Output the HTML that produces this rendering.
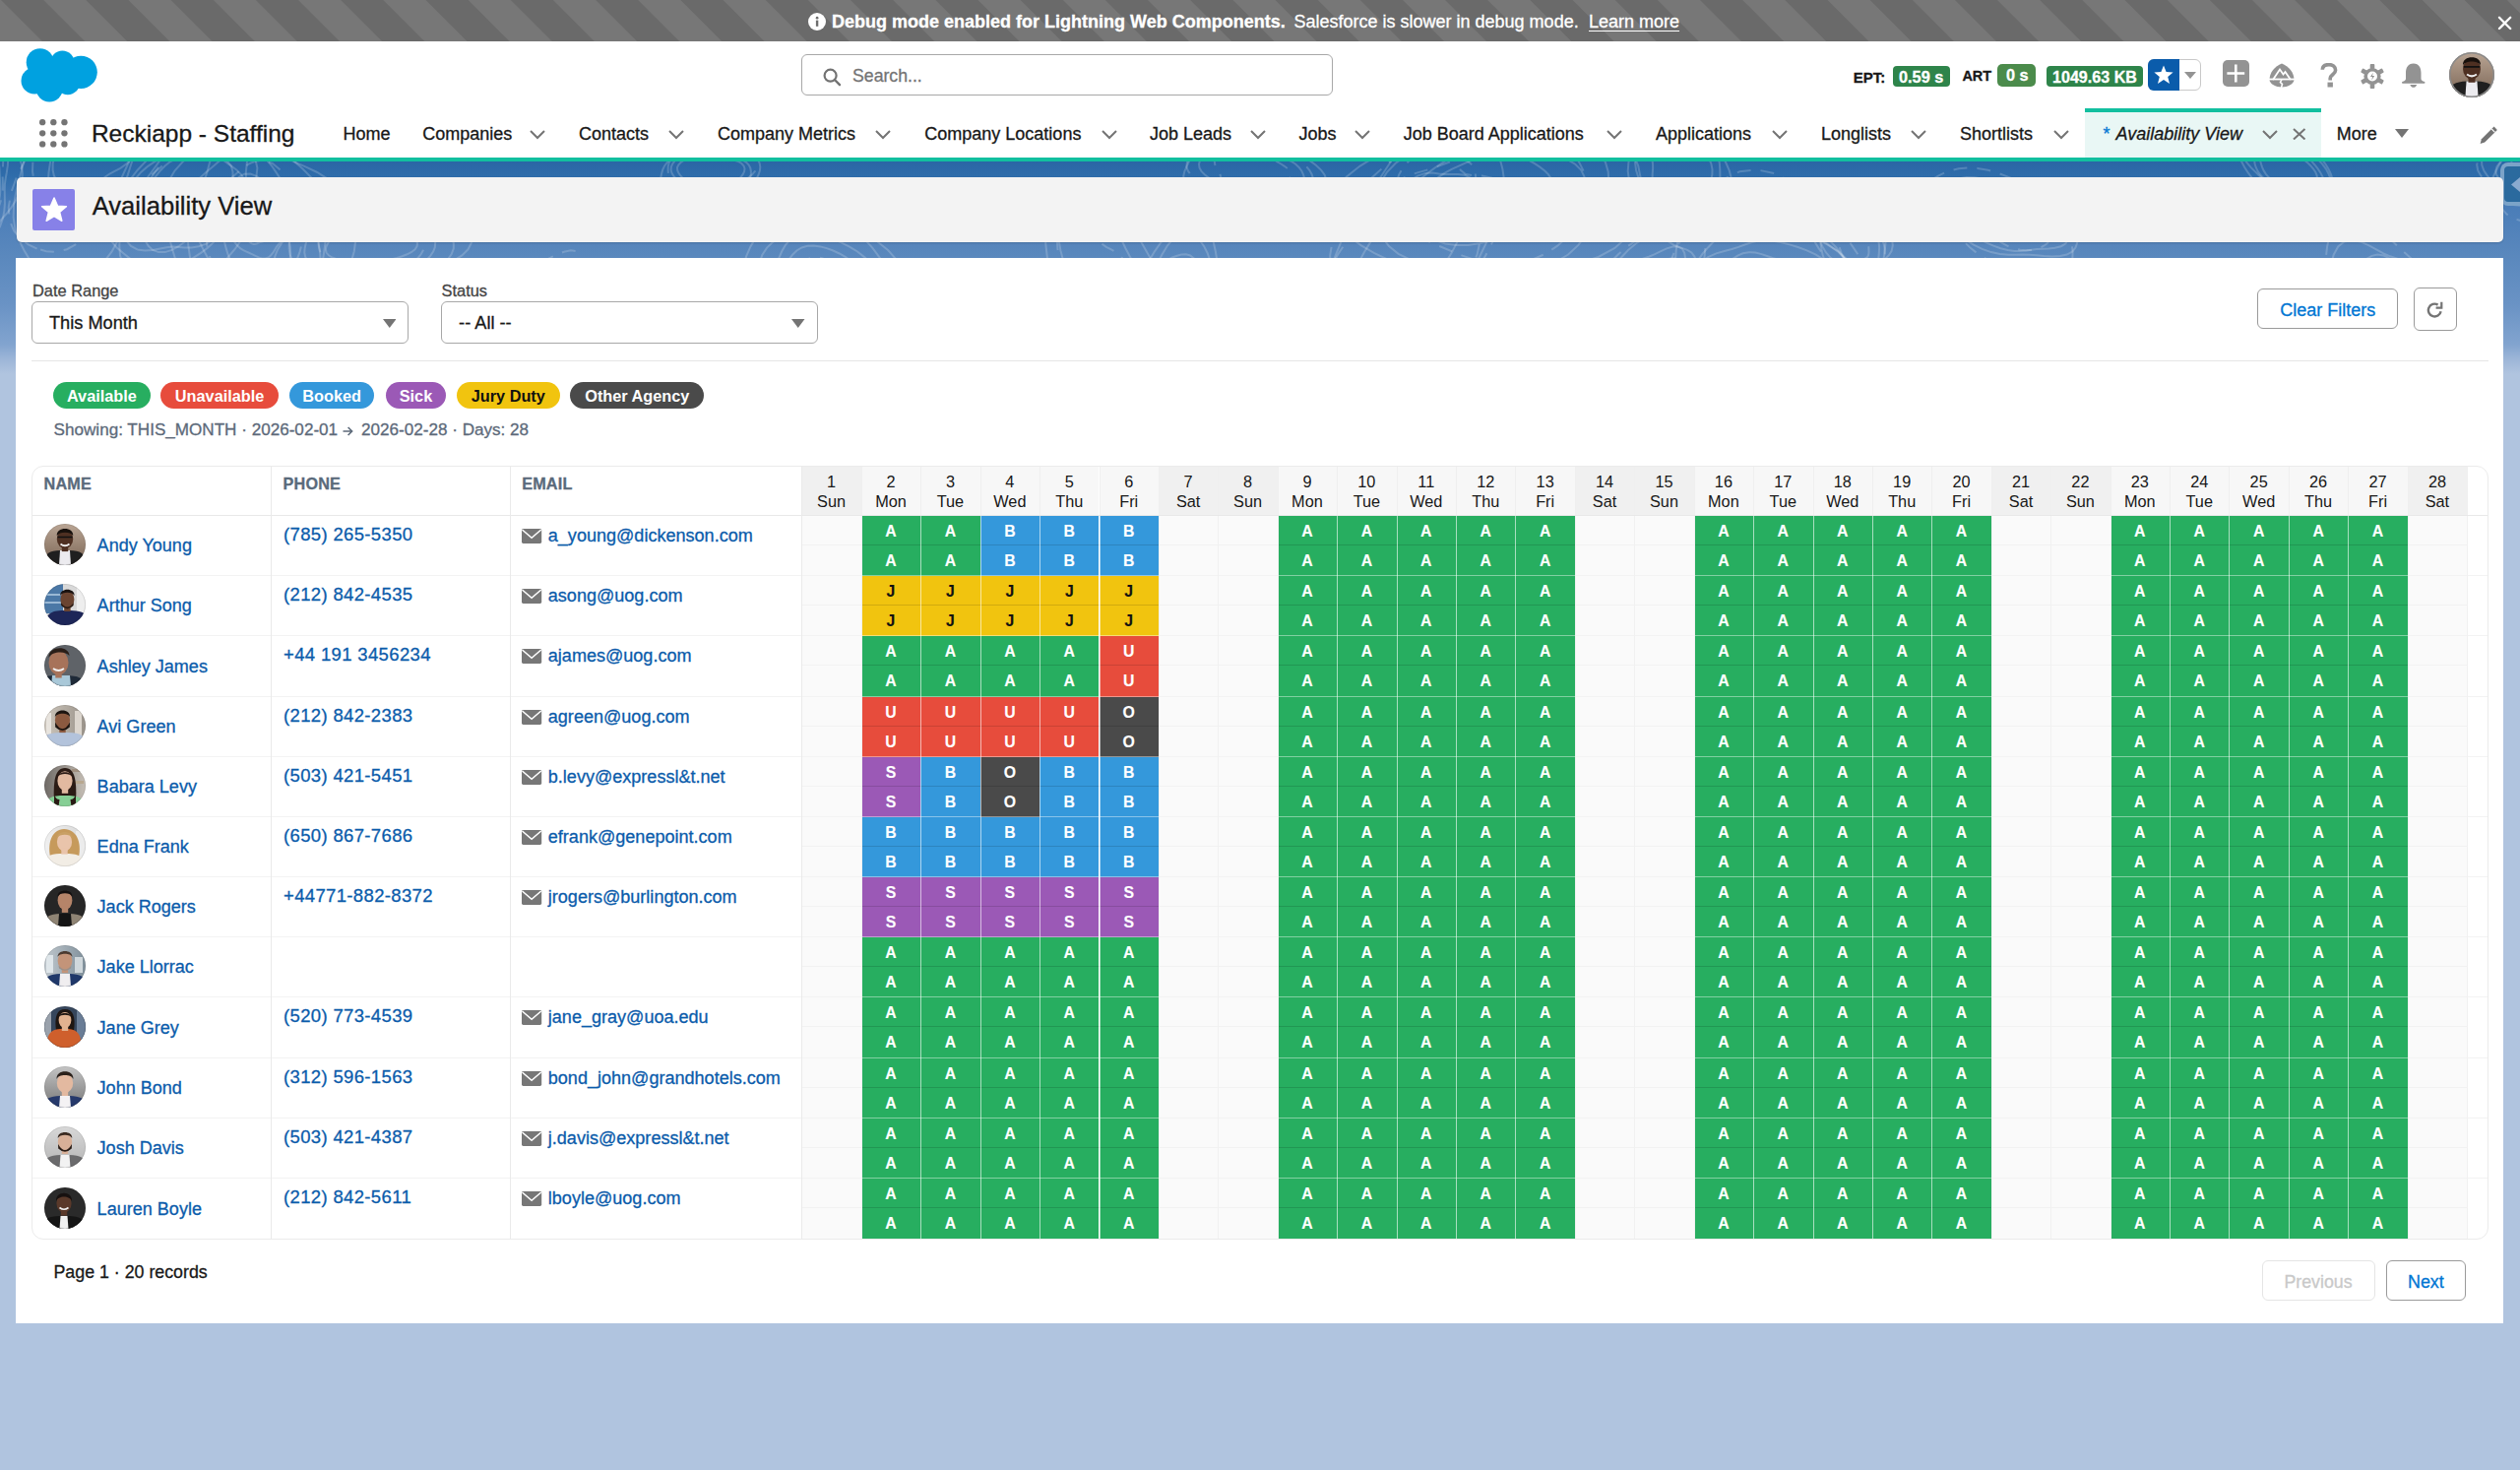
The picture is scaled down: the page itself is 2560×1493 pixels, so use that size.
<!DOCTYPE html>
<html><head><meta charset="utf-8"><title>Availability View</title>
<style>
*{box-sizing:border-box;margin:0;padding:0}
html,body{width:2560px;height:1493px;overflow:hidden;background:#b0c4df;font-family:"Liberation Sans",sans-serif}
.a{position:absolute}
.t{position:absolute;white-space:nowrap;-webkit-text-stroke:0.3px currentColor}

.cell{font-weight:700;font-size:15.8px;text-align:center;-webkit-text-stroke:0.12px currentColor}
.cell .s1{height:30px;line-height:32px;border-bottom:1px solid rgba(0,0,0,.13)}
.cell .s2{height:30px;line-height:32px}
</style></head>
<body>
<div class="a" style="left:0.00px;top:164.00px;width:2560.00px;height:1329.00px;background:linear-gradient(180deg,#2a66a5 0px,#2f6dab 16px,#4a7db8 46px,#5a88bd 96px,#6a93c5 146px,#82a4cf 186px,#9db6d8 201px,#b0c4df 216px,#b0c4df 100%)"></div>
<svg class="a" style="left:0.00px;top:0.00px;" width="2560" height="400" viewBox="0 0 2560 400"><defs><linearGradient id="topofade" x1="0" y1="0" x2="0" y2="1"><stop offset="0.41" stop-color="#fff" stop-opacity="1"/><stop offset="0.75" stop-color="#fff" stop-opacity="0.8"/><stop offset="0.93" stop-color="#fff" stop-opacity="0"/></linearGradient><mask id="topomask"><rect y="164" width="2560" height="236" fill="url(#topofade)"/></mask></defs><g mask="url(#topomask)" fill="none" stroke="rgba(255,255,255,0.19)" stroke-width="2"><path d="M-143.5 230.7 L-147.6 227.7 L-150.7 223.3 L-152.9 218.1 L-154.5 212.3 L-155.4 206.0 L-155.5 199.3 L-154.5 192.3 L-152.5 185.1 L-149.6 178.1 L-146.2 171.7 L-142.7 165.8 L-139.4 160.2 L-136.5 154.6 L-133.8 148.5 L-130.7 141.8 L-126.9 134.9 L-122.4 128.5 L-117.1 123.2 L-111.6 119.6 L-106.0 117.7 L-100.8 117.3 L-96.0 117.7 L-91.3 118.7 L-86.9 120.2 L-82.8 122.3 L-79.2 125.4 L-76.5 129.7 L-74.8 135.2 L-74.2 141.5 L-74.5 148.1 L-75.2 154.8 L-76.3 161.5 L-77.5 168.1 L-79.0 174.9 L-81.2 181.7 L-84.3 188.5 L-88.2 194.7 L-92.8 200.0 L-97.6 204.3 L-102.4 208.0 L-107.0 211.5 L-111.5 215.3 L-116.3 219.6 L-121.5 224.1 L-127.1 228.1 L-133.0 230.9 L-138.6 231.8 L-143.5 230.7"/><path d="M-136.0 216.0 L-138.6 213.2 L-141.0 210.1 L-143.2 206.8 L-145.2 203.2 L-146.6 199.0 L-147.3 194.2 L-147.0 188.7 L-145.9 183.0 L-144.2 177.4 L-142.2 171.8 L-140.4 166.4 L-138.6 160.6 L-136.7 154.4 L-134.2 147.9 L-131.0 141.2 L-126.9 135.2 L-122.0 130.3 L-116.9 127.1 L-111.8 125.4 L-107.1 125.1 L-102.8 125.7 L-99.0 126.9 L-95.5 128.6 L-92.4 130.8 L-89.8 133.7 L-87.9 137.3 L-86.7 141.5 L-85.9 145.9 L-85.3 150.3 L-84.5 154.5 L-83.5 158.8 L-82.4 163.4 L-81.7 168.7 L-81.7 174.7 L-82.9 181.3 L-85.4 187.9 L-89.0 194.0 L-93.3 199.3 L-97.9 203.8 L-102.5 207.6 L-107.1 211.2 L-111.6 214.4 L-116.2 217.3 L-120.8 219.4 L-125.3 220.4 L-129.4 220.0 L-133.0 218.5 L-136.0 216.0"/><path d="M-131.4 207.1 L-133.7 205.1 L-135.5 202.5 L-136.8 199.5 L-137.9 196.2 L-138.8 192.8 L-139.7 189.4 L-140.8 185.8 L-141.8 181.8 L-142.5 177.1 L-142.4 171.8 L-141.2 166.2 L-138.8 160.5 L-135.5 155.4 L-131.7 151.1 L-127.7 147.5 L-123.7 144.6 L-119.9 142.0 L-116.1 139.5 L-112.4 137.4 L-108.7 135.8 L-105.0 135.0 L-101.7 135.3 L-98.8 136.5 L-96.3 138.4 L-94.0 140.5 L-92.0 142.9 L-90.0 145.3 L-88.1 148.1 L-86.7 151.4 L-85.9 155.3 L-85.9 159.8 L-86.6 164.7 L-87.9 169.5 L-89.5 174.4 L-91.1 179.2 L-92.7 184.1 L-94.5 189.4 L-96.8 194.9 L-99.7 200.3 L-103.4 205.1 L-107.5 208.8 L-111.8 211.1 L-115.9 212.0 L-119.7 211.9 L-123.1 211.1 L-126.1 210.0 L-128.9 208.7 L-131.4 207.1"/><path d="M-29.7 247.3 L-33.8 246.2 L-37.8 244.7 L-41.9 242.9 L-46.0 240.3 L-49.7 236.4 L-52.7 230.9 L-54.7 223.9 L-55.5 215.9 L-55.5 207.5 L-55.1 199.1 L-54.5 190.8 L-53.9 182.4 L-53.0 173.7 L-51.5 164.7 L-49.0 155.9 L-45.3 148.3 L-40.6 142.5 L-35.5 139.0 L-30.4 137.4 L-25.6 137.0 L-21.4 136.9 L-17.4 136.4 L-13.5 135.5 L-9.5 134.5 L-5.4 134.1 L-1.3 134.7 L2.6 136.6 L6.3 139.6 L9.7 143.4 L13.2 147.9 L16.5 153.2 L19.6 159.6 L21.9 167.3 L22.9 176.3 L22.2 186.0 L19.7 195.6 L15.8 204.1 L11.2 211.2 L6.6 217.0 L2.3 221.9 L-1.6 226.6 L-5.1 231.6 L-8.7 236.7 L-12.6 241.4 L-16.8 245.0 L-21.2 247.2 L-25.5 247.8 L-29.7 247.3"/><path d="M-29.5 246.1 L-33.1 243.7 L-36.2 239.8 L-38.5 234.7 L-40.1 229.0 L-41.4 223.3 L-42.6 218.1 L-44.0 213.3 L-45.8 208.6 L-47.6 203.4 L-48.9 197.3 L-49.4 190.5 L-48.7 183.3 L-47.0 176.3 L-44.5 169.9 L-41.6 164.0 L-38.7 158.4 L-35.8 152.8 L-32.8 147.0 L-29.5 141.2 L-25.8 136.0 L-21.6 132.1 L-17.2 130.0 L-12.9 129.7 L-8.9 130.9 L-5.1 133.2 L-1.7 136.1 L1.4 139.4 L4.2 143.5 L6.5 148.5 L7.9 154.5 L8.3 161.3 L7.8 168.4 L6.8 175.2 L5.7 181.4 L4.9 187.1 L4.7 192.9 L4.8 199.3 L4.9 206.5 L4.3 214.5 L2.7 222.6 L0.0 230.0 L-3.6 236.2 L-7.8 240.7 L-12.3 243.8 L-16.8 245.8 L-21.2 246.9 L-25.4 247.1 L-29.5 246.1"/><path d="M-27.7 236.3 L-30.7 234.0 L-33.4 231.3 L-35.9 228.6 L-38.5 225.8 L-41.1 222.8 L-43.4 219.1 L-45.1 214.4 L-46.0 208.7 L-45.7 202.4 L-44.5 196.0 L-42.7 190.1 L-40.7 184.8 L-38.9 179.9 L-37.3 175.2 L-35.8 170.3 L-34.3 165.3 L-32.4 160.2 L-30.1 155.5 L-27.3 151.3 L-24.3 147.8 L-21.1 144.7 L-17.6 141.8 L-13.9 139.3 L-10.0 137.6 L-6.1 137.0 L-2.5 138.3 L0.5 141.7 L2.4 147.0 L3.4 153.4 L3.4 160.1 L3.1 166.5 L2.7 172.3 L2.6 177.4 L2.7 182.2 L2.9 187.3 L2.8 192.6 L2.2 198.1 L1.0 203.6 L-0.8 208.8 L-3.0 213.7 L-5.3 218.5 L-7.9 223.1 L-10.7 227.7 L-13.8 231.9 L-17.2 235.2 L-20.8 237.2 L-24.4 237.5 L-27.7 236.3" stroke-dasharray="14 10"/><path d="M-25.7 225.0 L-27.6 222.0 L-29.1 218.5 L-30.3 215.1 L-31.4 212.2 L-32.8 209.9 L-34.5 208.0 L-36.5 205.9 L-38.5 203.1 L-40.1 199.5 L-41.0 195.0 L-41.2 190.0 L-40.6 184.8 L-39.5 179.6 L-38.1 174.6 L-36.4 169.7 L-34.4 165.2 L-32.0 161.1 L-29.3 157.9 L-26.3 155.8 L-23.4 155.0 L-20.6 155.1 L-18.1 155.6 L-15.7 156.2 L-13.4 156.5 L-11.1 156.5 L-8.6 156.6 L-6.1 157.4 L-3.9 159.2 L-2.2 162.1 L-1.1 165.9 L-0.6 170.2 L-0.4 174.5 L-0.2 178.8 L0.0 183.0 L0.3 187.4 L0.4 192.1 L0.1 197.2 L-0.7 202.3 L-2.2 207.3 L-4.3 211.7 L-6.7 215.6 L-9.2 219.0 L-11.9 221.9 L-14.7 224.4 L-17.6 226.3 L-20.5 227.2 L-23.3 226.8 L-25.7 225.0"/><path d="M-23.8 214.6 L-25.4 213.3 L-26.9 211.9 L-28.4 210.7 L-29.9 209.3 L-31.4 207.7 L-32.6 205.5 L-33.5 202.9 L-34.1 199.8 L-34.5 196.6 L-34.7 193.2 L-34.8 189.6 L-34.8 185.8 L-34.7 181.8 L-34.2 177.5 L-33.1 173.4 L-31.4 169.7 L-29.2 167.0 L-26.8 165.4 L-24.4 164.8 L-22.2 164.9 L-20.2 165.2 L-18.4 165.3 L-16.7 165.3 L-15.0 165.1 L-13.2 165.1 L-11.5 165.6 L-9.9 166.6 L-8.5 168.0 L-7.1 169.7 L-5.7 171.6 L-4.3 173.9 L-3.0 176.5 L-2.0 179.7 L-1.4 183.4 L-1.6 187.5 L-2.4 191.6 L-3.8 195.5 L-5.5 198.8 L-7.4 201.6 L-9.1 204.2 L-10.8 206.8 L-12.4 209.3 L-14.1 211.9 L-16.0 214.0 L-18.1 215.4 L-20.1 215.9 L-22.1 215.6 L-23.8 214.6"/><path d="M-22.2 205.6 L-23.4 205.4 L-24.6 204.9 L-25.7 204.3 L-27.0 203.6 L-28.2 202.8 L-29.5 201.7 L-30.7 200.1 L-31.6 197.9 L-32.0 195.3 L-31.8 192.3 L-31.1 189.4 L-30.0 186.7 L-28.8 184.4 L-27.6 182.4 L-26.5 180.6 L-25.5 178.8 L-24.6 177.1 L-23.5 175.4 L-22.4 174.0 L-21.2 172.9 L-19.9 172.1 L-18.6 171.6 L-17.3 171.3 L-16.0 170.9 L-14.6 170.7 L-13.2 170.7 L-11.9 171.1 L-10.7 172.2 L-9.7 173.9 L-9.2 176.0 L-8.8 178.4 L-8.7 180.8 L-8.6 183.1 L-8.4 185.5 L-8.3 188.0 L-8.4 190.6 L-8.7 193.3 L-9.4 195.9 L-10.5 198.2 L-11.8 200.1 L-13.3 201.4 L-14.7 202.3 L-16.1 203.0 L-17.3 203.6 L-18.5 204.3 L-19.7 205.0 L-21.0 205.4 L-22.2 205.6"/><path d="M-21.1 199.2 L-21.8 199.0 L-22.5 198.7 L-23.2 198.2 L-23.8 197.5 L-24.2 196.5 L-24.5 195.3 L-24.6 194.0 L-24.6 192.7 L-24.6 191.4 L-24.6 190.2 L-24.6 189.0 L-24.5 187.7 L-24.3 186.4 L-23.9 185.1 L-23.4 184.0 L-22.8 183.1 L-22.1 182.4 L-21.4 181.9 L-20.8 181.3 L-20.2 180.6 L-19.6 179.8 L-18.9 179.0 L-18.1 178.3 L-17.3 177.9 L-16.4 177.8 L-15.7 178.1 L-15.0 178.7 L-14.5 179.5 L-14.0 180.5 L-13.6 181.6 L-13.3 182.8 L-13.2 184.1 L-13.3 185.6 L-13.5 187.0 L-14.0 188.3 L-14.5 189.5 L-15.0 190.5 L-15.4 191.4 L-15.7 192.4 L-16.0 193.6 L-16.3 194.8 L-16.7 196.1 L-17.3 197.3 L-18.0 198.3 L-18.8 198.9 L-19.5 199.2 L-20.3 199.3 L-21.1 199.2"/><path d="M30.6 264.5 L24.6 254.5 L19.4 244.2 L15.5 233.1 L13.6 220.7 L14.1 207.0 L16.7 192.8 L20.3 179.1 L23.7 166.2 L26.2 153.7 L27.7 140.7 L29.3 126.3 L32.6 110.4 L38.6 94.2 L47.6 79.1 L59.1 66.8 L71.7 57.9 L84.2 51.7 L96.2 46.6 L107.9 40.9 L120.1 34.0 L133.3 26.7 L147.1 20.8 L160.5 18.6 L172.1 21.6 L180.6 30.0 L185.5 42.5 L187.6 57.1 L187.7 72.2 L187.0 86.9 L185.7 101.1 L183.6 115.1 L180.0 129.3 L174.3 143.2 L166.9 156.4 L158.6 168.3 L150.6 179.2 L143.7 190.3 L137.7 203.1 L131.5 218.6 L123.8 236.8 L113.5 255.7 L100.5 272.7 L85.7 285.0 L70.8 290.6 L57.5 289.7 L46.4 283.5 L37.7 274.5 L30.6 264.5"/><path d="M37.6 252.6 L28.8 248.4 L20.8 242.5 L14.1 234.6 L9.8 223.9 L8.7 210.7 L11.2 195.8 L16.7 180.5 L23.7 166.2 L30.7 153.4 L36.7 141.7 L41.5 130.2 L45.8 118.2 L50.9 105.4 L57.6 92.9 L66.3 81.9 L76.3 73.9 L86.7 69.0 L96.6 66.5 L105.7 65.0 L114.6 62.9 L123.8 59.5 L133.9 55.2 L144.7 51.6 L155.4 50.3 L165.0 52.4 L172.8 58.0 L178.5 66.4 L182.6 76.7 L185.5 88.0 L187.5 100.1 L188.2 113.3 L186.7 127.7 L182.1 142.7 L174.2 157.2 L163.4 169.8 L151.3 179.6 L139.6 186.6 L129.5 191.9 L121.4 197.4 L114.5 204.7 L107.6 214.4 L99.6 225.9 L90.0 237.4 L79.2 247.0 L68.0 253.2 L57.1 255.8 L46.9 255.2 L37.6 252.6" stroke-dasharray="14 10"/><path d="M56.2 220.6 L53.0 213.6 L49.8 207.3 L46.1 201.9 L41.8 196.6 L37.7 190.6 L34.5 183.1 L33.0 174.1 L33.4 163.9 L35.2 153.1 L37.8 141.8 L40.9 130.0 L44.6 117.5 L49.6 104.3 L56.4 91.2 L65.3 79.8 L75.6 71.6 L86.5 67.7 L96.6 68.3 L105.1 72.2 L111.8 77.3 L117.4 81.7 L122.8 84.2 L128.7 84.9 L135.3 84.7 L142.3 85.1 L148.8 87.1 L154.2 91.2 L158.5 97.2 L161.9 104.3 L164.8 112.5 L167.3 121.5 L169.0 131.9 L169.1 143.6 L166.7 156.3 L161.3 169.2 L153.4 180.8 L143.8 190.4 L133.8 197.7 L124.3 203.5 L115.7 209.0 L107.6 214.9 L99.5 221.5 L90.9 227.9 L82.0 232.6 L73.4 234.2 L66.0 232.3 L60.3 227.3 L56.2 220.6" stroke-dasharray="14 10"/><path d="M63.8 207.5 L59.5 204.1 L55.4 200.5 L51.9 195.9 L49.7 189.9 L49.0 182.8 L49.5 175.0 L50.7 167.2 L51.9 159.6 L53.0 151.8 L54.1 143.7 L56.0 134.9 L59.1 125.9 L63.8 117.2 L69.8 109.6 L76.5 103.3 L83.4 98.0 L90.1 93.0 L97.0 87.6 L104.2 81.5 L112.2 75.4 L120.7 70.5 L128.9 68.3 L136.0 69.7 L141.0 74.9 L143.7 83.0 L144.4 92.5 L143.8 101.9 L143.0 110.4 L142.5 117.8 L142.4 124.6 L142.2 131.3 L141.5 138.4 L140.1 145.7 L137.9 153.1 L135.3 160.7 L132.6 168.7 L129.8 177.6 L126.4 187.6 L121.9 198.5 L115.8 209.3 L108.2 218.6 L99.5 224.7 L91.0 227.0 L83.3 225.5 L77.1 221.5 L72.2 216.4 L67.9 211.5 L63.8 207.5"/><path d="M70.7 195.7 L67.4 192.8 L64.2 189.8 L60.8 186.8 L57.5 183.2 L54.9 178.6 L53.6 172.8 L53.7 166.0 L55.3 158.8 L57.8 151.5 L60.8 144.4 L63.9 137.5 L67.2 130.6 L70.9 123.7 L75.4 117.3 L80.6 112.0 L86.4 108.5 L92.2 107.2 L97.4 107.8 L101.7 109.2 L105.5 110.4 L109.1 110.4 L113.3 109.0 L118.3 106.7 L123.9 104.4 L129.6 103.3 L134.8 104.1 L139.0 106.8 L141.9 111.3 L143.8 116.9 L144.9 123.3 L145.2 130.2 L144.6 137.6 L142.8 145.5 L139.4 153.3 L134.5 160.4 L128.6 166.4 L122.3 170.8 L116.5 173.9 L111.4 176.5 L107.1 179.5 L103.1 183.3 L98.9 188.1 L94.1 193.0 L88.8 197.1 L83.5 199.5 L78.5 199.8 L74.3 198.3 L70.7 195.7"/><path d="M131.4 262.1 L125.1 257.0 L118.6 251.5 L112.9 244.8 L109.0 236.5 L107.7 226.9 L109.0 216.6 L112.2 206.3 L116.4 196.3 L120.8 186.6 L125.2 176.8 L129.9 166.8 L135.6 156.6 L142.8 146.7 L151.5 137.9 L161.5 130.8 L172.2 125.5 L183.1 121.7 L194.1 119.0 L205.1 116.9 L216.2 115.8 L227.0 116.4 L236.8 119.5 L244.7 125.6 L249.8 134.4 L252.0 144.9 L251.9 156.0 L250.7 166.4 L249.8 175.6 L250.0 183.9 L251.4 191.9 L253.2 200.5 L254.4 210.1 L253.9 220.6 L251.0 231.5 L246.0 242.3 L239.1 252.5 L230.9 262.1 L221.7 271.1 L211.6 279.3 L200.6 286.3 L189.0 291.1 L177.3 293.0 L166.4 291.6 L156.9 287.2 L149.2 280.9 L142.9 274.0 L137.2 267.6 L131.4 262.1"/><path d="M125.1 268.9 L122.0 259.6 L121.3 249.6 L121.8 239.7 L122.7 230.6 L123.3 222.2 L123.7 214.0 L124.3 205.8 L126.0 197.2 L129.1 188.7 L133.7 180.5 L139.5 173.0 L145.9 166.1 L152.5 159.4 L159.4 152.8 L166.7 146.2 L174.8 140.1 L183.6 135.1 L192.8 132.0 L201.9 131.1 L210.5 132.3 L218.3 134.8 L225.6 137.9 L232.9 141.2 L240.4 144.5 L247.8 148.6 L254.5 154.1 L259.3 161.5 L261.4 170.6 L260.3 180.7 L256.6 191.0 L251.1 200.6 L245.1 209.1 L239.2 216.8 L234.0 224.1 L229.0 231.2 L223.8 238.3 L217.9 245.1 L211.3 251.4 L204.1 256.9 L196.3 261.8 L188.1 266.4 L179.4 271.1 L169.9 275.6 L159.6 279.3 L149.1 281.2 L139.1 280.3 L130.9 276.1 L125.1 268.9"/><path d="M139.5 253.4 L133.0 250.0 L128.4 244.5 L125.9 237.4 L125.2 229.5 L125.6 221.5 L126.6 213.5 L128.0 205.6 L130.0 197.6 L133.0 189.7 L137.3 182.1 L142.9 175.2 L149.5 169.4 L156.5 164.6 L163.5 160.6 L170.3 156.9 L177.1 153.4 L184.1 150.0 L191.3 147.4 L198.6 146.1 L205.5 146.7 L211.6 149.0 L216.7 152.7 L221.0 157.0 L225.0 161.1 L229.5 164.8 L234.6 168.4 L240.2 172.4 L245.3 177.6 L249.1 184.1 L250.7 192.0 L249.9 200.6 L246.8 209.3 L242.1 217.6 L236.5 225.2 L230.3 232.0 L223.7 238.2 L216.7 243.5 L209.4 247.7 L201.9 250.3 L194.5 251.5 L187.6 251.4 L181.4 250.9 L175.4 250.6 L169.4 251.2 L162.7 252.5 L155.1 253.9 L147.2 254.5 L139.5 253.4"/><path d="M147.6 244.6 L145.3 239.1 L143.6 233.6 L142.0 228.2 L140.7 222.8 L140.0 217.1 L140.2 211.2 L141.6 205.0 L144.2 199.1 L147.6 193.4 L151.3 188.2 L155.1 183.2 L159.0 178.2 L163.0 173.2 L167.6 168.5 L172.8 164.3 L178.5 161.3 L184.4 159.6 L190.2 159.0 L195.8 159.0 L201.2 159.2 L206.8 159.2 L212.8 159.0 L219.2 159.3 L225.4 160.7 L230.8 163.6 L234.7 168.3 L236.5 174.5 L236.5 181.4 L234.9 188.4 L232.4 195.2 L229.6 201.5 L226.6 207.3 L223.4 212.8 L219.9 218.0 L215.9 222.7 L211.4 226.9 L206.8 230.5 L202.1 233.8 L197.5 237.3 L192.7 241.3 L187.4 245.7 L181.4 250.2 L174.7 253.9 L167.7 256.1 L161.0 256.1 L155.2 253.9 L150.7 249.8 L147.6 244.6"/><path d="M295.8 314.6 L285.8 313.4 L276.7 313.2 L268.1 315.0 L258.9 318.6 L248.3 322.7 L236.1 325.1 L223.0 323.9 L210.4 318.2 L199.4 308.4 L190.7 295.6 L184.3 281.5 L179.4 267.3 L175.1 253.2 L171.3 239.3 L168.1 225.1 L166.6 210.7 L167.5 196.7 L171.3 184.0 L177.6 173.3 L185.4 164.6 L193.8 157.4 L202.1 150.8 L210.3 144.4 L218.9 138.3 L228.4 133.7 L238.9 131.6 L250.0 133.1 L260.9 137.9 L271.0 144.8 L280.3 152.3 L289.2 159.0 L298.8 164.4 L309.8 169.2 L322.2 175.0 L335.0 183.1 L346.6 194.3 L355.4 208.4 L360.5 224.1 L361.7 240.1 L359.8 255.2 L355.8 269.0 L350.5 281.4 L344.2 292.5 L336.7 301.9 L327.9 309.2 L317.6 313.6 L306.7 315.2 L295.8 314.6"/><path d="M292.2 306.3 L284.4 309.0 L276.7 312.9 L268.4 317.9 L258.8 323.0 L247.8 326.3 L235.8 326.2 L223.9 321.7 L213.4 313.0 L205.1 301.1 L199.3 287.8 L195.5 274.2 L193.0 261.3 L191.3 249.2 L190.4 237.7 L190.6 226.8 L192.2 216.6 L195.2 207.4 L199.3 199.3 L203.5 191.9 L207.2 184.4 L210.1 175.9 L212.8 165.9 L216.3 154.9 L221.5 144.2 L229.1 135.8 L238.8 131.2 L249.8 131.0 L260.9 134.8 L271.5 141.3 L281.1 148.9 L290.2 156.5 L299.0 164.0 L307.8 171.7 L316.2 180.4 L323.4 190.6 L328.6 202.2 L331.4 214.4 L332.1 226.4 L331.4 237.7 L330.2 248.4 L328.8 258.7 L327.3 268.8 L325.0 278.8 L321.2 287.8 L315.6 295.2 L308.4 300.5 L300.3 303.9 L292.2 306.3"/><path d="M293.9 310.3 L283.7 307.0 L274.4 302.1 L266.3 297.2 L259.2 293.5 L252.3 291.1 L245.2 289.4 L237.8 287.2 L230.3 283.7 L223.2 278.3 L217.1 271.4 L211.9 263.5 L207.3 255.1 L203.0 246.3 L198.8 237.1 L195.1 227.1 L192.5 216.6 L191.8 206.1 L193.6 196.1 L197.5 187.6 L203.1 180.6 L209.3 174.9 L215.6 169.8 L221.7 164.5 L228.0 159.2 L235.0 154.3 L243.0 151.2 L251.8 151.0 L260.7 154.2 L269.0 160.4 L276.1 168.5 L281.9 177.1 L286.9 185.0 L291.8 191.9 L297.1 198.0 L302.9 204.0 L308.8 210.8 L314.2 218.6 L318.5 227.5 L321.6 237.0 L323.7 246.9 L325.1 257.2 L325.8 268.0 L325.6 279.2 L323.8 290.2 L319.6 299.9 L312.9 307.0 L304.0 310.5 L293.9 310.3"/><path d="M285.7 291.4 L279.8 294.7 L273.1 295.7 L266.1 294.7 L259.2 292.2 L252.5 289.2 L246.0 286.2 L239.3 283.3 L232.3 280.2 L225.2 275.9 L218.6 270.0 L213.6 262.4 L210.6 253.6 L209.9 244.6 L211.0 236.1 L213.0 228.5 L215.2 221.9 L217.0 215.7 L218.5 209.7 L220.0 203.7 L222.0 197.8 L224.8 192.5 L228.3 187.7 L232.4 183.5 L236.8 179.3 L241.6 175.0 L247.0 170.4 L253.3 166.2 L260.6 163.4 L268.7 163.1 L276.8 166.0 L284.0 172.0 L289.6 180.3 L293.6 189.6 L296.2 198.8 L298.1 207.2 L300.0 214.7 L302.1 221.7 L304.3 228.6 L305.9 235.7 L306.6 242.9 L306.0 249.9 L304.4 256.4 L302.1 262.4 L299.6 268.2 L297.0 274.2 L294.0 280.4 L290.4 286.4 L285.7 291.4" stroke-dasharray="14 10"/><path d="M279.2 276.5 L274.1 276.9 L269.3 277.3 L264.4 277.8 L259.3 278.5 L253.9 278.5 L248.3 277.4 L242.8 274.6 L238.0 270.1 L234.3 264.4 L231.5 258.2 L229.6 251.9 L228.1 246.0 L226.8 240.4 L225.8 234.9 L225.2 229.5 L225.4 224.2 L226.3 219.3 L227.9 214.8 L229.8 210.7 L231.6 206.6 L233.1 201.9 L234.5 196.4 L236.3 190.4 L239.0 184.4 L243.0 179.5 L248.3 176.7 L254.3 176.5 L260.4 178.8 L266.1 183.0 L271.1 188.1 L275.4 193.5 L279.1 198.6 L282.6 203.5 L285.7 208.4 L288.4 213.5 L290.3 218.9 L291.5 224.3 L292.1 229.6 L292.5 234.7 L293.1 239.8 L293.9 245.2 L294.8 251.2 L295.2 257.5 L294.5 263.6 L292.4 269.0 L288.8 273.0 L284.2 275.4 L279.2 276.5"/><path d="M272.6 261.5 L269.5 262.5 L266.2 262.4 L262.8 261.4 L259.5 259.9 L256.5 258.4 L253.5 257.0 L250.4 255.6 L247.2 254.1 L244.0 252.1 L241.0 249.4 L238.5 246.1 L236.4 242.4 L234.7 238.4 L233.3 234.3 L231.9 230.0 L230.7 225.4 L230.0 220.7 L230.1 216.0 L231.4 211.8 L234.0 208.7 L237.5 206.9 L241.5 206.4 L245.5 206.7 L249.0 207.4 L252.0 207.7 L254.7 207.6 L257.3 207.0 L260.1 206.3 L263.2 206.0 L266.4 206.4 L269.7 207.6 L273.0 209.4 L276.2 211.6 L279.4 214.2 L282.6 217.3 L285.7 220.9 L288.2 225.1 L289.7 229.8 L290.1 234.5 L289.2 238.9 L287.3 242.7 L285.0 245.8 L282.7 248.5 L280.7 251.1 L279.0 253.9 L277.3 256.7 L275.2 259.4 L272.6 261.5"/><path d="M265.7 245.7 L264.3 246.0 L262.8 246.6 L261.3 247.2 L259.7 247.7 L257.8 247.9 L255.9 247.4 L254.2 246.4 L252.6 244.8 L251.3 242.9 L250.2 241.0 L249.1 239.2 L247.9 237.4 L246.6 235.5 L245.3 233.3 L244.4 231.0 L243.9 228.5 L244.1 226.1 L244.8 224.0 L245.9 222.2 L247.3 220.7 L248.7 219.5 L250.1 218.5 L251.7 217.7 L253.3 217.2 L255.0 217.1 L256.8 217.4 L258.5 218.2 L260.0 219.0 L261.4 219.7 L262.9 220.2 L264.6 220.4 L266.5 220.5 L268.7 221.0 L270.9 222.0 L272.9 223.6 L274.4 225.8 L275.3 228.3 L275.6 230.9 L275.4 233.4 L275.0 235.7 L274.5 237.8 L273.8 239.7 L272.9 241.5 L271.8 243.0 L270.5 244.2 L268.9 244.9 L267.3 245.4 L265.7 245.7"/><path d="M281.8 254.1 L285.5 248.0 L289.4 242.2 L293.1 236.5 L296.8 230.8 L301.2 225.0 L307.1 219.2 L315.1 213.9 L325.0 209.4 L336.3 206.0 L348.4 203.5 L360.8 201.7 L373.3 200.4 L385.9 199.5 L398.8 199.0 L411.7 199.3 L424.4 200.6 L436.1 203.1 L446.4 206.8 L455.1 211.3 L462.2 216.4 L468.2 221.9 L473.2 227.6 L477.0 233.7 L479.1 240.1 L478.8 246.7 L475.5 253.3 L469.3 259.4 L460.8 264.8 L451.1 269.5 L441.1 273.5 L431.6 277.2 L422.5 281.0 L413.3 285.0 L403.4 289.0 L392.4 292.6 L380.1 295.5 L367.0 297.2 L353.7 297.6 L340.5 296.9 L327.8 295.2 L315.7 292.7 L304.4 289.4 L294.4 285.2 L286.4 280.1 L281.0 274.0 L278.6 267.4 L279.2 260.7 L281.8 254.1"/><path d="M293.7 253.3 L293.7 247.9 L294.5 242.5 L296.4 236.9 L299.8 231.4 L305.1 226.1 L312.3 221.3 L321.0 217.1 L330.8 213.7 L341.0 210.8 L351.6 208.4 L362.4 206.3 L373.6 204.7 L385.1 203.9 L396.5 204.1 L407.1 205.7 L416.4 208.4 L424.1 212.1 L430.1 216.3 L435.2 220.5 L440.0 224.5 L444.9 228.4 L450.0 232.4 L454.8 236.7 L458.7 241.5 L460.8 246.8 L460.8 252.4 L458.7 258.0 L454.9 263.6 L449.6 269.0 L442.9 274.2 L435.0 279.0 L425.6 283.2 L414.8 286.5 L403.2 288.6 L391.2 289.3 L379.6 288.8 L368.9 287.4 L359.1 285.7 L349.9 284.0 L340.9 282.5 L331.6 280.9 L322.4 279.0 L313.7 276.3 L306.2 272.9 L300.5 268.6 L296.7 263.7 L294.6 258.6 L293.7 253.3"/><path d="M309.6 252.2 L310.6 247.8 L311.9 243.5 L313.8 239.2 L316.4 234.9 L320.3 230.6 L325.4 226.6 L331.9 223.0 L339.3 219.9 L347.3 217.2 L355.8 214.8 L364.6 212.6 L374.1 210.8 L384.0 209.5 L394.2 209.1 L404.0 210.0 L412.7 212.0 L419.9 215.2 L425.3 219.1 L429.2 223.2 L432.1 227.3 L434.7 231.2 L437.2 235.0 L439.5 238.8 L441.4 242.8 L442.2 246.9 L441.8 251.2 L440.1 255.6 L437.2 259.9 L433.4 264.2 L428.8 268.5 L423.3 272.7 L416.6 276.6 L408.5 280.0 L399.3 282.6 L389.4 284.0 L379.3 284.3 L369.7 283.6 L360.8 282.2 L352.5 280.5 L344.6 278.8 L337.0 276.9 L329.5 274.8 L322.6 272.2 L316.8 269.0 L312.6 265.2 L310.2 261.0 L309.3 256.6 L309.6 252.2"/><path d="M324.0 251.1 L323.5 247.7 L323.7 244.2 L324.8 240.6 L327.1 237.1 L330.5 233.7 L334.9 230.5 L339.9 227.4 L345.5 224.5 L351.7 221.8 L358.6 219.3 L366.3 217.4 L374.5 216.4 L382.7 216.4 L390.4 217.5 L397.1 219.4 L402.8 221.8 L407.6 224.4 L411.8 226.9 L416.0 229.3 L420.1 231.7 L424.1 234.2 L427.5 237.0 L430.0 240.1 L431.4 243.5 L431.7 247.0 L431.2 250.6 L429.8 254.3 L427.8 258.0 L424.9 261.7 L420.9 265.3 L415.6 268.5 L409.1 271.2 L401.8 273.1 L394.0 274.3 L386.2 274.8 L378.6 275.0 L371.3 275.0 L364.1 274.9 L356.9 274.5 L349.7 273.8 L343.0 272.4 L337.2 270.3 L332.7 267.6 L329.4 264.5 L327.3 261.1 L325.9 257.8 L324.9 254.4 L324.0 251.1" stroke-dasharray="14 10"/><path d="M331.4 250.6 L332.8 247.7 L334.6 244.9 L336.7 242.2 L339.0 239.6 L341.6 237.0 L344.9 234.5 L348.9 232.3 L353.6 230.5 L358.9 229.1 L364.4 228.2 L369.9 227.7 L375.3 227.4 L380.6 227.2 L385.9 227.2 L391.2 227.5 L396.3 228.1 L401.1 229.2 L405.3 230.7 L408.9 232.5 L412.2 234.5 L415.2 236.7 L418.1 238.9 L420.8 241.4 L422.9 244.1 L424.0 247.1 L423.6 250.2 L421.6 253.2 L418.2 256.0 L413.6 258.3 L408.5 260.3 L403.3 261.9 L398.3 263.2 L393.3 264.4 L388.3 265.5 L383.2 266.3 L378.1 266.9 L372.9 267.1 L367.7 267.0 L362.6 266.6 L357.6 266.1 L352.4 265.4 L347.2 264.5 L342.1 263.3 L337.5 261.5 L333.9 259.3 L331.6 256.6 L330.9 253.6 L331.4 250.6"/><path d="M489.7 358.9 L487.3 355.7 L485.8 351.8 L485.4 347.0 L486.2 341.5 L488.0 335.7 L490.4 329.6 L493.0 323.5 L495.8 317.2 L499.1 310.6 L503.2 303.6 L508.4 296.4 L514.7 289.5 L521.7 283.3 L529.1 278.1 L536.4 273.7 L543.6 269.9 L550.7 266.1 L557.9 262.3 L565.5 258.6 L573.0 255.7 L579.9 254.3 L585.4 255.1 L589.1 258.0 L590.8 262.6 L590.9 268.4 L590.0 274.5 L588.6 280.4 L587.1 286.2 L585.5 291.8 L583.5 297.6 L580.7 303.7 L577.1 309.9 L572.9 316.1 L568.3 322.3 L563.4 328.7 L558.3 335.4 L552.6 342.7 L546.1 350.3 L538.5 357.8 L530.2 364.4 L521.9 369.2 L514.1 371.6 L507.6 371.8 L502.5 370.2 L498.5 367.6 L495.3 364.6 L492.4 361.8 L489.7 358.9" stroke-dasharray="14 10"/><path d="M492.2 356.5 L491.5 352.2 L491.4 347.6 L491.7 342.9 L492.6 338.1 L494.2 332.9 L496.8 327.4 L500.2 321.9 L504.1 316.5 L508.1 311.2 L512.0 306.1 L515.8 300.8 L519.8 294.9 L524.4 288.4 L529.9 281.6 L536.5 275.2 L543.6 269.8 L550.7 266.1 L557.2 264.1 L562.8 263.8 L567.5 264.7 L571.4 266.1 L574.9 267.9 L577.9 270.1 L580.2 272.8 L581.6 276.2 L582.0 280.4 L581.3 285.1 L580.0 290.1 L578.4 295.0 L576.9 299.9 L575.4 304.9 L573.6 310.2 L571.1 316.0 L567.4 322.1 L562.6 328.2 L556.9 333.9 L550.7 338.9 L544.4 343.1 L538.3 346.9 L532.2 350.6 L526.0 354.4 L519.5 358.1 L512.9 361.4 L506.6 363.6 L501.0 364.2 L496.7 363.0 L493.8 360.3 L492.2 356.5"/><path d="M505.1 344.2 L503.8 341.8 L502.8 339.2 L501.7 336.5 L500.5 333.7 L499.2 330.6 L498.5 326.8 L498.8 322.2 L500.7 316.8 L504.1 311.0 L508.9 305.2 L514.6 300.1 L520.5 295.7 L526.2 291.9 L531.6 288.7 L536.7 285.7 L541.7 282.9 L546.6 280.6 L551.3 278.8 L555.6 277.8 L559.4 277.7 L562.7 278.2 L565.7 279.1 L568.6 280.0 L571.5 281.0 L574.3 282.4 L576.5 284.4 L577.9 287.3 L577.9 291.2 L576.7 295.8 L574.5 300.7 L571.7 305.7 L568.7 310.6 L565.7 315.6 L562.6 320.7 L559.0 326.1 L554.7 331.6 L549.6 336.9 L544.0 341.4 L538.2 344.9 L532.7 347.1 L527.7 348.3 L523.3 348.7 L519.3 348.8 L515.7 348.7 L512.3 348.4 L509.3 347.6 L506.9 346.2 L505.1 344.2"/><path d="M505.8 343.5 L504.0 341.7 L502.8 339.1 L502.3 336.1 L502.3 332.7 L503.0 328.9 L504.6 324.7 L507.2 320.3 L510.6 315.9 L514.5 311.7 L518.7 308.0 L522.6 304.8 L526.3 301.7 L529.7 298.6 L533.2 295.4 L536.9 292.0 L540.9 288.7 L545.1 286.1 L549.1 284.2 L552.8 283.3 L556.1 283.2 L558.9 283.5 L561.6 284.0 L564.2 284.7 L566.8 285.5 L569.0 286.8 L570.7 288.8 L571.5 291.5 L571.3 294.8 L570.3 298.7 L568.6 302.7 L566.5 306.9 L564.2 311.0 L561.5 315.3 L558.4 319.5 L554.7 323.6 L550.6 327.3 L546.2 330.3 L541.9 332.5 L537.9 334.0 L534.4 335.1 L531.0 336.3 L527.7 337.8 L524.0 339.8 L520.0 341.8 L515.8 343.5 L511.8 344.6 L508.4 344.6 L505.8 343.5"/><path d="M606.0 406.7 L601.3 404.4 L596.8 401.6 L592.6 398.0 L589.1 393.5 L586.6 388.1 L585.1 382.0 L584.7 375.5 L585.1 369.0 L585.9 362.7 L586.9 356.5 L587.9 350.4 L589.1 344.2 L591.0 338.0 L593.8 332.1 L597.5 326.9 L602.0 322.9 L606.9 319.9 L611.8 317.8 L616.5 315.9 L621.1 313.9 L625.8 311.6 L630.9 309.3 L636.4 307.5 L642.0 306.8 L647.4 307.7 L652.3 310.2 L656.4 314.1 L659.8 319.0 L662.5 324.5 L664.5 330.5 L665.8 336.8 L666.2 343.5 L665.4 350.3 L663.4 357.0 L660.4 363.1 L656.7 368.5 L652.9 373.2 L649.4 377.5 L646.3 381.9 L643.4 386.7 L640.4 392.1 L636.8 397.6 L632.4 402.5 L627.4 406.3 L621.9 408.5 L616.4 409.1 L611.1 408.4 L606.0 406.7"/><path d="M610.2 395.0 L606.7 392.9 L603.2 390.9 L599.7 388.7 L596.1 386.2 L592.9 382.9 L590.2 378.7 L588.5 373.7 L587.6 368.2 L587.6 362.4 L588.2 356.5 L589.2 350.7 L590.7 344.8 L592.9 339.1 L595.9 333.8 L599.7 329.4 L604.1 326.1 L608.9 324.2 L613.5 323.3 L617.8 323.0 L621.7 322.7 L625.4 321.9 L629.3 320.6 L633.4 319.2 L637.9 318.1 L642.4 318.1 L646.8 319.3 L650.6 321.7 L653.9 325.2 L656.5 329.5 L658.6 334.3 L660.3 339.4 L661.3 345.0 L661.5 350.9 L660.6 357.0 L658.7 362.8 L655.8 368.2 L652.3 372.9 L648.7 376.9 L645.2 380.6 L641.8 384.2 L638.5 388.0 L635.0 391.7 L631.0 395.0 L626.7 397.3 L622.3 398.4 L618.0 398.1 L613.9 396.8 L610.2 395.0" stroke-dasharray="14 10"/><path d="M612.6 388.4 L609.6 387.0 L606.5 385.5 L603.3 383.9 L600.0 382.1 L596.6 379.7 L593.7 376.4 L591.6 372.2 L590.8 367.2 L591.3 361.8 L592.9 356.6 L595.3 351.7 L598.1 347.4 L600.8 343.6 L603.5 340.1 L606.2 336.7 L609.1 333.7 L612.1 331.1 L615.3 329.0 L618.6 327.4 L621.9 326.1 L625.3 325.0 L628.8 323.9 L632.5 322.9 L636.4 322.3 L640.4 322.4 L644.1 323.7 L647.2 326.2 L649.5 329.8 L651.0 334.1 L651.8 338.7 L652.2 343.3 L652.5 347.8 L652.7 352.3 L652.8 356.9 L652.3 361.7 L651.2 366.5 L649.1 371.1 L646.4 375.1 L643.2 378.4 L639.8 381.1 L636.3 383.3 L633.0 385.3 L629.6 387.1 L626.2 388.7 L622.7 389.6 L619.2 389.9 L615.8 389.4 L612.6 388.4" stroke-dasharray="14 10"/><path d="M672.1 176.1 L673.3 172.2 L675.1 168.4 L677.8 164.8 L681.2 161.6 L685.2 158.7 L689.2 156.0 L693.1 153.1 L697.0 149.9 L701.4 146.4 L706.7 142.8 L713.2 139.7 L720.8 137.7 L728.8 137.2 L736.6 138.3 L743.6 140.6 L749.5 143.8 L754.4 147.4 L758.8 150.9 L762.8 154.3 L766.5 157.8 L769.5 161.5 L771.6 165.5 L772.3 169.7 L771.8 173.8 L770.4 177.8 L768.5 181.6 L766.5 185.3 L764.5 189.1 L762.1 192.9 L758.8 196.7 L754.4 200.0 L748.8 202.6 L742.5 204.4 L735.7 205.3 L729.0 205.8 L722.4 206.2 L715.6 206.7 L708.5 207.2 L700.9 207.4 L693.1 206.9 L685.7 205.2 L679.4 202.3 L674.8 198.4 L672.1 193.9 L670.9 189.1 L670.8 184.6 L671.3 180.2 L672.1 176.1"/><path d="M678.9 175.9 L678.6 172.5 L678.7 168.9 L679.7 165.3 L682.0 161.9 L685.7 159.0 L690.4 156.7 L695.6 155.0 L700.8 153.7 L705.7 152.4 L710.5 150.9 L715.5 149.2 L721.0 147.5 L727.1 146.2 L733.6 145.7 L740.1 146.1 L746.2 147.5 L751.7 149.7 L756.5 152.3 L760.8 155.3 L764.4 158.6 L767.1 162.2 L768.7 166.1 L768.7 170.0 L767.0 173.9 L764.1 177.4 L760.4 180.4 L756.8 183.0 L753.8 185.5 L751.4 188.2 L749.5 191.2 L747.3 194.5 L744.2 197.9 L740.0 200.9 L734.7 203.2 L728.7 204.5 L722.3 205.0 L716.0 204.7 L709.8 204.0 L703.7 203.0 L697.8 201.6 L692.3 199.7 L687.5 197.1 L683.8 193.9 L681.4 190.3 L680.1 186.6 L679.5 182.9 L679.2 179.4 L678.9 175.9" stroke-dasharray="14 10"/><path d="M682.5 175.9 L681.6 172.6 L681.9 169.3 L683.4 166.1 L685.8 163.1 L688.8 160.3 L692.2 157.8 L696.1 155.4 L700.5 153.4 L705.3 151.9 L710.6 151.1 L716.0 151.3 L721.1 152.3 L725.6 153.9 L729.5 155.6 L733.1 157.1 L736.6 158.2 L740.6 159.0 L745.1 159.8 L749.8 160.8 L754.3 162.5 L758.0 164.8 L760.7 167.6 L762.3 170.7 L762.9 174.0 L762.8 177.3 L762.1 180.7 L760.7 183.9 L758.4 187.1 L755.2 189.8 L750.9 192.1 L746.0 193.6 L740.8 194.5 L735.8 195.0 L731.1 195.3 L726.6 195.8 L722.1 196.4 L717.5 196.9 L712.6 197.2 L707.7 196.8 L703.2 195.6 L699.3 193.7 L696.2 191.4 L693.7 188.9 L691.5 186.5 L689.2 184.0 L686.8 181.5 L684.4 178.8 L682.5 175.9"/><path d="M689.3 175.7 L688.2 173.0 L688.0 170.2 L689.2 167.5 L691.5 165.0 L694.7 163.0 L698.4 161.4 L702.2 160.1 L706.1 159.1 L709.9 158.3 L713.7 157.8 L717.5 157.6 L721.2 157.9 L724.8 158.5 L728.0 159.3 L731.1 160.1 L734.3 160.8 L737.8 161.3 L741.8 161.9 L746.0 162.7 L750.1 164.1 L753.4 166.0 L755.6 168.5 L756.5 171.3 L756.1 174.1 L754.8 176.9 L753.0 179.4 L751.0 181.7 L748.9 183.9 L746.5 186.0 L743.7 187.9 L740.5 189.4 L736.9 190.4 L733.1 191.1 L729.3 191.5 L725.7 191.8 L722.0 192.1 L718.3 192.4 L714.5 192.6 L710.5 192.4 L706.7 191.7 L703.3 190.4 L700.5 188.6 L698.4 186.6 L696.6 184.5 L695.0 182.4 L693.1 180.3 L691.1 178.1 L689.3 175.7"/><path d="M891.9 390.0 L883.2 392.9 L874.5 395.6 L865.5 398.3 L856.0 400.6 L845.6 401.7 L834.5 400.7 L823.0 397.0 L811.7 390.5 L801.3 381.6 L792.0 371.1 L783.8 359.7 L776.5 347.9 L769.8 335.8 L763.8 323.3 L758.9 310.4 L755.5 297.1 L754.3 284.1 L755.2 271.7 L758.1 260.4 L762.4 250.4 L767.8 241.4 L773.9 233.3 L780.7 226.1 L788.4 220.1 L797.2 215.8 L807.0 213.7 L817.4 214.0 L828.0 216.3 L838.5 219.9 L848.7 224.2 L858.9 228.6 L869.4 233.3 L880.3 238.7 L891.5 245.5 L902.3 254.3 L912.1 265.3 L919.9 278.0 L925.5 291.7 L928.8 305.5 L930.1 319.1 L930.0 332.0 L928.5 344.2 L925.7 355.5 L921.5 365.6 L915.8 374.3 L908.6 381.1 L900.5 386.3 L891.9 390.0"/><path d="M888.9 385.0 L882.1 390.6 L873.9 394.0 L864.6 394.9 L855.0 393.8 L845.2 391.2 L835.6 387.5 L826.0 383.1 L816.5 377.6 L807.2 370.9 L798.6 362.8 L791.0 353.3 L784.7 342.9 L779.8 331.9 L776.1 320.9 L773.3 310.0 L771.2 299.1 L769.9 288.4 L769.8 277.8 L771.2 267.9 L774.3 259.0 L779.1 251.6 L785.2 245.8 L792.1 241.3 L799.1 237.6 L806.1 234.1 L813.2 230.5 L820.8 227.1 L829.3 224.5 L838.6 223.5 L848.7 224.8 L858.9 228.7 L868.8 234.8 L878.0 242.7 L886.4 251.9 L893.8 261.9 L900.3 272.5 L905.7 283.5 L909.6 294.8 L911.7 306.0 L912.1 316.8 L910.9 326.8 L908.7 335.9 L906.1 344.4 L903.4 352.6 L900.8 360.9 L897.9 369.4 L894.1 377.7 L888.9 385.0"/><path d="M877.7 366.6 L872.1 370.0 L866.3 373.5 L859.9 376.8 L852.8 379.4 L844.8 380.4 L836.2 379.3 L827.5 375.8 L819.2 370.1 L811.7 362.8 L805.2 354.5 L799.5 345.8 L794.6 336.9 L790.4 327.9 L787.0 318.8 L784.7 309.6 L783.5 300.7 L783.6 292.1 L784.8 284.1 L786.6 276.6 L788.8 269.5 L791.2 262.4 L794.1 255.5 L797.8 249.0 L802.6 243.3 L808.6 239.2 L815.6 236.9 L823.3 236.6 L831.3 237.9 L839.3 240.3 L847.2 243.2 L855.1 246.6 L863.0 250.6 L871.0 255.5 L878.7 261.6 L885.7 269.2 L891.5 277.8 L895.9 287.2 L898.9 296.9 L900.8 306.3 L901.7 315.5 L901.9 324.4 L901.2 332.8 L899.7 340.7 L896.9 347.8 L893.1 353.9 L888.4 358.9 L883.1 363.0 L877.7 366.6"/><path d="M875.3 362.6 L870.0 365.7 L864.1 367.8 L857.8 368.8 L851.2 368.6 L844.3 366.8 L837.5 363.5 L831.1 358.8 L825.5 353.1 L820.5 346.9 L816.0 340.8 L811.8 334.9 L807.6 329.0 L803.4 322.9 L799.4 316.3 L796.1 309.3 L793.9 302.0 L792.9 294.6 L793.1 287.6 L794.3 281.0 L796.2 274.8 L798.6 269.1 L801.5 263.6 L805.1 258.7 L809.4 254.5 L814.5 251.5 L820.4 249.8 L826.7 249.5 L833.2 250.4 L839.8 252.1 L846.3 254.5 L852.7 257.5 L859.1 261.2 L865.3 265.8 L870.9 271.5 L875.6 278.1 L879.2 285.3 L881.7 292.7 L883.3 299.9 L884.4 306.8 L885.4 313.5 L886.5 320.2 L887.5 327.0 L888.1 334.1 L887.8 341.2 L886.3 347.8 L883.7 353.7 L879.9 358.7 L875.3 362.6"/><path d="M865.5 346.7 L861.6 348.5 L857.5 350.0 L853.3 351.3 L848.7 352.1 L843.7 352.3 L838.5 351.3 L833.2 349.0 L828.2 345.5 L823.8 340.9 L820.0 335.7 L816.9 330.3 L814.3 324.8 L812.1 319.5 L810.2 314.2 L808.7 309.0 L807.7 303.7 L807.4 298.6 L807.6 293.6 L808.2 288.9 L809.2 284.3 L810.5 279.7 L812.0 275.1 L814.0 270.6 L816.7 266.6 L820.3 263.4 L824.7 261.5 L829.7 261.0 L835.0 262.1 L840.2 264.2 L845.3 267.1 L850.0 270.4 L854.5 273.8 L858.8 277.5 L863.0 281.5 L866.8 286.0 L870.1 290.9 L872.7 296.2 L874.6 301.6 L876.0 307.0 L876.9 312.4 L877.5 317.7 L877.8 323.0 L877.6 328.2 L876.7 333.2 L875.0 337.7 L872.5 341.5 L869.2 344.4 L865.5 346.7" stroke-dasharray="14 10"/><path d="M1035.9 345.7 L1034.8 348.7 L1033.2 351.5 L1031.1 354.4 L1028.4 357.1 L1024.7 359.8 L1019.7 362.0 L1013.0 363.6 L1005.0 364.3 L995.9 364.1 L986.5 363.0 L977.1 361.5 L968.0 359.6 L959.2 357.6 L950.6 355.4 L942.0 353.0 L933.8 350.3 L926.3 347.1 L919.9 343.6 L915.1 339.9 L911.8 336.2 L909.7 332.6 L908.5 329.2 L907.9 325.9 L907.9 322.6 L908.7 319.5 L910.5 316.7 L913.7 314.1 L918.1 312.0 L923.5 310.3 L929.5 309.0 L936.0 307.8 L942.8 306.7 L950.2 305.8 L958.6 305.3 L967.8 305.4 L977.6 306.4 L987.5 308.3 L996.7 311.2 L1004.9 314.6 L1011.7 318.2 L1017.3 321.9 L1022.2 325.5 L1026.4 329.0 L1030.1 332.5 L1033.1 335.9 L1035.2 339.3 L1036.1 342.6 L1035.9 345.7"/><path d="M1029.5 344.6 L1026.8 346.8 L1024.1 348.9 L1021.1 350.9 L1017.7 352.8 L1013.7 354.4 L1008.8 355.6 L1003.3 356.5 L997.1 357.0 L990.6 357.3 L983.7 357.3 L976.4 357.1 L968.6 356.5 L960.4 355.5 L952.3 353.8 L944.6 351.5 L937.7 348.7 L932.0 345.5 L927.5 342.3 L923.7 339.1 L920.4 336.0 L917.5 332.8 L914.9 329.7 L913.2 326.6 L912.7 323.5 L913.8 320.7 L916.6 318.4 L920.6 316.5 L925.4 315.0 L930.7 313.9 L936.2 312.9 L941.9 312.1 L948.0 311.5 L954.5 311.3 L961.6 311.5 L968.9 312.1 L976.4 313.3 L983.8 314.7 L991.3 316.4 L998.8 318.3 L1006.4 320.4 L1014.0 322.9 L1021.0 325.8 L1026.9 329.0 L1031.0 332.5 L1033.1 335.9 L1033.2 339.2 L1031.8 342.0 L1029.5 344.6"/><path d="M1020.8 343.0 L1019.3 345.1 L1017.1 347.0 L1014.1 348.5 L1010.4 349.8 L1006.2 350.7 L1001.8 351.5 L997.3 352.2 L992.7 352.9 L987.7 353.6 L982.1 354.1 L975.9 354.1 L969.1 353.7 L962.2 352.5 L955.5 350.7 L949.4 348.5 L944.0 346.1 L939.3 343.5 L935.1 340.9 L931.3 338.3 L928.0 335.7 L925.4 333.0 L923.8 330.4 L923.3 327.9 L924.0 325.6 L925.6 323.5 L927.9 321.6 L930.5 319.9 L933.4 318.3 L936.8 316.9 L940.9 315.7 L945.7 314.9 L951.3 314.6 L957.3 314.7 L963.4 315.3 L969.6 316.1 L975.7 317.1 L981.9 318.1 L988.4 319.2 L995.1 320.6 L1001.7 322.3 L1008.0 324.5 L1013.3 327.1 L1017.3 329.9 L1020.0 332.8 L1021.4 335.6 L1021.9 338.3 L1021.6 340.7 L1020.8 343.0"/><path d="M1010.8 341.2 L1011.0 343.2 L1010.2 345.0 L1008.6 346.7 L1006.4 348.1 L1003.6 349.4 L1000.2 350.5 L996.2 351.4 L991.5 351.8 L986.3 351.8 L980.8 351.3 L975.2 350.3 L969.9 349.0 L965.0 347.5 L960.4 346.0 L955.9 344.5 L951.5 343.0 L947.1 341.4 L943.1 339.5 L939.8 337.5 L937.3 335.4 L935.7 333.3 L935.1 331.3 L935.0 329.4 L935.2 327.6 L935.7 325.8 L936.4 324.0 L937.7 322.3 L939.6 320.8 L942.4 319.5 L945.9 318.6 L950.0 318.0 L954.6 317.6 L959.4 317.5 L964.5 317.6 L969.9 318.0 L975.4 318.6 L981.0 319.7 L986.3 321.2 L990.9 323.1 L994.8 325.2 L997.8 327.3 L1000.1 329.4 L1002.1 331.4 L1004.1 333.3 L1006.2 335.2 L1008.2 337.2 L1009.8 339.2 L1010.8 341.2"/><path d="M1001.5 339.5 L1001.9 341.1 L1001.6 342.6 L1000.5 343.9 L998.7 345.0 L996.4 346.0 L993.7 346.7 L990.5 347.3 L987.0 347.6 L983.0 347.6 L978.9 347.3 L974.6 346.6 L970.6 345.5 L966.8 344.3 L963.5 343.0 L960.4 341.8 L957.4 340.6 L954.4 339.3 L951.4 338.1 L948.6 336.7 L946.1 335.1 L944.3 333.6 L943.2 332.0 L942.8 330.4 L942.9 329.0 L943.4 327.6 L944.3 326.3 L945.4 325.0 L947.0 323.8 L949.2 322.9 L951.9 322.2 L955.3 321.8 L958.9 321.6 L962.8 321.8 L966.7 322.0 L970.6 322.5 L974.6 323.0 L978.7 323.7 L982.6 324.7 L986.3 325.9 L989.5 327.3 L992.1 328.9 L994.0 330.5 L995.5 332.1 L996.8 333.5 L998.0 335.0 L999.3 336.5 L1000.6 338.0 L1001.5 339.5"/><path d="M994.2 338.2 L993.7 339.2 L992.6 340.0 L991.0 340.6 L989.2 341.1 L987.2 341.5 L985.2 341.7 L983.2 342.0 L981.0 342.1 L978.8 342.2 L976.3 342.1 L973.8 341.8 L971.3 341.4 L968.8 341.0 L966.2 340.5 L963.5 339.9 L960.8 339.2 L958.1 338.3 L955.6 337.3 L953.6 336.2 L952.2 335.0 L951.5 333.7 L951.5 332.6 L951.9 331.6 L952.6 330.7 L953.3 329.9 L954.2 329.1 L955.2 328.4 L956.4 327.7 L958.0 327.2 L959.8 326.8 L961.8 326.5 L964.1 326.4 L966.4 326.4 L968.8 326.4 L971.3 326.5 L974.0 326.7 L976.7 327.1 L979.5 327.7 L982.1 328.5 L984.4 329.5 L986.4 330.5 L988.1 331.6 L989.6 332.6 L991.0 333.7 L992.4 334.8 L993.5 336.0 L994.1 337.1 L994.2 338.2" stroke-dasharray="14 10"/><path d="M974.4 334.5 L973.1 328.6 L972.4 322.4 L972.5 316.1 L974.2 309.5 L977.9 303.0 L983.4 297.0 L990.1 291.7 L997.4 287.2 L1004.6 283.1 L1011.6 279.2 L1018.7 275.3 L1026.1 271.6 L1034.1 268.8 L1042.3 267.3 L1050.3 267.5 L1057.4 269.2 L1063.5 271.9 L1068.9 274.7 L1074.3 277.0 L1080.5 278.6 L1087.7 280.0 L1095.7 281.8 L1103.3 284.7 L1109.4 289.1 L1113.0 294.8 L1113.9 301.5 L1112.4 308.6 L1109.0 315.6 L1104.4 322.3 L1099.1 328.6 L1092.8 334.5 L1085.5 339.6 L1077.3 343.6 L1068.6 346.2 L1059.8 347.4 L1051.7 347.7 L1044.5 347.7 L1037.9 348.2 L1031.3 349.8 L1023.8 352.1 L1015.3 354.7 L1006.1 356.5 L997.1 356.7 L989.1 354.8 L983.0 351.1 L978.8 346.1 L976.1 340.4 L974.4 334.5"/><path d="M989.6 329.4 L987.0 325.2 L984.6 320.6 L982.9 315.5 L982.6 309.9 L984.4 304.0 L988.3 298.4 L994.0 293.4 L1000.7 289.2 L1007.7 285.7 L1014.5 282.6 L1021.0 279.3 L1027.6 276.0 L1034.6 272.8 L1042.2 270.3 L1049.9 269.3 L1057.1 269.9 L1063.3 272.2 L1068.1 275.6 L1071.9 279.4 L1075.1 283.1 L1078.2 286.4 L1081.6 289.5 L1085.0 292.7 L1088.1 296.2 L1090.3 300.3 L1091.3 304.9 L1091.4 309.7 L1090.9 314.8 L1090.1 320.1 L1088.8 325.9 L1086.8 332.0 L1083.4 338.4 L1078.2 344.3 L1071.0 349.1 L1062.5 352.2 L1053.6 353.2 L1045.2 352.5 L1037.8 350.7 L1031.5 348.7 L1025.9 347.1 L1020.4 345.9 L1014.9 345.1 L1009.2 344.1 L1003.9 342.5 L999.2 340.1 L995.5 336.9 L992.4 333.3 L989.6 329.4" stroke-dasharray="14 10"/><path d="M999.2 326.2 L998.6 322.4 L998.5 318.6 L998.5 314.7 L998.6 310.6 L998.9 306.2 L1000.1 301.6 L1002.5 296.9 L1006.4 292.6 L1011.6 288.9 L1017.5 286.1 L1023.7 284.0 L1029.7 282.3 L1035.7 280.6 L1041.7 278.7 L1048.1 276.9 L1054.8 275.6 L1061.4 275.4 L1067.3 276.6 L1072.0 279.4 L1075.0 283.2 L1076.7 287.5 L1077.4 291.8 L1077.9 295.8 L1078.5 299.5 L1079.2 303.0 L1079.7 306.6 L1079.6 310.3 L1078.8 314.2 L1077.2 318.1 L1075.1 322.1 L1072.8 326.2 L1070.3 330.6 L1067.4 335.4 L1063.6 340.4 L1058.5 345.2 L1052.2 349.1 L1045.0 351.4 L1037.7 351.9 L1031.0 350.7 L1025.4 348.2 L1020.8 345.2 L1016.9 342.4 L1013.3 339.9 L1009.7 337.7 L1006.1 335.4 L1002.9 332.8 L1000.6 329.7 L999.2 326.2"/><path d="M998.0 326.6 L998.2 322.5 L999.7 318.4 L1002.1 314.5 L1004.8 310.9 L1007.6 307.5 L1010.6 304.5 L1013.8 301.6 L1017.4 299.1 L1021.3 297.0 L1025.4 295.4 L1029.4 294.1 L1033.2 292.6 L1037.0 290.8 L1041.2 288.6 L1046.0 286.0 L1051.5 283.7 L1057.5 282.2 L1063.2 282.0 L1068.2 283.3 L1071.9 285.8 L1074.2 289.2 L1075.5 292.9 L1076.1 296.6 L1076.5 300.1 L1076.7 303.6 L1076.6 307.0 L1075.8 310.6 L1074.1 314.0 L1071.5 317.3 L1068.5 320.3 L1065.2 323.0 L1062.1 325.7 L1059.0 328.4 L1055.8 331.2 L1052.2 334.1 L1048.0 336.6 L1043.3 338.4 L1038.4 339.3 L1033.7 339.3 L1029.3 338.6 L1025.2 337.8 L1021.0 337.0 L1016.6 336.5 L1011.9 335.8 L1007.0 334.8 L1002.7 332.9 L999.5 330.2 L998.0 326.6"/><path d="M1151.9 378.2 L1148.4 386.1 L1143.1 390.9 L1136.4 391.8 L1128.8 389.2 L1120.9 384.3 L1112.9 378.2 L1104.7 371.3 L1096.4 363.3 L1088.0 353.6 L1080.3 341.9 L1073.9 328.3 L1069.5 314.0 L1066.9 299.9 L1065.7 286.9 L1065.0 274.9 L1064.1 263.4 L1062.7 251.5 L1061.5 239.4 L1061.5 227.8 L1063.6 218.2 L1068.1 212.1 L1074.7 210.2 L1082.3 211.8 L1089.7 215.0 L1096.2 217.8 L1101.8 218.5 L1107.0 217.0 L1112.7 214.5 L1119.3 212.7 L1127.1 213.5 L1135.5 217.7 L1144.0 225.3 L1152.3 235.4 L1160.1 247.2 L1167.4 260.1 L1174.3 274.0 L1180.3 288.8 L1184.5 304.0 L1186.1 318.4 L1184.6 330.8 L1180.1 339.8 L1173.7 345.3 L1166.9 348.3 L1161.3 350.5 L1157.5 354.2 L1155.3 360.4 L1153.9 368.9 L1151.9 378.2"/><path d="M1151.4 377.1 L1146.8 381.0 L1141.1 382.5 L1134.8 382.3 L1128.0 381.0 L1120.8 378.9 L1113.1 375.3 L1105.1 369.5 L1097.2 360.8 L1090.5 349.1 L1085.7 335.5 L1083.2 321.6 L1082.9 308.8 L1083.8 298.3 L1084.6 289.6 L1084.3 281.9 L1082.7 273.8 L1080.1 264.6 L1077.4 254.4 L1075.6 243.9 L1075.3 234.1 L1076.7 225.7 L1079.3 218.8 L1082.8 213.0 L1086.9 207.7 L1091.7 203.1 L1097.3 199.9 L1104.0 199.3 L1111.5 202.4 L1119.3 209.2 L1126.6 219.0 L1132.9 230.4 L1138.4 241.7 L1143.3 252.0 L1148.2 261.3 L1153.5 270.3 L1159.0 279.8 L1164.0 290.4 L1167.6 301.5 L1169.0 312.3 L1168.2 321.7 L1166.0 329.2 L1163.1 335.4 L1160.6 341.1 L1159.0 347.4 L1157.9 354.9 L1156.8 363.1 L1154.8 370.9 L1151.4 377.1"/><path d="M1145.3 361.0 L1141.4 363.6 L1137.1 365.8 L1132.1 366.2 L1126.4 363.9 L1120.6 358.5 L1115.2 350.7 L1110.6 341.8 L1106.8 333.2 L1103.3 325.6 L1099.6 318.9 L1095.5 312.6 L1090.9 305.8 L1086.3 298.0 L1082.3 289.3 L1079.1 280.0 L1076.9 270.5 L1075.4 261.1 L1074.3 251.5 L1073.6 241.6 L1073.6 231.8 L1074.9 222.9 L1078.0 216.3 L1083.0 213.4 L1089.6 214.7 L1096.9 220.0 L1104.0 227.7 L1110.2 235.9 L1115.3 242.9 L1119.6 247.8 L1123.8 250.8 L1128.4 253.2 L1133.4 256.1 L1138.6 260.5 L1143.7 266.6 L1148.4 274.0 L1152.5 282.3 L1156.3 291.1 L1160.0 300.4 L1163.6 310.3 L1166.7 320.8 L1168.6 331.2 L1168.7 340.7 L1166.9 348.2 L1163.3 353.3 L1158.7 356.1 L1153.8 357.6 L1149.4 359.0 L1145.3 361.0" stroke-dasharray="14 10"/><path d="M1159.8 458.8 L1153.5 458.7 L1147.3 457.2 L1141.3 453.7 L1136.1 447.5 L1132.1 438.1 L1129.8 425.6 L1129.4 410.6 L1130.7 394.3 L1133.3 377.9 L1136.5 362.0 L1140.0 347.0 L1143.5 332.7 L1147.1 318.6 L1151.1 304.6 L1155.6 290.9 L1160.8 277.9 L1166.6 266.1 L1172.8 255.6 L1179.3 246.3 L1185.9 238.0 L1192.8 230.6 L1199.8 224.5 L1206.9 220.2 L1213.7 218.8 L1219.9 220.7 L1225.2 226.0 L1229.3 234.1 L1232.4 244.2 L1234.8 255.3 L1236.8 266.9 L1238.4 279.0 L1239.5 291.9 L1239.8 305.9 L1238.8 321.1 L1236.5 336.9 L1232.7 352.7 L1227.8 367.6 L1222.3 381.3 L1216.6 393.8 L1210.7 405.3 L1204.9 416.3 L1198.9 426.7 L1192.6 436.3 L1186.1 444.5 L1179.4 450.8 L1172.8 455.2 L1166.2 457.7 L1159.8 458.8"/><path d="M1163.1 444.0 L1157.3 445.1 L1151.9 443.5 L1147.2 438.9 L1143.7 431.6 L1141.1 422.1 L1139.6 411.1 L1138.8 399.3 L1138.8 386.7 L1139.6 373.6 L1141.4 360.1 L1144.2 346.6 L1147.8 333.6 L1152.1 321.6 L1156.6 310.6 L1161.2 300.3 L1165.6 290.3 L1170.1 280.0 L1174.9 269.4 L1180.2 259.0 L1185.9 249.6 L1192.1 242.2 L1198.3 237.6 L1204.2 235.9 L1209.6 236.9 L1214.6 239.9 L1219.0 244.3 L1223.0 249.9 L1226.5 256.7 L1229.4 265.0 L1231.4 274.9 L1232.2 286.4 L1232.0 298.9 L1230.9 311.9 L1229.0 325.0 L1226.8 337.9 L1224.2 350.8 L1221.3 363.7 L1217.7 376.4 L1213.5 388.7 L1208.6 399.8 L1203.1 409.3 L1197.4 416.9 L1191.7 422.8 L1186.1 427.8 L1180.5 432.3 L1174.9 436.8 L1169.1 440.9 L1163.1 444.0"/><path d="M1166.4 429.7 L1162.9 425.1 L1159.9 419.6 L1157.4 413.6 L1155.1 407.4 L1153.2 400.6 L1151.8 393.0 L1150.9 384.7 L1150.6 375.6 L1150.9 366.0 L1151.5 356.0 L1152.5 345.7 L1153.7 335.0 L1155.4 323.6 L1157.8 311.9 L1161.1 300.2 L1165.3 289.4 L1170.2 280.1 L1175.4 272.8 L1180.8 267.5 L1185.9 264.0 L1190.9 261.5 L1195.7 259.7 L1200.3 258.6 L1204.8 258.3 L1209.1 259.5 L1212.9 262.5 L1216.0 267.4 L1218.3 274.0 L1220.0 281.7 L1221.2 290.0 L1222.0 298.8 L1222.4 307.9 L1222.5 317.6 L1221.9 327.8 L1220.6 338.6 L1218.5 349.5 L1215.7 360.2 L1212.3 370.6 L1208.7 380.5 L1204.8 390.2 L1200.7 399.9 L1196.2 409.4 L1191.3 418.3 L1186.1 425.8 L1180.6 430.9 L1175.3 433.2 L1170.5 432.7 L1166.4 429.7"/><path d="M1169.6 415.3 L1166.2 413.2 L1163.2 409.9 L1160.6 405.5 L1158.5 400.2 L1157.0 393.8 L1156.1 386.5 L1156.0 378.4 L1156.6 369.9 L1157.8 361.3 L1159.2 352.9 L1160.7 344.9 L1162.2 336.9 L1163.6 328.6 L1165.3 320.0 L1167.5 311.0 L1170.3 302.2 L1173.7 294.1 L1177.6 287.2 L1181.8 281.8 L1186.0 277.8 L1190.1 275.0 L1194.1 273.0 L1198.0 272.0 L1201.8 271.9 L1205.3 273.2 L1208.3 276.0 L1210.8 280.3 L1212.7 286.0 L1214.0 292.5 L1214.8 299.4 L1215.4 306.6 L1215.8 314.2 L1215.8 322.1 L1215.3 330.5 L1214.1 339.3 L1212.2 348.1 L1209.7 356.6 L1206.7 364.5 L1203.5 371.8 L1200.3 378.7 L1197.0 385.5 L1193.6 392.4 L1190.0 399.2 L1186.0 405.5 L1181.8 410.7 L1177.6 414.2 L1173.4 415.7 L1169.6 415.3"/><path d="M1346.0 187.3 L1342.4 191.5 L1337.1 194.9 L1330.9 197.6 L1324.6 199.9 L1318.5 202.1 L1312.4 204.1 L1306.2 206.0 L1299.3 207.5 L1291.8 208.5 L1283.8 208.9 L1275.3 208.7 L1266.7 208.2 L1257.6 207.4 L1248.1 206.3 L1238.1 204.6 L1228.0 202.2 L1218.5 198.7 L1210.7 194.3 L1205.3 189.1 L1202.6 183.7 L1202.3 178.5 L1203.5 173.6 L1205.5 169.3 L1207.4 165.2 L1209.2 161.3 L1211.3 157.5 L1214.0 153.8 L1217.9 150.5 L1223.1 147.7 L1229.4 145.6 L1236.3 143.9 L1243.6 142.5 L1251.2 141.3 L1259.4 140.4 L1268.2 139.9 L1277.5 140.2 L1287.1 141.5 L1296.3 143.9 L1304.7 147.2 L1312.2 151.1 L1318.7 155.1 L1324.9 159.3 L1330.9 163.4 L1336.8 167.8 L1342.0 172.6 L1345.7 177.6 L1347.2 182.6 L1346.0 187.3"/><path d="M1334.6 185.5 L1334.6 189.7 L1333.6 193.9 L1331.1 197.7 L1326.8 201.0 L1320.6 203.3 L1312.9 204.4 L1304.5 204.5 L1296.1 203.8 L1288.4 202.9 L1281.3 201.9 L1274.6 201.3 L1267.8 200.9 L1260.8 200.4 L1253.4 199.5 L1245.9 197.9 L1238.6 195.7 L1231.8 192.9 L1225.7 189.7 L1220.0 186.1 L1214.8 182.3 L1210.2 178.1 L1206.9 173.7 L1205.3 169.3 L1205.9 165.0 L1208.6 161.2 L1213.0 158.0 L1218.5 155.5 L1224.3 153.4 L1229.8 151.6 L1235.2 149.7 L1240.7 147.8 L1246.7 146.1 L1253.5 145.1 L1261.0 144.8 L1268.8 145.6 L1276.4 147.1 L1283.6 149.2 L1290.4 151.5 L1297.0 153.9 L1303.6 156.3 L1310.2 158.9 L1316.6 161.8 L1322.3 165.2 L1327.0 169.0 L1330.4 173.0 L1332.7 177.2 L1334.0 181.4 L1334.6 185.5" stroke-dasharray="14 10"/><path d="M1325.2 184.0 L1324.6 187.5 L1322.7 190.6 L1319.4 193.3 L1314.9 195.4 L1309.5 196.9 L1303.7 198.0 L1298.0 198.7 L1292.3 199.4 L1286.7 200.0 L1280.8 200.5 L1274.5 200.6 L1268.0 200.0 L1261.5 198.7 L1255.5 196.7 L1250.3 194.1 L1245.7 191.4 L1241.4 188.8 L1237.2 186.2 L1232.7 183.5 L1228.2 180.7 L1224.0 177.5 L1220.6 174.1 L1218.5 170.5 L1218.0 166.9 L1218.8 163.5 L1220.8 160.3 L1223.6 157.4 L1227.1 154.8 L1231.5 152.5 L1236.7 150.7 L1242.9 149.7 L1249.7 149.6 L1256.7 150.4 L1263.4 151.7 L1269.6 153.3 L1275.2 154.8 L1280.6 156.0 L1286.2 156.9 L1292.3 157.9 L1298.7 159.2 L1305.1 161.0 L1311.0 163.5 L1315.9 166.5 L1319.6 169.9 L1322.2 173.4 L1323.9 177.0 L1324.9 180.5 L1325.2 184.0"/><path d="M1310.0 181.6 L1308.2 183.7 L1306.3 185.7 L1304.5 187.8 L1302.8 189.9 L1300.9 192.1 L1298.4 194.2 L1294.9 196.0 L1290.5 197.3 L1285.4 198.0 L1279.9 198.1 L1274.2 197.7 L1268.5 196.9 L1262.8 195.8 L1257.3 194.3 L1252.2 192.5 L1247.8 190.1 L1244.4 187.5 L1242.1 184.7 L1240.8 181.9 L1240.0 179.3 L1239.4 176.9 L1238.5 174.6 L1237.1 172.2 L1235.5 169.7 L1234.2 167.0 L1233.8 164.2 L1234.7 161.6 L1236.9 159.3 L1240.1 157.4 L1244.2 156.0 L1248.7 154.9 L1253.5 154.1 L1258.6 153.5 L1264.0 153.4 L1269.6 153.7 L1275.2 154.6 L1280.6 156.1 L1285.5 158.0 L1289.8 160.1 L1293.8 162.2 L1297.6 164.3 L1301.3 166.5 L1304.9 168.8 L1308.0 171.2 L1310.3 173.9 L1311.4 176.6 L1311.2 179.2 L1310.0 181.6" stroke-dasharray="14 10"/><path d="M1334.6 396.3 L1324.4 390.7 L1319.1 378.6 L1319.3 361.4 L1324.0 341.6 L1331.2 321.9 L1338.9 303.8 L1345.8 287.7 L1351.5 273.1 L1356.9 258.9 L1362.8 244.6 L1370.0 230.2 L1378.4 216.1 L1387.6 202.2 L1397.2 188.0 L1407.4 172.5 L1418.8 155.1 L1432.2 136.1 L1447.7 117.4 L1464.7 101.8 L1481.5 92.3 L1496.1 90.6 L1507.0 96.7 L1513.7 108.4 L1517.2 122.8 L1519.2 137.1 L1521.1 149.8 L1523.6 160.9 L1526.4 171.6 L1528.1 183.4 L1527.6 197.0 L1524.3 212.1 L1518.6 227.9 L1511.4 243.5 L1504.0 258.8 L1496.6 274.1 L1489.1 290.1 L1480.6 306.9 L1470.3 323.9 L1458.1 339.6 L1444.5 352.6 L1430.5 362.0 L1417.1 368.3 L1404.2 373.1 L1391.4 378.2 L1377.9 384.3 L1363.3 390.8 L1348.3 395.7 L1334.6 396.3"/><path d="M1361.1 356.7 L1354.5 351.5 L1351.3 342.2 L1350.9 330.4 L1352.3 317.9 L1353.6 306.1 L1353.9 295.3 L1352.8 284.7 L1351.4 273.1 L1351.2 259.4 L1353.8 243.7 L1359.9 226.7 L1369.1 209.9 L1380.7 194.5 L1393.3 180.8 L1406.3 169.0 L1419.3 158.6 L1432.1 149.9 L1444.5 143.7 L1456.0 141.1 L1465.6 142.8 L1472.8 148.6 L1477.4 157.1 L1480.6 165.9 L1483.8 172.8 L1488.7 176.8 L1496.1 178.1 L1505.5 178.6 L1515.4 180.8 L1523.6 186.6 L1528.2 196.7 L1528.4 210.4 L1524.5 226.3 L1517.7 242.9 L1509.3 259.3 L1500.1 275.3 L1490.3 290.8 L1479.6 305.8 L1467.9 319.4 L1455.4 330.7 L1442.7 338.8 L1430.7 343.5 L1419.8 345.7 L1410.0 347.1 L1400.6 349.1 L1390.8 352.1 L1380.5 355.6 L1370.2 357.7 L1361.1 356.7" stroke-dasharray="14 10"/><path d="M1384.9 321.0 L1378.1 320.8 L1369.4 321.6 L1359.9 321.6 L1351.1 318.9 L1345.0 312.2 L1342.8 301.6 L1345.1 288.0 L1350.9 273.2 L1359.0 258.7 L1367.9 245.1 L1376.6 232.5 L1385.2 220.6 L1393.8 209.2 L1402.9 198.6 L1412.5 189.5 L1422.4 182.5 L1431.9 177.9 L1440.7 175.1 L1448.9 172.9 L1456.9 170.4 L1465.3 167.3 L1474.0 164.1 L1482.6 162.4 L1490.2 163.3 L1495.7 167.7 L1498.7 175.2 L1499.6 184.5 L1499.4 194.3 L1499.5 203.5 L1500.6 212.3 L1502.4 221.4 L1503.9 231.8 L1503.7 244.3 L1500.6 258.4 L1494.1 273.2 L1484.7 287.1 L1473.6 299.1 L1462.1 308.6 L1450.9 316.1 L1440.5 322.2 L1430.8 327.1 L1421.6 330.8 L1413.2 332.7 L1405.9 332.3 L1399.8 329.8 L1394.8 326.2 L1390.2 322.9 L1384.9 321.0" stroke-dasharray="14 10"/><path d="M1372.9 339.0 L1370.3 330.9 L1369.7 321.3 L1370.2 311.5 L1371.2 302.0 L1372.4 292.9 L1374.2 283.8 L1377.0 274.5 L1381.0 265.1 L1386.0 256.0 L1391.3 247.4 L1396.5 239.4 L1401.2 231.3 L1405.7 222.6 L1410.6 212.9 L1416.5 202.5 L1423.7 192.5 L1431.8 184.1 L1440.3 178.6 L1448.2 175.9 L1455.3 175.6 L1461.6 176.4 L1467.7 177.0 L1474.2 177.0 L1481.1 176.9 L1488.0 177.8 L1493.7 180.7 L1497.5 186.6 L1498.5 195.0 L1497.0 205.3 L1493.5 216.3 L1489.1 227.0 L1484.5 237.1 L1479.9 246.6 L1475.1 255.9 L1469.8 264.8 L1463.7 273.1 L1457.0 280.3 L1450.2 286.5 L1443.6 291.9 L1437.3 297.5 L1431.0 304.3 L1423.8 312.8 L1415.4 322.7 L1405.8 332.5 L1395.5 340.4 L1385.9 344.4 L1378.1 343.9 L1372.9 339.0"/><path d="M1354.3 217.9 L1353.1 205.1 L1357.8 192.0 L1367.7 179.7 L1381.3 168.8 L1396.6 159.3 L1411.9 151.0 L1426.6 143.1 L1440.9 135.4 L1455.6 127.9 L1471.7 121.0 L1489.2 115.7 L1507.7 112.5 L1526.5 111.5 L1544.6 112.5 L1562.0 114.8 L1578.7 117.9 L1595.2 121.4 L1611.4 125.7 L1626.9 131.1 L1640.7 138.2 L1651.8 147.1 L1659.5 157.3 L1664.2 168.3 L1666.5 179.8 L1667.3 191.5 L1667.0 203.4 L1665.3 215.7 L1661.1 228.4 L1653.0 240.7 L1640.4 251.9 L1623.7 261.0 L1604.2 267.5 L1583.7 271.3 L1563.7 273.2 L1545.0 274.1 L1527.6 274.9 L1510.7 275.9 L1493.6 277.0 L1476.2 277.4 L1458.7 276.5 L1441.7 273.9 L1425.6 269.6 L1410.5 264.0 L1396.3 257.2 L1382.9 249.4 L1370.6 240.3 L1360.5 229.9 L1354.3 217.9"/><path d="M1398.3 212.6 L1398.5 203.1 L1400.0 193.6 L1403.3 184.0 L1409.1 174.7 L1417.5 166.0 L1428.1 158.1 L1439.9 151.1 L1452.2 144.6 L1464.8 138.1 L1477.9 131.3 L1492.2 124.4 L1508.4 118.0 L1526.3 113.3 L1545.1 111.2 L1563.3 112.3 L1579.8 116.5 L1593.6 123.0 L1604.6 130.9 L1613.5 139.4 L1620.6 148.0 L1626.6 156.7 L1631.1 165.4 L1633.7 174.5 L1634.2 183.7 L1632.5 193.0 L1629.2 202.0 L1625.1 210.9 L1620.8 219.8 L1616.3 229.1 L1610.9 238.9 L1603.4 248.9 L1593.1 258.5 L1579.5 266.6 L1563.3 272.6 L1545.7 276.0 L1527.8 277.2 L1510.6 276.7 L1494.2 275.3 L1478.2 273.5 L1462.6 271.3 L1447.3 268.3 L1433.0 263.9 L1420.6 257.8 L1411.0 250.1 L1404.5 241.2 L1400.7 231.7 L1398.9 222.1 L1398.3 212.6"/><path d="M1418.0 210.2 L1417.3 202.3 L1417.4 194.2 L1418.5 185.8 L1421.2 177.3 L1426.3 168.7 L1434.0 160.7 L1444.3 153.8 L1456.6 148.1 L1469.8 143.7 L1483.2 140.2 L1496.7 137.1 L1510.4 134.2 L1524.5 131.8 L1539.1 130.3 L1553.8 130.5 L1567.5 132.7 L1579.3 137.2 L1588.6 143.3 L1595.4 150.5 L1600.4 157.9 L1604.3 165.1 L1607.9 172.1 L1611.3 179.0 L1614.2 186.2 L1615.8 193.7 L1615.6 201.5 L1613.5 209.5 L1609.7 217.4 L1604.6 225.4 L1598.5 233.4 L1591.2 241.6 L1582.2 249.7 L1571.1 257.2 L1557.7 263.2 L1542.5 267.0 L1526.8 268.3 L1511.5 267.0 L1497.7 263.8 L1485.6 259.6 L1474.8 255.2 L1464.7 251.0 L1454.8 247.0 L1445.2 242.7 L1436.2 237.8 L1428.8 231.9 L1423.3 225.2 L1419.8 217.8 L1418.0 210.2" stroke-dasharray="14 10"/><path d="M1428.8 208.8 L1429.2 201.8 L1431.8 194.7 L1436.6 188.0 L1442.8 181.9 L1449.8 176.2 L1457.1 170.9 L1464.5 165.8 L1472.2 160.8 L1480.8 156.1 L1490.4 152.1 L1501.0 149.3 L1512.1 148.1 L1522.9 148.3 L1533.2 149.5 L1542.9 151.1 L1552.3 152.8 L1562.0 154.4 L1572.1 156.1 L1582.4 158.5 L1592.0 161.9 L1600.2 166.7 L1606.1 172.6 L1609.4 179.4 L1610.4 186.6 L1609.5 194.0 L1607.2 201.2 L1603.4 208.2 L1598.2 215.0 L1591.4 221.2 L1582.8 226.5 L1572.9 230.7 L1562.4 233.7 L1552.0 235.9 L1542.2 237.7 L1532.9 239.6 L1523.6 242.0 L1513.7 244.8 L1502.8 247.3 L1491.2 249.0 L1479.4 249.1 L1468.2 247.5 L1458.4 244.2 L1450.2 239.6 L1443.6 234.2 L1438.2 228.4 L1433.8 222.2 L1430.5 215.7 L1428.8 208.8"/><path d="M1456.5 205.4 L1454.0 200.7 L1452.8 195.5 L1453.5 190.1 L1456.5 184.8 L1461.5 179.9 L1467.8 175.6 L1474.7 171.9 L1481.9 168.6 L1489.1 165.4 L1496.6 162.3 L1504.6 159.5 L1513.2 157.4 L1522.2 156.3 L1531.0 156.4 L1539.3 157.8 L1546.7 160.1 L1553.3 163.0 L1559.0 166.2 L1564.3 169.6 L1569.0 173.2 L1572.9 177.1 L1575.7 181.4 L1577.2 185.9 L1577.5 190.7 L1576.8 195.4 L1575.8 200.0 L1574.7 204.8 L1573.7 209.7 L1572.2 215.1 L1569.7 220.7 L1565.5 226.2 L1559.3 231.1 L1551.3 235.0 L1542.1 237.5 L1532.5 238.6 L1523.1 238.6 L1514.3 237.9 L1506.1 236.9 L1498.3 235.5 L1491.1 233.7 L1484.4 231.5 L1478.5 228.7 L1473.6 225.3 L1469.6 221.6 L1466.1 217.7 L1462.9 213.8 L1459.6 209.8 L1456.5 205.4"/><path d="M1610.3 371.6 L1604.9 369.9 L1598.3 368.5 L1591.2 366.5 L1584.9 362.6 L1580.9 355.9 L1580.3 346.3 L1583.5 334.6 L1590.0 322.0 L1598.5 309.6 L1607.8 298.0 L1617.0 287.4 L1625.9 277.4 L1634.7 267.7 L1643.8 258.5 L1653.3 250.2 L1663.0 243.6 L1672.3 239.1 L1681.0 236.4 L1688.9 235.0 L1696.4 233.9 L1703.8 232.8 L1711.3 231.8 L1718.6 231.7 L1725.0 233.3 L1729.6 237.3 L1732.0 243.6 L1732.4 251.6 L1731.6 260.3 L1730.5 268.8 L1729.8 277.3 L1729.6 285.9 L1729.1 295.6 L1727.2 306.7 L1722.9 319.1 L1715.7 331.9 L1706.1 343.9 L1695.1 354.1 L1683.7 362.1 L1672.9 368.1 L1662.9 372.6 L1653.7 376.1 L1645.1 378.9 L1637.2 380.7 L1630.2 380.9 L1624.2 379.6 L1619.2 377.1 L1614.9 374.2 L1610.3 371.6" stroke-dasharray="14 10"/><path d="M1611.6 370.1 L1608.1 366.5 L1604.9 362.4 L1601.9 357.9 L1599.2 352.6 L1597.6 346.2 L1597.7 338.3 L1600.0 329.1 L1604.5 319.2 L1610.5 309.3 L1617.3 299.8 L1624.2 290.7 L1631.0 281.6 L1638.0 272.4 L1645.6 263.0 L1654.0 254.1 L1663.0 246.6 L1672.0 241.7 L1680.1 239.8 L1686.9 240.7 L1692.2 243.2 L1696.5 246.3 L1700.5 248.9 L1704.7 250.7 L1709.4 252.1 L1714.1 253.8 L1718.3 256.5 L1721.4 260.6 L1723.3 266.0 L1724.2 272.5 L1724.5 279.7 L1724.3 287.7 L1723.2 296.7 L1720.7 306.9 L1716.2 317.9 L1709.3 329.0 L1700.4 339.2 L1690.4 347.4 L1680.3 353.2 L1671.0 356.9 L1662.9 359.3 L1655.7 361.5 L1648.8 364.3 L1641.9 367.6 L1634.7 370.9 L1627.6 373.3 L1621.2 374.0 L1615.9 372.8 L1611.6 370.1"/><path d="M1626.4 352.3 L1621.4 352.3 L1615.8 352.2 L1610.5 350.8 L1606.6 347.5 L1604.8 342.0 L1605.4 334.8 L1607.8 326.5 L1611.7 317.9 L1616.4 309.2 L1621.7 300.6 L1627.6 292.2 L1634.1 284.3 L1641.3 277.2 L1648.8 271.4 L1656.2 267.3 L1663.0 264.6 L1669.1 262.6 L1674.9 260.7 L1680.6 258.3 L1686.7 255.3 L1693.2 252.4 L1699.5 250.5 L1704.9 250.5 L1708.9 252.7 L1711.2 256.9 L1712.1 262.3 L1712.1 268.1 L1712.2 273.8 L1712.5 279.3 L1713.0 285.0 L1713.0 291.5 L1711.9 298.9 L1709.1 307.1 L1704.5 315.8 L1698.6 324.2 L1691.9 332.1 L1684.8 339.4 L1677.5 346.0 L1670.2 352.1 L1662.9 357.4 L1655.7 361.3 L1649.1 363.4 L1643.4 363.2 L1639.1 361.2 L1635.9 358.1 L1633.2 355.1 L1630.3 353.1 L1626.4 352.3"/><path d="M1632.5 344.9 L1629.8 343.4 L1626.2 342.4 L1622.3 341.2 L1618.7 339.0 L1616.3 335.3 L1615.7 330.0 L1617.1 323.4 L1620.1 316.3 L1624.4 309.0 L1629.3 302.0 L1634.5 295.3 L1640.0 289.1 L1645.7 283.5 L1651.7 278.8 L1657.5 275.4 L1663.0 273.2 L1667.8 272.2 L1672.1 271.7 L1676.1 271.0 L1680.3 269.5 L1685.1 267.3 L1690.4 264.7 L1696.0 262.8 L1701.0 262.3 L1704.7 263.7 L1706.9 267.1 L1707.6 271.8 L1707.1 277.3 L1706.1 283.0 L1704.9 288.8 L1703.6 294.6 L1701.8 300.8 L1699.2 307.3 L1695.5 314.1 L1690.8 320.7 L1685.4 326.8 L1679.7 332.1 L1674.0 336.7 L1668.4 341.0 L1662.9 345.1 L1657.4 348.8 L1652.0 351.7 L1646.9 353.4 L1642.5 353.6 L1639.1 352.1 L1636.6 349.7 L1634.6 347.1 L1632.5 344.9"/><path d="M1729.4 219.1 L1724.4 220.5 L1719.1 220.9 L1713.6 220.2 L1708.1 218.7 L1702.8 216.7 L1697.4 214.8 L1691.6 213.1 L1685.2 211.4 L1678.1 209.0 L1670.7 205.1 L1663.8 199.3 L1658.3 191.7 L1654.9 182.8 L1653.7 173.7 L1654.4 165.1 L1656.3 157.4 L1658.6 150.6 L1661.0 144.4 L1663.4 138.5 L1666.1 133.1 L1669.4 128.3 L1673.4 124.5 L1678.0 121.8 L1683.0 120.0 L1688.1 118.8 L1693.1 117.6 L1698.3 116.2 L1703.9 115.0 L1710.0 114.6 L1716.4 115.6 L1722.9 118.7 L1728.8 123.6 L1733.9 129.9 L1738.1 136.9 L1741.8 143.9 L1745.5 150.8 L1749.4 157.8 L1753.3 165.3 L1756.8 173.4 L1759.0 181.9 L1759.4 190.3 L1757.7 197.8 L1754.3 204.0 L1749.6 208.6 L1744.4 212.1 L1739.3 214.8 L1734.4 217.1 L1729.4 219.1"/><path d="M1725.6 210.9 L1720.7 210.3 L1716.3 210.0 L1712.2 210.5 L1707.9 211.7 L1703.0 213.0 L1697.6 213.5 L1691.8 212.5 L1686.0 209.9 L1680.5 205.6 L1675.6 200.2 L1671.3 194.0 L1667.5 187.4 L1664.4 180.3 L1662.1 173.0 L1661.1 165.7 L1661.6 158.7 L1663.8 152.6 L1667.2 147.8 L1671.2 144.1 L1675.1 141.2 L1678.4 138.4 L1681.1 135.1 L1683.5 131.0 L1686.1 126.7 L1689.5 122.7 L1693.7 119.8 L1698.7 118.7 L1704.1 119.4 L1709.5 121.4 L1714.7 124.3 L1719.9 127.6 L1725.1 131.1 L1730.2 135.1 L1735.2 139.8 L1739.7 145.5 L1743.2 151.9 L1745.5 158.8 L1746.8 165.8 L1747.3 172.6 L1747.4 179.1 L1747.3 185.5 L1746.9 191.8 L1745.9 197.9 L1743.8 203.4 L1740.5 207.6 L1736.0 210.3 L1730.9 211.2 L1725.6 210.9"/><path d="M1725.0 209.6 L1721.3 211.7 L1717.0 212.8 L1712.5 213.0 L1707.9 212.7 L1703.1 212.0 L1698.1 210.7 L1693.1 208.6 L1688.3 205.2 L1684.0 200.6 L1680.9 194.8 L1679.1 188.4 L1678.6 182.2 L1678.7 176.5 L1679.1 171.6 L1679.1 167.1 L1678.5 162.7 L1677.5 158.0 L1676.6 153.0 L1676.3 147.8 L1676.7 142.7 L1678.2 138.1 L1680.4 134.0 L1683.2 130.5 L1686.5 127.3 L1690.2 124.6 L1694.4 122.6 L1699.1 121.7 L1704.2 122.4 L1709.2 124.8 L1713.9 128.7 L1717.9 133.5 L1721.3 138.6 L1724.3 143.5 L1727.2 147.9 L1730.3 152.1 L1733.4 156.5 L1736.3 161.3 L1738.4 166.5 L1739.5 172.0 L1739.4 177.2 L1738.4 182.0 L1736.8 186.2 L1735.1 190.2 L1733.6 194.2 L1732.1 198.3 L1730.3 202.5 L1728.0 206.4 L1725.0 209.6"/><path d="M1901.5 376.1 L1896.0 388.8 L1886.7 398.8 L1874.2 405.3 L1859.6 408.3 L1844.4 408.9 L1829.3 408.2 L1814.5 407.5 L1799.5 406.9 L1783.7 405.7 L1767.3 402.7 L1750.9 396.5 L1735.9 386.9 L1723.4 374.2 L1714.0 359.7 L1707.5 344.7 L1703.0 330.1 L1699.8 316.2 L1697.1 302.9 L1695.4 289.9 L1695.3 277.2 L1697.3 265.2 L1701.5 254.2 L1707.4 244.3 L1713.9 235.1 L1720.2 225.7 L1726.3 215.2 L1733.0 203.5 L1741.5 191.6 L1752.9 181.1 L1767.4 174.2 L1784.5 172.3 L1802.4 176.1 L1819.6 184.7 L1835.0 196.3 L1848.2 209.2 L1859.7 222.1 L1870.0 234.6 L1879.5 246.7 L1887.9 259.1 L1894.7 272.0 L1899.3 285.1 L1901.7 298.1 L1902.6 310.7 L1902.8 322.9 L1903.3 335.4 L1903.9 348.5 L1903.8 362.3 L1901.5 376.1" stroke-dasharray="14 10"/><path d="M1894.1 370.5 L1883.7 377.4 L1872.1 382.0 L1860.2 385.3 L1848.7 388.4 L1837.4 391.5 L1825.6 394.4 L1813.0 396.0 L1799.6 395.2 L1786.1 391.1 L1773.5 383.8 L1762.6 374.1 L1753.6 363.3 L1746.0 352.7 L1738.9 342.7 L1731.6 333.3 L1723.9 323.8 L1716.4 313.6 L1709.8 302.6 L1705.1 290.9 L1702.6 278.8 L1701.9 266.8 L1702.7 254.7 L1704.5 242.6 L1707.5 230.4 L1712.4 218.5 L1720.0 208.0 L1730.8 200.4 L1744.4 196.9 L1759.6 197.8 L1775.0 202.8 L1789.3 210.1 L1801.9 218.2 L1813.0 225.4 L1823.5 231.4 L1834.1 236.4 L1845.1 241.5 L1856.3 247.6 L1866.8 255.4 L1876.1 264.7 L1883.8 275.3 L1890.2 286.5 L1895.8 298.2 L1900.7 310.5 L1904.6 323.3 L1906.8 336.6 L1906.1 349.5 L1901.8 361.1 L1894.1 370.5"/><path d="M1864.7 348.5 L1858.6 354.1 L1851.6 358.6 L1843.9 362.1 L1836.1 365.2 L1828.1 368.4 L1819.8 372.3 L1810.5 376.3 L1799.8 379.7 L1787.7 381.2 L1774.9 379.5 L1762.5 374.3 L1751.6 365.9 L1743.1 355.5 L1736.8 344.1 L1732.3 333.0 L1728.6 322.4 L1725.3 312.3 L1722.2 302.3 L1720.1 292.4 L1719.6 282.5 L1721.1 273.3 L1724.6 265.0 L1729.6 257.7 L1735.3 251.2 L1741.1 245.0 L1747.0 238.8 L1753.5 232.8 L1761.0 227.4 L1770.0 223.7 L1780.1 222.2 L1790.9 223.2 L1801.8 226.1 L1812.2 230.1 L1822.5 234.4 L1833.0 238.5 L1844.1 242.8 L1855.8 248.1 L1867.2 255.1 L1877.1 264.2 L1884.4 275.1 L1888.2 286.8 L1888.6 298.4 L1886.5 309.0 L1882.8 318.5 L1878.6 327.0 L1874.4 334.7 L1869.9 341.9 L1864.7 348.5"/><path d="M1859.6 344.6 L1855.2 350.9 L1848.9 355.5 L1841.2 358.2 L1832.7 359.0 L1824.1 358.5 L1815.9 357.5 L1808.0 356.5 L1800.1 355.5 L1792.1 354.2 L1783.9 352.1 L1775.7 348.8 L1767.9 344.2 L1760.8 338.6 L1754.0 332.4 L1747.4 325.8 L1740.7 318.7 L1734.0 310.9 L1727.9 302.2 L1723.4 292.7 L1721.6 283.0 L1723.2 274.0 L1728.0 266.5 L1735.2 261.1 L1743.5 257.4 L1751.8 255.0 L1759.4 253.0 L1766.1 250.9 L1772.5 248.5 L1779.0 246.3 L1786.1 244.6 L1793.6 244.1 L1801.5 244.7 L1809.6 246.3 L1817.9 248.4 L1826.5 251.0 L1835.5 254.3 L1844.7 258.6 L1853.6 264.4 L1861.2 271.8 L1866.7 280.4 L1869.6 289.7 L1870.2 298.8 L1869.1 307.3 L1867.3 315.1 L1865.6 322.5 L1864.1 329.9 L1862.3 337.4 L1859.6 344.6"/><path d="M1843.9 332.8 L1838.6 335.5 L1832.9 337.2 L1827.4 338.5 L1822.3 339.8 L1817.3 341.6 L1812.2 343.7 L1806.6 345.5 L1800.2 346.4 L1793.4 345.8 L1786.7 343.5 L1780.5 339.7 L1775.0 334.9 L1770.1 329.7 L1765.5 324.6 L1760.8 319.4 L1756.0 314.0 L1751.5 308.2 L1747.7 301.7 L1745.4 294.9 L1744.9 288.1 L1746.1 281.8 L1748.7 276.2 L1752.2 271.2 L1756.1 266.8 L1760.4 262.9 L1765.2 259.6 L1770.6 257.3 L1776.7 256.2 L1783.2 256.5 L1789.6 258.1 L1795.7 260.2 L1801.3 262.3 L1806.8 263.8 L1812.6 264.7 L1819.1 265.3 L1826.3 266.5 L1834.0 268.9 L1841.2 272.9 L1847.3 278.4 L1851.7 285.0 L1854.4 292.1 L1855.7 299.2 L1855.9 306.0 L1855.3 312.5 L1854.0 318.6 L1851.8 324.2 L1848.4 329.0 L1843.9 332.8"/><path d="M1827.2 320.3 L1825.1 323.0 L1823.0 325.9 L1820.7 328.9 L1817.9 331.9 L1814.4 334.3 L1810.1 335.8 L1805.3 335.9 L1800.4 334.7 L1795.6 332.5 L1791.2 329.7 L1787.1 326.8 L1783.2 323.9 L1779.2 321.1 L1775.1 318.0 L1771.4 314.4 L1768.4 310.3 L1766.4 305.8 L1765.7 301.3 L1766.1 297.0 L1767.2 293.1 L1768.7 289.5 L1770.2 286.2 L1771.8 283.0 L1773.6 280.0 L1775.8 277.3 L1778.6 275.0 L1781.9 273.4 L1785.4 272.2 L1789.1 271.3 L1792.8 270.3 L1796.8 269.2 L1801.2 268.0 L1806.2 267.4 L1811.6 267.7 L1817.0 269.3 L1821.9 272.4 L1825.8 276.6 L1828.6 281.5 L1830.2 286.5 L1831.1 291.3 L1831.6 295.6 L1832.0 299.7 L1832.3 303.6 L1832.3 307.4 L1831.8 311.0 L1830.7 314.4 L1829.1 317.4 L1827.2 320.3"/><path d="M1913.7 285.6 L1913.4 292.3 L1911.2 297.6 L1907.1 300.8 L1901.7 301.6 L1895.4 300.4 L1888.8 298.0 L1882.2 294.7 L1875.5 290.8 L1869.0 285.9 L1862.9 280.0 L1857.7 273.0 L1853.8 265.5 L1851.4 258.1 L1850.1 251.3 L1849.2 245.3 L1847.9 239.9 L1845.7 234.4 L1842.9 228.4 L1840.1 221.9 L1838.4 215.4 L1838.4 209.7 L1840.4 205.4 L1843.9 202.8 L1848.2 201.5 L1852.5 200.5 L1856.4 199.2 L1860.1 197.2 L1864.0 194.9 L1868.7 193.1 L1874.3 192.7 L1880.6 194.2 L1887.2 197.8 L1893.6 202.8 L1899.6 208.7 L1905.1 215.0 L1910.4 221.5 L1915.2 228.2 L1919.3 235.3 L1922.0 242.4 L1922.8 249.2 L1921.6 254.9 L1918.9 259.2 L1915.6 262.4 L1912.9 265.0 L1911.6 268.2 L1911.8 272.7 L1912.8 278.7 L1913.7 285.6"/><path d="M1911.4 282.6 L1907.2 283.0 L1902.7 282.3 L1898.3 281.3 L1894.3 280.6 L1890.5 280.7 L1886.5 281.1 L1882.0 281.2 L1876.9 280.2 L1871.4 277.8 L1866.0 274.0 L1860.8 269.2 L1856.1 263.7 L1851.6 258.0 L1847.4 251.9 L1843.5 245.6 L1840.4 239.0 L1838.9 232.6 L1839.3 227.0 L1841.8 222.9 L1845.9 220.4 L1850.5 219.4 L1854.7 218.9 L1857.8 218.1 L1859.6 216.1 L1860.6 212.8 L1861.7 208.7 L1863.5 204.7 L1866.5 201.9 L1870.6 200.6 L1875.4 201.1 L1880.7 202.9 L1886.2 205.6 L1891.8 208.9 L1897.5 212.8 L1903.0 217.6 L1908.1 223.3 L1912.1 229.7 L1914.6 236.4 L1915.6 242.7 L1915.4 248.3 L1914.8 253.1 L1914.6 257.5 L1914.9 262.0 L1915.8 266.9 L1916.5 272.1 L1916.2 276.9 L1914.6 280.6 L1911.4 282.6" stroke-dasharray="14 10"/><path d="M1907.3 277.4 L1904.2 278.5 L1900.3 278.0 L1896.0 276.2 L1891.8 273.7 L1888.2 271.3 L1884.9 269.7 L1881.8 269.1 L1878.2 269.1 L1874.0 268.9 L1869.2 267.7 L1864.1 265.2 L1859.2 261.3 L1855.0 256.4 L1851.7 250.9 L1849.1 245.3 L1847.2 239.8 L1845.9 234.5 L1845.3 229.4 L1845.8 225.0 L1847.5 221.5 L1850.5 219.4 L1854.3 218.6 L1858.4 218.7 L1861.9 219.1 L1864.6 218.8 L1866.6 217.5 L1868.2 215.1 L1870.2 212.4 L1873.0 210.2 L1876.6 209.4 L1880.8 210.3 L1885.3 212.7 L1889.6 216.3 L1893.6 220.3 L1897.4 224.4 L1901.2 228.6 L1905.0 233.0 L1908.7 237.7 L1911.7 242.8 L1913.8 248.1 L1914.7 253.0 L1914.5 257.5 L1913.7 261.4 L1912.7 264.9 L1911.7 268.3 L1910.8 271.8 L1909.4 274.9 L1907.3 277.4"/><path d="M1901.4 269.8 L1898.5 269.8 L1895.5 269.5 L1892.8 269.3 L1890.3 269.4 L1887.7 269.6 L1884.9 269.7 L1881.8 269.0 L1878.5 267.3 L1875.3 264.7 L1872.5 261.4 L1870.1 257.9 L1867.8 254.6 L1865.5 251.5 L1862.6 248.4 L1859.3 244.9 L1855.8 240.9 L1852.8 236.3 L1850.8 231.6 L1850.1 227.3 L1850.8 223.7 L1852.6 221.0 L1854.9 219.1 L1857.6 217.8 L1860.3 216.9 L1863.1 216.4 L1866.1 216.6 L1869.3 217.5 L1872.6 219.2 L1875.7 221.4 L1878.6 223.7 L1881.1 225.4 L1883.6 226.5 L1886.4 227.1 L1889.8 227.6 L1893.9 228.7 L1898.3 230.9 L1902.4 234.2 L1905.6 238.4 L1907.8 243.0 L1908.8 247.5 L1909.1 251.5 L1908.9 255.2 L1908.7 258.7 L1908.3 261.9 L1907.5 264.9 L1906.2 267.4 L1904.1 269.1 L1901.4 269.8"/><path d="M1895.5 262.2 L1893.9 262.9 L1892.3 263.7 L1890.8 264.7 L1889.1 266.1 L1887.2 267.4 L1884.7 268.4 L1881.8 268.3 L1878.5 267.0 L1875.4 264.4 L1872.7 260.9 L1870.7 257.1 L1869.4 253.4 L1868.5 250.1 L1867.8 247.2 L1867.1 244.6 L1866.3 242.2 L1865.7 239.8 L1865.4 237.6 L1865.4 235.5 L1865.6 233.5 L1865.7 231.6 L1865.8 229.4 L1865.7 226.8 L1865.8 224.0 L1866.3 221.2 L1867.5 219.1 L1869.5 217.9 L1872.2 218.0 L1875.2 219.4 L1878.3 221.5 L1881.1 223.9 L1883.6 226.1 L1886.1 228.2 L1888.6 230.1 L1891.1 232.1 L1893.6 234.5 L1895.7 237.3 L1897.3 240.4 L1898.1 243.4 L1898.4 246.2 L1898.4 248.6 L1898.3 250.9 L1898.4 253.2 L1898.5 255.4 L1898.4 257.6 L1897.9 259.6 L1896.9 261.1 L1895.5 262.2" stroke-dasharray="14 10"/><path d="M2105.0 250.3 L2105.6 256.0 L2105.4 261.8 L2103.4 267.1 L2099.0 271.6 L2092.4 274.6 L2084.0 276.3 L2074.3 276.7 L2063.9 276.1 L2053.0 274.7 L2041.7 272.3 L2030.4 268.7 L2019.5 264.0 L2009.7 258.1 L2001.4 251.6 L1994.9 244.9 L1989.8 238.6 L1985.2 232.7 L1980.4 227.2 L1974.9 221.8 L1968.8 216.0 L1963.0 209.7 L1958.4 203.1 L1956.1 196.8 L1956.4 191.0 L1959.1 186.1 L1963.5 182.0 L1969.0 178.6 L1975.1 175.7 L1982.0 173.1 L1989.8 171.2 L1998.8 170.4 L2008.9 170.9 L2019.6 172.8 L2030.5 176.0 L2041.1 180.1 L2051.2 184.5 L2061.0 189.1 L2070.6 193.9 L2079.9 199.0 L2088.7 204.7 L2096.1 210.9 L2101.4 217.4 L2104.4 223.8 L2105.4 229.8 L2105.0 235.1 L2104.5 240.1 L2104.4 245.0 L2105.0 250.3" stroke-dasharray="14 10"/><path d="M2108.4 251.7 L2105.1 255.7 L2099.7 258.6 L2092.8 260.1 L2084.7 260.5 L2076.5 260.0 L2068.7 259.2 L2061.5 258.7 L2054.7 258.6 L2047.8 258.8 L2040.2 258.8 L2031.7 258.0 L2022.7 256.1 L2013.6 252.9 L2005.0 248.6 L1997.3 243.6 L1990.4 238.4 L1984.0 233.0 L1978.1 227.4 L1972.7 221.7 L1968.2 215.9 L1965.2 210.1 L1964.1 204.6 L1965.0 199.7 L1967.6 195.5 L1971.3 191.9 L1975.4 188.7 L1980.0 185.9 L1984.9 183.2 L1990.8 181.2 L1997.7 180.1 L2005.8 180.3 L2014.6 181.8 L2023.5 184.5 L2031.9 187.8 L2039.8 191.1 L2047.4 194.2 L2055.1 197.0 L2063.4 199.8 L2072.3 203.1 L2081.3 207.2 L2089.9 212.1 L2097.2 217.8 L2102.8 223.8 L2106.7 229.9 L2109.1 235.8 L2110.2 241.5 L2110.1 246.8 L2108.4 251.7"/><path d="M2098.2 247.6 L2093.7 250.2 L2087.6 251.8 L2081.1 252.4 L2074.7 252.7 L2069.0 253.1 L2063.7 253.7 L2058.4 254.4 L2052.8 254.9 L2046.5 254.9 L2039.6 254.0 L2032.4 252.2 L2025.2 249.6 L2018.2 246.6 L2011.3 243.3 L2004.5 239.8 L1997.7 235.8 L1991.4 231.5 L1985.9 226.8 L1981.7 221.9 L1979.1 217.0 L1978.1 212.4 L1978.2 208.1 L1978.9 204.2 L1979.9 200.4 L1981.1 196.6 L1983.0 193.0 L1986.1 189.9 L1990.7 187.7 L1996.8 186.7 L2004.0 187.1 L2011.7 188.5 L2019.1 190.5 L2026.1 192.6 L2032.7 194.6 L2039.2 196.3 L2045.8 198.0 L2052.8 200.1 L2059.9 202.7 L2066.9 206.0 L2073.5 209.9 L2079.5 214.2 L2085.1 218.8 L2090.2 223.6 L2094.9 228.7 L2098.5 233.9 L2100.7 239.1 L2100.6 243.8 L2098.2 247.6"/><path d="M2082.5 241.3 L2081.7 244.5 L2079.6 247.3 L2076.6 249.5 L2073.0 251.4 L2068.7 252.8 L2063.9 253.9 L2058.3 254.2 L2052.2 253.7 L2045.6 252.2 L2039.1 249.7 L2033.1 246.5 L2027.8 243.1 L2023.3 239.8 L2019.0 236.9 L2014.7 234.2 L2010.0 231.6 L2005.0 228.8 L2000.0 225.7 L1995.5 222.1 L1992.0 218.3 L1989.7 214.5 L1988.5 210.7 L1988.1 207.2 L1988.5 203.8 L1989.5 200.6 L1991.4 197.7 L1994.4 195.3 L1998.5 193.8 L2003.8 193.1 L2009.6 193.4 L2015.8 194.3 L2021.7 195.5 L2027.5 196.8 L2033.1 198.0 L2038.8 199.3 L2044.7 200.9 L2050.6 203.0 L2056.2 205.8 L2061.2 209.1 L2065.1 212.7 L2068.2 216.4 L2070.8 219.9 L2073.1 223.3 L2075.6 226.7 L2078.1 230.3 L2080.5 234.0 L2082.1 237.7 L2082.5 241.3" stroke-dasharray="14 10"/><path d="M2074.4 238.1 L2072.2 240.0 L2069.3 241.5 L2066.1 242.6 L2062.6 243.4 L2058.9 243.9 L2055.0 244.0 L2050.8 243.6 L2046.4 242.8 L2042.1 241.6 L2038.0 240.3 L2034.0 238.9 L2030.0 237.7 L2025.8 236.4 L2021.3 235.0 L2016.7 233.2 L2012.3 230.9 L2008.5 228.1 L2005.7 225.2 L2003.7 222.2 L2002.6 219.4 L2001.9 216.6 L2001.4 214.0 L2000.9 211.3 L2000.8 208.7 L2001.2 206.2 L2002.6 204.0 L2005.0 202.3 L2008.3 201.3 L2012.2 200.9 L2016.4 200.9 L2020.7 201.3 L2025.0 201.8 L2029.4 202.5 L2033.7 203.5 L2038.1 205.0 L2042.3 206.8 L2046.2 209.0 L2049.7 211.3 L2052.8 213.6 L2056.0 215.9 L2059.4 218.1 L2063.2 220.5 L2067.2 223.2 L2070.9 226.3 L2073.8 229.5 L2075.5 232.7 L2075.6 235.6 L2074.4 238.1"/><path d="M2059.7 232.2 L2059.4 233.9 L2058.5 235.4 L2057.0 236.6 L2054.8 237.3 L2052.0 237.5 L2048.9 237.2 L2045.8 236.6 L2042.8 235.9 L2040.0 235.2 L2037.4 234.6 L2034.6 234.0 L2031.8 233.3 L2028.9 232.3 L2026.0 231.1 L2023.2 229.7 L2020.5 228.1 L2017.9 226.3 L2015.4 224.4 L2013.0 222.4 L2010.9 220.2 L2009.4 218.0 L2008.8 215.9 L2009.2 214.0 L2010.6 212.6 L2012.7 211.7 L2015.2 211.1 L2017.7 210.7 L2020.0 210.4 L2022.1 210.0 L2024.2 209.6 L2026.4 209.2 L2028.8 209.1 L2031.6 209.3 L2034.5 209.8 L2037.4 210.6 L2040.4 211.7 L2043.3 212.8 L2046.3 214.1 L2049.3 215.5 L2052.2 217.2 L2054.8 219.0 L2056.9 221.0 L2058.4 223.1 L2059.2 225.1 L2059.6 227.0 L2059.7 228.7 L2059.7 230.5 L2059.7 232.2" stroke-dasharray="14 10"/><path d="M2091.2 359.4 L2091.5 350.6 L2093.3 341.8 L2095.8 333.1 L2098.8 324.4 L2102.2 315.4 L2106.5 305.9 L2112.5 296.3 L2120.8 287.1 L2131.7 279.0 L2144.7 272.7 L2159.1 268.6 L2174.0 266.6 L2188.5 266.3 L2202.3 267.3 L2215.5 269.0 L2228.0 271.4 L2239.8 274.6 L2250.7 278.9 L2260.2 284.4 L2268.1 290.9 L2274.3 298.3 L2279.0 306.1 L2282.8 314.1 L2286.0 322.4 L2288.4 331.0 L2289.5 340.0 L2288.7 349.5 L2285.4 359.0 L2279.4 368.1 L2271.0 376.5 L2261.1 384.0 L2250.3 390.7 L2239.0 396.8 L2227.4 402.7 L2215.1 408.3 L2201.8 413.2 L2187.7 416.7 L2173.2 418.4 L2158.9 417.8 L2145.6 415.0 L2133.9 410.5 L2123.7 404.8 L2115.0 398.3 L2107.4 391.4 L2101.0 384.1 L2096.0 376.3 L2092.6 368.0 L2091.2 359.4"/><path d="M2099.2 357.8 L2097.9 349.9 L2098.1 341.8 L2099.6 333.5 L2102.4 325.1 L2106.8 316.8 L2113.1 308.8 L2121.3 301.5 L2131.1 295.4 L2142.2 290.6 L2153.8 287.0 L2165.5 284.4 L2177.0 282.4 L2188.4 280.8 L2199.9 279.7 L2211.6 279.3 L2223.0 280.2 L2233.6 282.6 L2242.9 286.7 L2250.5 292.1 L2256.4 298.2 L2261.1 304.8 L2265.2 311.4 L2268.8 318.1 L2272.1 325.0 L2274.7 332.3 L2275.8 340.1 L2275.1 348.3 L2272.3 356.6 L2267.7 364.6 L2261.4 372.4 L2254.0 379.8 L2245.4 386.8 L2235.7 393.1 L2224.8 398.6 L2212.8 402.6 L2200.2 404.8 L2187.8 405.0 L2176.1 403.4 L2165.5 400.4 L2156.1 396.8 L2147.4 393.2 L2138.9 389.7 L2130.4 386.2 L2122.0 382.3 L2114.1 377.6 L2107.4 371.9 L2102.3 365.3 L2099.2 357.8" stroke-dasharray="14 10"/><path d="M2112.7 355.3 L2111.4 348.6 L2111.5 341.7 L2113.6 334.6 L2117.5 327.9 L2122.9 321.5 L2129.4 315.8 L2136.5 310.5 L2144.0 305.7 L2152.0 301.3 L2160.5 297.5 L2169.5 294.4 L2178.9 292.4 L2188.4 291.5 L2197.6 291.6 L2206.5 292.5 L2215.2 293.7 L2223.8 295.2 L2232.7 296.8 L2241.6 299.0 L2250.4 302.0 L2258.1 306.3 L2264.1 311.8 L2267.7 318.4 L2268.9 325.6 L2268.0 333.0 L2265.4 340.2 L2261.7 347.2 L2257.2 353.8 L2251.9 360.0 L2245.8 365.7 L2238.8 370.9 L2231.1 375.3 L2222.7 379.0 L2214.2 382.0 L2205.6 384.6 L2196.9 387.1 L2187.9 389.5 L2178.3 391.6 L2168.3 393.0 L2158.1 393.2 L2148.4 391.9 L2139.7 389.0 L2132.4 384.7 L2126.5 379.5 L2121.9 373.7 L2118.2 367.8 L2115.1 361.7 L2112.7 355.3"/><path d="M2129.6 352.1 L2130.6 346.7 L2132.1 341.5 L2133.9 336.4 L2136.0 331.3 L2138.8 326.3 L2142.3 321.3 L2146.9 316.6 L2152.4 312.4 L2158.6 308.5 L2165.3 305.1 L2172.5 302.0 L2180.2 299.2 L2188.3 297.0 L2196.9 295.5 L2205.5 295.2 L2213.8 296.2 L2221.0 298.7 L2227.0 302.4 L2231.5 306.9 L2234.9 311.7 L2237.6 316.4 L2239.9 321.1 L2242.0 325.7 L2243.8 330.4 L2244.9 335.3 L2245.0 340.4 L2243.9 345.7 L2241.7 350.9 L2238.6 356.0 L2234.8 361.0 L2230.3 365.8 L2225.1 370.6 L2219.1 375.0 L2212.2 378.8 L2204.4 381.7 L2196.2 383.5 L2187.9 384.1 L2179.8 383.8 L2172.2 382.8 L2164.9 381.4 L2157.9 379.7 L2151.0 377.7 L2144.5 375.2 L2138.7 371.9 L2134.1 367.7 L2131.0 362.9 L2129.6 357.5 L2129.6 352.1"/><path d="M2138.4 350.4 L2137.5 346.0 L2138.4 341.4 L2140.6 336.9 L2143.8 332.8 L2147.7 328.9 L2151.9 325.4 L2156.3 322.2 L2161.0 319.3 L2166.1 316.8 L2171.4 314.7 L2177.0 313.2 L2182.6 312.2 L2188.3 311.6 L2193.8 311.3 L2199.4 311.2 L2205.1 311.3 L2210.9 311.7 L2216.5 312.8 L2221.6 314.7 L2225.9 317.3 L2229.1 320.6 L2231.3 324.4 L2232.6 328.3 L2233.4 332.3 L2233.8 336.4 L2234.0 340.5 L2233.5 344.8 L2232.2 349.1 L2229.8 353.4 L2226.2 357.3 L2221.7 360.7 L2216.4 363.6 L2210.8 365.9 L2205.2 367.8 L2199.4 369.3 L2193.7 370.4 L2188.0 371.1 L2182.2 371.3 L2176.7 370.9 L2171.5 369.9 L2166.7 368.4 L2162.1 366.7 L2157.6 364.8 L2153.1 362.8 L2148.6 360.5 L2144.3 357.8 L2140.7 354.4 L2138.4 350.4"/><path d="M2156.5 347.0 L2156.3 344.1 L2156.7 341.2 L2158.0 338.4 L2160.0 335.7 L2162.5 333.3 L2165.4 331.2 L2168.3 329.3 L2171.2 327.4 L2174.0 325.5 L2177.0 323.5 L2180.4 321.6 L2184.1 319.9 L2188.2 318.6 L2192.5 318.0 L2196.9 317.9 L2201.0 318.5 L2204.8 319.5 L2208.3 320.9 L2211.5 322.6 L2214.2 324.6 L2216.4 326.9 L2217.8 329.5 L2218.5 332.3 L2218.4 335.2 L2217.8 338.0 L2216.9 340.7 L2215.9 343.3 L2214.8 345.9 L2213.5 348.5 L2212.0 351.2 L2209.9 353.8 L2207.1 356.2 L2203.8 358.1 L2200.0 359.7 L2196.0 360.8 L2192.0 361.5 L2188.0 362.0 L2184.0 362.4 L2179.9 362.6 L2175.8 362.4 L2171.8 361.9 L2168.1 360.8 L2164.9 359.2 L2162.2 357.1 L2160.1 354.8 L2158.5 352.3 L2157.3 349.7 L2156.5 347.0"/><path d="M2371.1 203.7 L2369.5 207.3 L2366.7 210.2 L2362.5 211.9 L2357.4 212.5 L2351.5 212.1 L2345.5 211.2 L2339.3 209.9 L2333.0 208.5 L2326.4 206.6 L2319.5 204.2 L2312.3 201.0 L2305.3 196.9 L2298.7 192.0 L2292.8 186.5 L2287.8 180.9 L2283.6 175.2 L2280.1 169.7 L2277.2 164.3 L2275.1 159.1 L2273.9 154.3 L2273.7 149.8 L2274.7 146.0 L2276.7 142.9 L2279.2 140.2 L2281.9 137.9 L2284.7 135.5 L2287.5 133.0 L2290.7 130.6 L2294.6 128.5 L2299.7 127.3 L2305.8 127.4 L2312.7 129.0 L2320.1 131.8 L2327.4 135.7 L2334.4 140.3 L2341.0 145.2 L2347.1 150.3 L2352.8 155.5 L2357.9 160.8 L2362.2 166.3 L2365.5 171.7 L2367.9 176.9 L2369.4 181.7 L2370.3 186.3 L2371.0 190.7 L2371.4 195.1 L2371.6 199.5 L2371.1 203.7"/><path d="M2366.3 200.4 L2363.5 202.6 L2359.9 204.0 L2355.7 204.7 L2351.2 205.0 L2346.6 204.9 L2341.9 204.6 L2336.9 204.0 L2331.5 202.9 L2325.9 201.0 L2320.1 198.3 L2314.5 195.0 L2309.3 191.1 L2304.5 187.0 L2299.9 182.9 L2295.5 178.7 L2291.0 174.4 L2286.5 169.9 L2282.3 165.0 L2278.8 160.0 L2276.4 155.1 L2275.4 150.5 L2275.7 146.5 L2277.1 143.1 L2279.4 140.3 L2282.3 138.1 L2285.8 136.5 L2289.8 135.5 L2294.4 135.2 L2299.5 135.7 L2305.0 137.1 L2310.5 139.0 L2315.9 141.3 L2321.1 143.6 L2326.2 145.8 L2331.6 148.1 L2337.2 150.6 L2343.1 153.7 L2349.0 157.4 L2354.5 161.8 L2359.2 166.6 L2362.9 171.6 L2365.5 176.5 L2367.3 181.2 L2368.4 185.7 L2369.0 189.9 L2368.9 193.9 L2368.1 197.4 L2366.3 200.4"/><path d="M2355.9 193.2 L2353.4 194.6 L2351.0 195.9 L2348.6 197.2 L2346.0 198.5 L2343.0 199.6 L2339.5 200.2 L2335.3 200.1 L2330.6 199.2 L2325.6 197.6 L2320.5 195.4 L2315.4 192.7 L2310.3 189.6 L2305.4 186.2 L2300.8 182.4 L2296.9 178.3 L2293.8 174.1 L2291.7 170.0 L2290.6 166.2 L2290.2 162.8 L2290.1 159.6 L2290.0 156.7 L2289.9 153.7 L2289.8 150.7 L2290.1 147.7 L2291.0 145.0 L2292.8 142.9 L2295.5 141.4 L2298.9 140.7 L2302.9 140.7 L2307.2 141.0 L2311.6 141.8 L2316.3 142.9 L2321.1 144.4 L2326.2 146.4 L2331.2 149.1 L2336.1 152.3 L2340.6 155.9 L2344.6 159.7 L2348.2 163.6 L2351.5 167.5 L2354.6 171.4 L2357.3 175.4 L2359.4 179.3 L2360.7 183.1 L2360.9 186.5 L2360.0 189.3 L2358.2 191.5 L2355.9 193.2"/><path d="M2349.2 188.5 L2347.6 189.9 L2345.9 191.2 L2344.0 192.4 L2341.7 193.3 L2339.0 193.7 L2336.0 193.8 L2332.6 193.4 L2328.9 192.7 L2325.1 191.7 L2321.1 190.3 L2316.9 188.5 L2312.6 186.3 L2308.5 183.5 L2304.9 180.3 L2301.9 176.8 L2299.7 173.4 L2298.2 170.1 L2297.2 167.1 L2296.4 164.3 L2295.8 161.5 L2295.2 158.9 L2294.9 156.3 L2295.1 153.8 L2295.9 151.7 L2297.3 150.1 L2299.4 148.9 L2301.8 148.1 L2304.5 147.6 L2307.4 147.3 L2310.5 147.3 L2313.9 147.5 L2317.6 148.3 L2321.6 149.6 L2325.6 151.4 L2329.5 153.7 L2333.3 156.3 L2336.9 159.0 L2340.4 161.9 L2343.8 164.9 L2347.0 168.0 L2349.9 171.3 L2352.2 174.7 L2353.6 178.0 L2354.0 180.9 L2353.5 183.4 L2352.3 185.4 L2350.8 187.1 L2349.2 188.5"/><path d="M2471.6 439.9 L2464.0 441.6 L2456.1 442.9 L2447.7 442.8 L2438.7 440.3 L2429.5 434.9 L2420.5 426.8 L2412.0 416.8 L2404.2 405.9 L2396.9 394.7 L2389.8 383.3 L2382.8 371.5 L2376.1 358.8 L2370.3 345.2 L2365.8 331.0 L2363.0 316.7 L2361.7 302.9 L2361.4 289.6 L2361.8 276.5 L2362.6 263.5 L2364.1 250.4 L2366.9 238.0 L2371.5 227.5 L2378.4 220.4 L2387.2 217.8 L2397.3 219.7 L2407.8 225.4 L2417.8 233.3 L2427.0 241.8 L2435.5 249.8 L2443.6 257.2 L2451.6 264.4 L2459.6 272.2 L2467.6 281.2 L2475.1 291.7 L2482.0 303.5 L2488.4 316.1 L2494.4 329.5 L2500.1 343.7 L2505.4 358.8 L2509.6 374.6 L2512.1 390.5 L2512.0 405.3 L2509.0 417.8 L2503.4 427.0 L2496.0 432.9 L2487.8 436.2 L2479.5 438.2 L2471.6 439.9" stroke-dasharray="14 10"/><path d="M2468.1 430.6 L2461.6 433.7 L2454.2 434.5 L2446.2 432.2 L2437.9 426.8 L2430.0 419.0 L2422.8 409.9 L2416.2 400.6 L2410.0 391.9 L2403.7 383.7 L2397.1 375.4 L2390.2 366.4 L2383.5 356.0 L2377.5 344.3 L2372.8 331.6 L2369.4 318.6 L2367.4 305.7 L2366.5 293.0 L2366.6 280.7 L2367.9 269.0 L2370.7 258.7 L2375.2 250.5 L2381.5 245.5 L2389.3 243.9 L2397.7 245.4 L2406.2 249.1 L2414.0 253.4 L2421.3 257.3 L2428.1 260.3 L2435.1 262.7 L2442.4 265.4 L2450.2 269.6 L2458.1 275.9 L2465.6 284.5 L2472.3 294.8 L2478.1 306.1 L2483.2 318.1 L2487.8 330.3 L2491.9 342.9 L2495.3 355.8 L2497.5 368.7 L2498.1 381.2 L2496.8 392.3 L2493.8 401.8 L2489.5 409.4 L2484.6 415.7 L2479.3 421.1 L2473.9 426.2 L2468.1 430.6"/><path d="M2462.1 414.9 L2455.0 411.6 L2448.3 407.6 L2442.1 403.9 L2436.4 401.0 L2430.7 398.6 L2424.7 396.1 L2418.3 392.6 L2411.8 387.6 L2405.5 380.8 L2399.7 372.7 L2394.3 363.6 L2389.4 353.7 L2384.9 343.3 L2380.9 332.4 L2377.9 321.1 L2376.2 309.9 L2376.2 299.5 L2378.1 290.5 L2381.5 283.4 L2385.9 278.0 L2390.6 273.8 L2395.2 270.1 L2399.7 266.4 L2404.3 262.8 L2409.4 259.9 L2415.2 258.5 L2421.6 259.5 L2428.3 262.8 L2434.9 268.3 L2441.1 275.0 L2446.9 282.2 L2452.5 289.3 L2458.1 296.5 L2463.7 303.9 L2469.3 312.2 L2474.5 321.4 L2478.9 331.4 L2482.2 342.0 L2484.5 352.6 L2486.0 363.1 L2486.8 373.6 L2487.0 383.9 L2486.3 393.9 L2484.4 402.9 L2480.9 410.2 L2475.8 414.8 L2469.3 416.2 L2462.1 414.9"/><path d="M2520.2 178.5 L2517.2 173.2 L2516.2 167.4 L2517.4 161.6 L2520.4 156.0 L2524.4 150.8 L2529.1 145.8 L2534.2 140.9 L2539.9 136.1 L2546.6 131.7 L2554.3 128.4 L2562.8 126.5 L2571.5 126.2 L2580.0 127.2 L2587.9 129.0 L2595.3 131.0 L2602.6 133.0 L2609.9 135.0 L2617.2 137.6 L2623.6 141.1 L2628.5 145.7 L2631.0 151.4 L2631.2 157.5 L2629.5 163.4 L2627.2 168.8 L2625.2 173.7 L2624.3 178.4 L2624.4 183.3 L2624.8 188.9 L2624.3 194.9 L2622.3 201.0 L2618.3 206.7 L2612.5 211.8 L2605.5 215.9 L2597.7 219.3 L2589.3 222.0 L2580.4 224.1 L2571.1 225.0 L2561.9 224.4 L2553.5 222.0 L2546.5 217.6 L2541.6 212.0 L2538.6 205.8 L2536.8 199.9 L2535.1 194.9 L2532.6 190.7 L2529.0 187.0 L2524.5 183.0 L2520.2 178.5" stroke-dasharray="14 10"/><path d="M2526.4 177.9 L2523.3 173.2 L2521.3 167.9 L2521.0 162.3 L2522.7 156.8 L2526.4 151.6 L2531.4 147.1 L2537.2 143.2 L2543.6 139.9 L2550.3 137.0 L2557.4 135.0 L2564.9 134.0 L2572.3 134.5 L2579.2 136.5 L2585.0 139.6 L2589.8 143.1 L2593.8 146.2 L2597.9 148.6 L2602.7 150.1 L2608.6 151.2 L2615.4 152.6 L2622.1 154.9 L2627.9 158.4 L2631.8 163.0 L2633.7 168.2 L2633.6 173.7 L2632.3 179.2 L2630.1 184.5 L2627.2 189.6 L2623.7 194.6 L2619.1 199.1 L2613.4 202.9 L2606.6 205.6 L2599.4 207.1 L2592.1 207.6 L2585.3 207.6 L2578.9 207.7 L2572.7 208.0 L2566.3 208.5 L2559.6 208.7 L2552.9 208.0 L2546.8 206.1 L2541.8 202.9 L2538.3 198.8 L2536.0 194.4 L2534.2 190.1 L2532.3 186.0 L2529.6 182.1 L2526.4 177.9"/><path d="M2533.9 177.2 L2535.9 173.3 L2537.7 169.6 L2539.6 166.1 L2541.9 162.8 L2544.7 159.7 L2548.0 157.0 L2551.5 154.4 L2555.1 151.9 L2558.7 149.0 L2562.6 145.8 L2567.2 142.3 L2572.7 139.1 L2579.1 136.8 L2586.0 136.0 L2592.6 137.0 L2598.3 139.5 L2602.8 143.1 L2606.2 147.0 L2609.0 150.9 L2611.7 154.6 L2614.3 158.0 L2616.8 161.6 L2618.7 165.4 L2619.4 169.5 L2618.8 173.7 L2616.9 177.6 L2614.3 181.3 L2611.5 184.7 L2608.7 188.0 L2606.0 191.3 L2602.9 194.7 L2599.2 197.8 L2594.7 200.4 L2589.5 202.2 L2584.0 203.1 L2578.5 203.4 L2573.1 203.5 L2567.6 203.7 L2561.6 204.2 L2555.2 204.6 L2548.3 204.4 L2541.7 203.1 L2536.1 200.4 L2532.2 196.4 L2530.4 191.6 L2530.6 186.5 L2532.0 181.6 L2533.9 177.2"/><path d="M2535.9 177.0 L2535.4 173.3 L2536.4 169.5 L2538.9 166.0 L2542.2 162.9 L2545.9 160.3 L2549.7 158.0 L2553.5 156.0 L2557.3 154.2 L2561.4 152.9 L2565.6 152.1 L2569.8 152.0 L2573.9 152.3 L2577.7 152.6 L2581.4 152.8 L2585.4 152.5 L2590.0 152.0 L2595.4 151.4 L2601.1 151.5 L2606.6 152.6 L2611.1 154.9 L2614.1 158.1 L2615.5 162.0 L2615.3 166.1 L2614.3 170.0 L2612.8 173.6 L2611.1 177.0 L2609.3 180.3 L2607.0 183.3 L2604.2 186.0 L2600.7 188.2 L2596.9 190.0 L2593.0 191.4 L2589.2 192.6 L2585.6 193.9 L2581.9 195.5 L2577.9 197.2 L2573.5 198.6 L2568.7 199.4 L2564.0 199.2 L2559.6 197.9 L2555.9 195.8 L2552.8 193.4 L2550.1 190.9 L2547.2 188.5 L2544.1 186.1 L2540.8 183.5 L2537.9 180.5 L2535.9 177.0" stroke-dasharray="14 10"/><path d="M2552.5 175.6 L2552.2 173.3 L2551.7 171.0 L2551.3 168.5 L2551.2 165.7 L2551.7 162.8 L2553.3 160.1 L2555.8 157.8 L2559.2 156.2 L2563.0 155.2 L2566.9 154.7 L2570.5 154.5 L2574.1 154.3 L2577.6 153.9 L2581.2 153.6 L2584.9 153.6 L2588.6 154.2 L2591.8 155.5 L2594.3 157.4 L2596.0 159.8 L2597.0 162.3 L2597.8 164.7 L2598.4 166.9 L2599.1 169.1 L2599.7 171.3 L2599.9 173.6 L2599.7 175.9 L2598.9 178.1 L2597.6 180.3 L2596.1 182.4 L2594.7 184.6 L2593.1 187.0 L2591.4 189.7 L2589.1 192.4 L2586.0 194.8 L2582.2 196.6 L2577.9 197.2 L2573.7 196.8 L2569.8 195.3 L2566.7 193.3 L2564.1 191.1 L2562.0 189.0 L2560.0 187.1 L2558.1 185.4 L2556.3 183.7 L2554.7 181.9 L2553.6 179.9 L2552.9 177.7 L2552.5 175.6"/><path d="M2555.0 175.3 L2555.0 173.4 L2555.6 171.4 L2556.7 169.6 L2558.5 168.0 L2560.7 166.8 L2563.2 166.0 L2565.5 165.4 L2567.6 164.9 L2569.3 164.2 L2571.0 163.3 L2572.7 162.2 L2574.7 161.2 L2577.0 160.4 L2579.4 160.1 L2581.9 160.3 L2584.1 161.0 L2586.0 161.9 L2587.8 163.0 L2589.6 164.1 L2591.4 165.3 L2593.0 166.6 L2594.5 168.1 L2595.4 169.8 L2595.7 171.7 L2595.4 173.5 L2594.6 175.4 L2593.6 177.1 L2592.5 178.7 L2591.3 180.3 L2590.0 181.9 L2588.3 183.3 L2586.2 184.3 L2583.8 184.9 L2581.3 185.0 L2578.9 184.8 L2576.8 184.3 L2574.8 184.0 L2573.0 183.9 L2570.9 184.1 L2568.6 184.4 L2566.0 184.5 L2563.3 184.3 L2560.8 183.6 L2558.7 182.5 L2557.1 180.9 L2556.0 179.2 L2555.3 177.3 L2555.0 175.3"/><path d="M2779.2 268.6 L2775.7 275.7 L2770.5 282.1 L2764.4 287.9 L2758.1 293.3 L2751.8 298.6 L2745.4 304.1 L2738.4 309.7 L2730.1 315.0 L2720.2 319.4 L2708.8 322.4 L2696.4 323.7 L2683.6 323.2 L2670.9 321.2 L2658.8 318.1 L2647.3 314.0 L2636.7 309.1 L2627.2 303.4 L2619.2 296.8 L2613.1 289.6 L2609.1 282.0 L2607.1 274.3 L2606.4 266.9 L2606.4 259.7 L2606.5 252.7 L2606.8 245.6 L2607.5 238.3 L2609.4 231.0 L2613.3 223.9 L2619.4 217.5 L2627.7 212.2 L2637.6 208.1 L2648.4 205.3 L2659.6 203.3 L2671.1 201.9 L2682.8 201.0 L2694.9 200.8 L2707.2 201.6 L2719.4 203.7 L2731.0 207.3 L2741.5 212.1 L2750.7 217.9 L2758.6 224.4 L2765.5 231.2 L2771.3 238.3 L2776.1 245.6 L2779.3 253.3 L2780.4 261.0 L2779.2 268.6"/><path d="M2768.4 267.6 L2769.1 274.5 L2767.5 281.3 L2763.4 287.5 L2757.4 293.0 L2750.0 297.5 L2741.9 301.3 L2733.4 304.7 L2724.6 307.7 L2715.4 310.2 L2705.6 312.2 L2695.2 313.0 L2684.6 312.6 L2674.1 310.8 L2664.3 307.8 L2655.3 303.9 L2647.1 299.4 L2639.7 294.7 L2632.9 289.7 L2626.9 284.3 L2621.9 278.5 L2618.4 272.4 L2616.3 266.1 L2615.8 259.8 L2616.2 253.6 L2617.3 247.5 L2618.6 241.3 L2620.3 235.0 L2622.9 228.4 L2626.9 222.0 L2632.9 216.2 L2640.9 211.5 L2650.7 208.4 L2661.5 206.9 L2672.6 206.8 L2683.6 207.9 L2694.0 209.8 L2704.0 212.1 L2713.5 214.9 L2722.4 218.2 L2730.6 222.2 L2737.9 226.8 L2744.1 231.9 L2749.4 237.3 L2754.1 242.9 L2758.4 248.6 L2762.4 254.6 L2766.0 260.9 L2768.4 267.6"/><path d="M2755.9 266.5 L2753.7 271.8 L2750.3 276.7 L2745.9 281.1 L2740.9 285.1 L2735.8 288.8 L2730.4 292.4 L2724.6 295.8 L2718.1 298.9 L2710.8 301.3 L2702.6 302.7 L2694.1 302.9 L2685.5 302.1 L2677.3 300.4 L2669.3 298.2 L2661.6 295.8 L2654.0 293.1 L2646.4 290.1 L2639.1 286.5 L2632.5 282.2 L2627.1 277.1 L2623.4 271.5 L2621.3 265.7 L2620.9 259.8 L2621.7 254.1 L2623.4 248.6 L2626.1 243.4 L2629.9 238.5 L2634.7 234.1 L2640.7 230.5 L2647.7 227.8 L2655.1 225.8 L2662.7 224.5 L2670.2 223.5 L2677.5 222.5 L2685.1 221.4 L2693.1 220.3 L2701.7 219.8 L2710.7 220.1 L2719.7 221.6 L2728.2 224.5 L2735.6 228.4 L2741.8 233.1 L2746.8 238.3 L2750.7 243.8 L2753.7 249.4 L2755.7 255.1 L2756.5 260.8 L2755.9 266.5"/><path d="M2740.2 265.0 L2738.7 269.1 L2736.3 272.9 L2733.3 276.5 L2729.9 279.8 L2726.5 283.1 L2722.8 286.4 L2718.7 289.8 L2713.7 293.0 L2707.8 295.7 L2701.0 297.4 L2693.6 298.0 L2686.0 297.4 L2678.7 295.8 L2671.8 293.4 L2665.6 290.7 L2659.9 287.6 L2654.8 284.2 L2650.3 280.6 L2646.6 276.7 L2643.9 272.6 L2642.2 268.4 L2641.2 264.1 L2640.8 260.0 L2640.7 255.9 L2640.8 251.7 L2641.2 247.4 L2642.3 243.1 L2644.6 238.9 L2648.1 235.1 L2653.0 231.9 L2658.9 229.6 L2665.3 228.0 L2672.0 227.1 L2678.8 226.4 L2685.6 226.1 L2692.6 226.0 L2699.7 226.4 L2706.8 227.5 L2713.6 229.4 L2719.8 232.2 L2725.1 235.6 L2729.5 239.5 L2733.1 243.6 L2736.0 247.8 L2738.2 252.0 L2739.8 256.4 L2740.6 260.7 L2740.2 265.0"/></g></svg>
<svg class="a" style="left:0.00px;top:0.00px;" width="2560" height="42" viewBox="0 0 2560 42"><rect width="2560" height="42" fill="#777777"/><polygon points="-171.6,0 -128.4,0 -86.4,42 -129.6,42" fill="#6a6a6a"/><polygon points="-85.3,0 -42.1,0 -0.1,42 -43.3,42" fill="#6a6a6a"/><polygon points="1.0,0 44.1,0 86.2,42 43.0,42" fill="#6a6a6a"/><polygon points="87.3,0 130.4,0 172.4,42 129.3,42" fill="#6a6a6a"/><polygon points="173.6,0 216.8,0 258.8,42 215.6,42" fill="#6a6a6a"/><polygon points="259.9,0 303.0,0 345.0,42 301.9,42" fill="#6a6a6a"/><polygon points="346.2,0 389.3,0 431.3,42 388.2,42" fill="#6a6a6a"/><polygon points="432.5,0 475.6,0 517.6,42 474.5,42" fill="#6a6a6a"/><polygon points="518.8,0 561.9,0 603.9,42 560.8,42" fill="#6a6a6a"/><polygon points="605.1,0 648.2,0 690.2,42 647.1,42" fill="#6a6a6a"/><polygon points="691.4,0 734.5,0 776.5,42 733.4,42" fill="#6a6a6a"/><polygon points="777.7,0 820.8,0 862.8,42 819.7,42" fill="#6a6a6a"/><polygon points="864.0,0 907.1,0 949.1,42 906.0,42" fill="#6a6a6a"/><polygon points="950.3,0 993.4,0 1035.4,42 992.3,42" fill="#6a6a6a"/><polygon points="1036.6,0 1079.8,0 1121.8,42 1078.6,42" fill="#6a6a6a"/><polygon points="1122.9,0 1166.0,0 1208.0,42 1164.9,42" fill="#6a6a6a"/><polygon points="1209.2,0 1252.4,0 1294.4,42 1251.2,42" fill="#6a6a6a"/><polygon points="1295.5,0 1338.7,0 1380.7,42 1337.5,42" fill="#6a6a6a"/><polygon points="1381.8,0 1425.0,0 1467.0,42 1423.8,42" fill="#6a6a6a"/><polygon points="1468.1,0 1511.2,0 1553.2,42 1510.1,42" fill="#6a6a6a"/><polygon points="1554.4,0 1597.5,0 1639.5,42 1596.4,42" fill="#6a6a6a"/><polygon points="1640.7,0 1683.9,0 1725.9,42 1682.7,42" fill="#6a6a6a"/><polygon points="1727.0,0 1770.2,0 1812.2,42 1769.0,42" fill="#6a6a6a"/><polygon points="1813.3,0 1856.5,0 1898.5,42 1855.3,42" fill="#6a6a6a"/><polygon points="1899.6,0 1942.8,0 1984.8,42 1941.6,42" fill="#6a6a6a"/><polygon points="1985.9,0 2029.0,0 2071.1,42 2027.9,42" fill="#6a6a6a"/><polygon points="2072.2,0 2115.3,0 2157.3,42 2114.2,42" fill="#6a6a6a"/><polygon points="2158.5,0 2201.7,0 2243.7,42 2200.5,42" fill="#6a6a6a"/><polygon points="2244.8,0 2287.9,0 2329.9,42 2286.8,42" fill="#6a6a6a"/><polygon points="2331.1,0 2374.2,0 2416.2,42 2373.1,42" fill="#6a6a6a"/><polygon points="2417.4,0 2460.6,0 2502.6,42 2459.4,42" fill="#6a6a6a"/><polygon points="2503.7,0 2546.8,0 2588.8,42 2545.7,42" fill="#6a6a6a"/><polygon points="2590.0,0 2633.2,0 2675.2,42 2632.0,42" fill="#6a6a6a"/><polygon points="2676.3,0 2719.4,0 2761.4,42 2718.3,42" fill="#6a6a6a"/></svg>
<svg class="a" style="left:820.50px;top:12.70px;" width="18" height="18" viewBox="0 0 18 18"><circle cx="9" cy="9" r="9" fill="#fff"/><rect x="7.9" y="7.6" width="2.4" height="6.2" fill="#6e6e6e"/><circle cx="9.1" cy="5.2" r="1.35" fill="#6e6e6e"/></svg>
<div class="t " style="left:845.00px;top:13.26px;font-size:18px;line-height:18px;color:#fff;font-weight:700;font-style:normal;">Debug mode enabled for Lightning Web Components.</div>
<div class="t " style="left:1314.50px;top:13.26px;font-size:18px;line-height:18px;color:#fff;font-weight:400;font-style:normal;">Salesforce is slower in debug mode.</div>
<div class="t " style="left:1614.00px;top:13.26px;font-size:18px;line-height:18px;color:#fff;font-weight:400;font-style:normal;text-decoration:underline;text-underline-offset:3px">Learn more</div>
<svg class="a" style="left:2537.00px;top:15.50px;" width="15" height="15" viewBox="0 0 15 15"><path d="M2 1.8 L13.2 13 M13.2 1.8 L2 13" stroke="#fff" stroke-width="2.3" stroke-linecap="round"/></svg>
<div class="a" style="left:0.00px;top:42.00px;width:2560.00px;height:118.00px;background:#fff"></div>
<div class="a" style="left:0.00px;top:160.00px;width:2560.00px;height:4.00px;background:#12bf9f"></div>
<svg class="a" style="left:21.00px;top:49.00px;" width="80" height="58" viewBox="0 0 80 58"><g fill="#00a1e0"><circle cx="19.7" cy="14.2" r="14"/><circle cx="42.4" cy="14.6" r="12.2"/><circle cx="61.2" cy="24.3" r="16.6"/><circle cx="14.1" cy="33" r="13.6"/><circle cx="29.2" cy="40.8" r="13.6"/><circle cx="47.8" cy="34.8" r="12.4"/><rect x="14" y="16" width="48" height="24"/></g></svg>
<div class="a" style="left:814.30px;top:55.40px;width:539.30px;height:41.70px;border:1.5px solid #a8a8a8;border-radius:6px;background:#fff"></div>
<svg class="a" style="left:835.50px;top:68.50px;" width="19" height="19" viewBox="0 0 19 19"><circle cx="7.6" cy="7.7" r="6" fill="none" stroke="#727272" stroke-width="2.2"/><path d="M11.9 12 L17 17.2" stroke="#727272" stroke-width="2.4" stroke-linecap="round"/></svg>
<div class="t " style="left:866.00px;top:69.22px;font-size:17.7px;line-height:17.7px;color:#747474;font-weight:400;font-style:normal;">Search...</div>
<div class="t " style="left:1882.80px;top:70.90px;font-size:15px;line-height:15px;color:#181818;font-weight:700;font-style:normal;">EPT:</div>
<div class="a" style="left:1923.00px;top:67.30px;width:57.60px;height:20.90px;background:#2e844a;border-radius:4px"></div>
<div class="t " style="left:1929.00px;top:70.10px;font-size:16.3px;line-height:16.3px;color:#fff;font-weight:700;font-style:normal;">0.59 s</div>
<div class="t " style="left:1993.40px;top:70.13px;font-size:14.5px;line-height:14.5px;color:#181818;font-weight:700;font-style:normal;">ART</div>
<div class="a" style="left:2029.40px;top:64.60px;width:38.60px;height:23.60px;background:#4b8b4b;border-radius:5px"></div>
<div class="t " style="left:2038.00px;top:67.80px;font-size:16.3px;line-height:16.3px;color:#fff;font-weight:700;font-style:normal;">0 s</div>
<div class="a" style="left:2078.90px;top:67.30px;width:98.10px;height:20.90px;background:#2e844a;border-radius:4px"></div>
<div class="t " style="left:2085.00px;top:70.27px;font-size:16.1px;line-height:16.1px;color:#fff;font-weight:700;font-style:normal;">1049.63 KB</div>
<div class="a" style="left:2182.20px;top:60.30px;width:53.60px;height:31.50px;border:1.5px solid #c9c9c9;border-radius:6px;background:#fff"></div>
<div class="a" style="left:2182.20px;top:60.30px;width:31.80px;height:31.50px;background:#0b5cab;border-radius:6px 0 0 6px"></div>
<svg class="a" style="left:2187.00px;top:64.50px;" width="22" height="22" viewBox="0 0 22 22"><path d="M11 1.5 L13.6 8.1 L20.6 8.5 L15.2 13 L17 20 L11 16.1 L5 20 L6.8 13 L1.4 8.5 L8.4 8.1 Z" fill="#fff"/></svg>
<svg class="a" style="left:2218.00px;top:72.00px;" width="14" height="9" viewBox="0 0 14 9"><path d="M1 1 L13 1 L7 8 Z" fill="#939393"/></svg>
<div class="a" style="left:2258.20px;top:61.30px;width:26.60px;height:26.90px;background:#939393;border-radius:5px"></div>
<svg class="a" style="left:2258.20px;top:61.30px;" width="26.6" height="26.9" viewBox="0 0 26.6 26.9"><path d="M13.3 4.5 V22.4 M4.4 13.45 H22.2" stroke="#fff" stroke-width="2.6"/></svg>
<svg class="a" style="left:2304.50px;top:64.00px;" width="26" height="25" viewBox="0 0 26 25"><path d="M13 0.5 C20 3 25.5 10 25.5 17 C25.5 21 19 24.5 13 24.5 C7 24.5 0.5 21 0.5 17 C0.5 10 6 3 13 0.5 Z" fill="#939393"/><path d="M4 17 L11 6.5 L14.5 11.5 L16.5 9 L22 17" fill="none" stroke="#fff" stroke-width="1.8"/><path d="M0 16.5 H26" stroke="#fff" stroke-width="1.8"/><path d="M13 16.5 L11.5 19.5 L13.5 21.5 L12.5 25" fill="none" stroke="#fff" stroke-width="1.6"/></svg>
<svg class="a" style="left:2357.00px;top:64.00px;" width="18" height="25" viewBox="0 0 18 25"><path d="M2.3 6.8 C2.3 3.2 5.3 1.6 9 1.6 C12.8 1.6 15.6 3.8 15.6 7.2 C15.6 11.6 10.2 11.8 10.2 15.6 V17.4" fill="none" stroke="#939393" stroke-width="3.6"/><rect x="7.5" y="19.6" width="5.4" height="4.9" fill="#939393"/></svg>
<svg class="a" style="left:2397.50px;top:64.50px;" width="24" height="25" viewBox="0 0 24 25"><rect x="9.7" y="0" width="4.6" height="5" rx="1" fill="#939393" transform="rotate(0 12 12.5)"/><rect x="9.7" y="0" width="4.6" height="5" rx="1" fill="#939393" transform="rotate(60 12 12.5)"/><rect x="9.7" y="0" width="4.6" height="5" rx="1" fill="#939393" transform="rotate(120 12 12.5)"/><rect x="9.7" y="0" width="4.6" height="5" rx="1" fill="#939393" transform="rotate(180 12 12.5)"/><rect x="9.7" y="0" width="4.6" height="5" rx="1" fill="#939393" transform="rotate(240 12 12.5)"/><rect x="9.7" y="0" width="4.6" height="5" rx="1" fill="#939393" transform="rotate(300 12 12.5)"/><circle cx="12" cy="12.5" r="8.6" fill="#939393"/><circle cx="12" cy="12.5" r="5" fill="#fff"/><path d="M12.8 8.7 L10 13 H12.2 L11.2 16.4 L14.2 12 H12 Z" fill="#939393"/></svg>
<svg class="a" style="left:2439.40px;top:64.00px;" width="25.5" height="25" viewBox="0 0 25.5 25"><path d="M12.75 0.5 C18.5 0.5 20.5 5 20.5 10 V16 C20.5 17.5 22 18.5 23.5 18.8 C24.8 19 25 20.8 23.5 20.8 H2 C0.5 20.8 0.7 19 2 18.8 C3.5 18.5 5 17.5 5 16 V10 C5 5 7 0.5 12.75 0.5 Z" fill="#939393"/><path d="M9.3 22 H16.2 C15.5 24 14 24.8 12.75 24.8 C11.5 24.8 10 24 9.3 22 Z" fill="#939393"/></svg>
<svg class="a" style="left:2488.30px;top:53.20px;" width="46" height="46" viewBox="0 0 42 42"><defs><clipPath id="c1"><circle cx="21" cy="21" r="21"/></clipPath></defs><g clip-path="url(#c1)"><linearGradient id="bga1" x1="0" y1="0" x2="0" y2="1"><stop offset="0" stop-color="#b9a594"/><stop offset="1" stop-color="#7a6454"/></linearGradient><rect width="42" height="42" fill="url(#bga1)"/><path d="M-1 42 C0 29 5 27 21 27 C37 27 42 29 43 42 Z" fill="#1f1f1f"/><path d="M15 42 L16 27 L26 27 L27 42 Z" fill="#ecebef"/><ellipse cx="21" cy="15.5" rx="8.2" ry="9.6" fill="#4e3022"/><rect x="17.8" y="22.1" width="6.4" height="6" fill="#4e3022"/><path d="M12.8 12 C12 2.5 30 2.5 29.2 12 C27 7.5 15 7.5 12.8 12 Z" fill="#17100c"/><path d="M13.5 13.5 H28.5" stroke="#111" stroke-width="1.6"/><path d="M16.5 20.5 Q21 24 25.5 20.5" stroke="#eee" stroke-width="1.8" fill="none"/></g><circle cx="21" cy="21" r="20.6" fill="none" stroke="rgba(0,0,0,.12)" stroke-width="0.8"/><circle cx="21" cy="21" r="20.3" fill="none" stroke="#8a8a8a" stroke-width="1.4"/></svg>
<svg class="a" style="left:39.70px;top:120.60px;" width="29" height="29" viewBox="0 0 29 29"><circle cx="3.15" cy="3.15" r="3.15" fill="#747474"/><circle cx="14.3" cy="3.15" r="3.15" fill="#747474"/><circle cx="25.45" cy="3.15" r="3.15" fill="#747474"/><circle cx="3.15" cy="14.3" r="3.15" fill="#747474"/><circle cx="14.3" cy="14.3" r="3.15" fill="#747474"/><circle cx="25.45" cy="14.3" r="3.15" fill="#747474"/><circle cx="3.15" cy="25.45" r="3.15" fill="#747474"/><circle cx="14.3" cy="25.45" r="3.15" fill="#747474"/><circle cx="25.45" cy="25.45" r="3.15" fill="#747474"/></svg>
<div class="t " style="left:92.90px;top:123.96px;font-size:24.5px;line-height:24.5px;color:#181818;font-weight:400;font-style:normal;">Reckiapp - Staffing</div>
<div class="t " style="left:348.60px;top:127.06px;font-size:18px;line-height:18px;color:#181818;font-weight:400;font-style:normal;">Home</div>
<div class="t " style="left:429.20px;top:127.06px;font-size:18px;line-height:18px;color:#181818;font-weight:400;font-style:normal;">Companies</div>
<svg class="a" style="left:537.50px;top:132.40px;" width="16" height="9.5" viewBox="0 0 16 9.5"><path d="M1 1 L8 8 L15 1" fill="none" stroke="#747474" stroke-width="2"/></svg>
<div class="t " style="left:588.00px;top:127.06px;font-size:18px;line-height:18px;color:#181818;font-weight:400;font-style:normal;">Contacts</div>
<svg class="a" style="left:678.70px;top:132.40px;" width="16" height="9.5" viewBox="0 0 16 9.5"><path d="M1 1 L8 8 L15 1" fill="none" stroke="#747474" stroke-width="2"/></svg>
<div class="t " style="left:729.00px;top:127.06px;font-size:18px;line-height:18px;color:#181818;font-weight:400;font-style:normal;">Company Metrics</div>
<svg class="a" style="left:889.00px;top:132.40px;" width="16" height="9.5" viewBox="0 0 16 9.5"><path d="M1 1 L8 8 L15 1" fill="none" stroke="#747474" stroke-width="2"/></svg>
<div class="t " style="left:939.30px;top:127.06px;font-size:18px;line-height:18px;color:#181818;font-weight:400;font-style:normal;">Company Locations</div>
<svg class="a" style="left:1118.60px;top:132.40px;" width="16" height="9.5" viewBox="0 0 16 9.5"><path d="M1 1 L8 8 L15 1" fill="none" stroke="#747474" stroke-width="2"/></svg>
<div class="t " style="left:1167.90px;top:127.06px;font-size:18px;line-height:18px;color:#181818;font-weight:400;font-style:normal;">Job Leads</div>
<svg class="a" style="left:1269.60px;top:132.40px;" width="16" height="9.5" viewBox="0 0 16 9.5"><path d="M1 1 L8 8 L15 1" fill="none" stroke="#747474" stroke-width="2"/></svg>
<div class="t " style="left:1319.60px;top:127.06px;font-size:18px;line-height:18px;color:#181818;font-weight:400;font-style:normal;">Jobs</div>
<svg class="a" style="left:1375.70px;top:132.40px;" width="16" height="9.5" viewBox="0 0 16 9.5"><path d="M1 1 L8 8 L15 1" fill="none" stroke="#747474" stroke-width="2"/></svg>
<div class="t " style="left:1425.70px;top:127.06px;font-size:18px;line-height:18px;color:#181818;font-weight:400;font-style:normal;">Job Board Applications</div>
<svg class="a" style="left:1632.00px;top:132.40px;" width="16" height="9.5" viewBox="0 0 16 9.5"><path d="M1 1 L8 8 L15 1" fill="none" stroke="#747474" stroke-width="2"/></svg>
<div class="t " style="left:1682.00px;top:127.06px;font-size:18px;line-height:18px;color:#181818;font-weight:400;font-style:normal;">Applications</div>
<svg class="a" style="left:1799.70px;top:132.40px;" width="16" height="9.5" viewBox="0 0 16 9.5"><path d="M1 1 L8 8 L15 1" fill="none" stroke="#747474" stroke-width="2"/></svg>
<div class="t " style="left:1850.00px;top:127.06px;font-size:18px;line-height:18px;color:#181818;font-weight:400;font-style:normal;">Longlists</div>
<svg class="a" style="left:1940.60px;top:132.40px;" width="16" height="9.5" viewBox="0 0 16 9.5"><path d="M1 1 L8 8 L15 1" fill="none" stroke="#747474" stroke-width="2"/></svg>
<div class="t " style="left:1991.00px;top:127.06px;font-size:18px;line-height:18px;color:#181818;font-weight:400;font-style:normal;">Shortlists</div>
<svg class="a" style="left:2085.70px;top:132.40px;" width="16" height="9.5" viewBox="0 0 16 9.5"><path d="M1 1 L8 8 L15 1" fill="none" stroke="#747474" stroke-width="2"/></svg>
<div class="a" style="left:2118.00px;top:110.00px;width:240.00px;height:50.00px;background:#e9f7f5"></div>
<div class="a" style="left:2118.00px;top:110.00px;width:240.00px;height:4.00px;background:#12bf9f"></div>
<div class="t " style="left:2136.50px;top:126.96px;font-size:18px;line-height:18px;color:#0176d3;font-weight:400;font-style:normal;">*</div>
<div class="t " style="left:2149.50px;top:126.96px;font-size:18px;line-height:18px;color:#181818;font-weight:400;font-style:italic;">Availability View</div>
<svg class="a" style="left:2298.00px;top:132.40px;" width="16" height="9.5" viewBox="0 0 16 9.5"><path d="M1 1 L8 8 L15 1" fill="none" stroke="#747474" stroke-width="2"/></svg>
<svg class="a" style="left:2329.00px;top:129.50px;" width="13.5" height="12.5" viewBox="0 0 13.5 12.5"><path d="M1 1 L12.5 11.5 M12.5 1 L1 11.5" stroke="#747474" stroke-width="2"/></svg>
<div class="t " style="left:2373.70px;top:127.06px;font-size:18px;line-height:18px;color:#181818;font-weight:400;font-style:normal;">More</div>
<svg class="a" style="left:2433.30px;top:131.00px;" width="14" height="9" viewBox="0 0 14 9"><path d="M0 0 H14 L7 9 Z" fill="#747474"/></svg>
<svg class="a" style="left:2519.00px;top:127.60px;" width="18.5" height="18.5" viewBox="0 0 18.5 18.5"><path d="M14.6 0.6 L17.9 3.9 L5.2 16.6 L0.6 17.9 L1.9 13.3 Z" fill="#747474"/><path d="M12.2 3 L15.5 6.3" stroke="#fff" stroke-width="1.1"/></svg>
<div class="a" style="left:2540.40px;top:165.20px;width:29.60px;height:43.70px;background:#2b6a9e;border:4.5px solid rgba(190,210,235,.55);border-radius:8px"></div>
<svg class="a" style="left:2551.00px;top:179.50px;" width="9" height="15" viewBox="0 0 9 15"><path d="M9 0 V15 L0 7.5 Z" fill="#8aaacf"/></svg>
<div class="a" style="left:16.70px;top:180.00px;width:2526.30px;height:66.00px;background:#f3f3f3;border-radius:5px;box-shadow:0 1px 2px rgba(0,0,0,.15)"></div>
<div class="a" style="left:33.00px;top:191.70px;width:43.20px;height:42.60px;background:#8781e8;border-radius:2px"></div>
<svg class="a" style="left:39.50px;top:198.00px;" width="30" height="30" viewBox="0 0 30 30"><path d="M15 3 L18.6 11.2 L27.4 11.8 L20.6 17.5 L22.8 26.3 L15 21.5 L7.2 26.3 L9.4 17.5 L2.6 11.8 L11.4 11.2 Z" fill="#fff" stroke="#fff" stroke-width="1.5" stroke-linejoin="round"/></svg>
<div class="t " style="left:93.70px;top:196.93px;font-size:25.6px;line-height:25.6px;color:#181818;font-weight:400;font-style:normal;">Availability View</div>
<div class="a" style="left:16.20px;top:262.00px;width:2527.30px;height:1082.00px;background:#fff"></div>
<div class="t " style="left:33.00px;top:286.82px;font-size:16.4px;line-height:16.4px;color:#444444;font-weight:400;font-style:normal;">Date Range</div>
<div class="a" style="left:32.20px;top:306.30px;width:383.30px;height:42.40px;border:1.5px solid #a8a8a8;border-radius:6px;background:#fff"></div>
<div class="t " style="left:50.00px;top:319.49px;font-size:18.2px;line-height:18.2px;color:#181818;font-weight:400;font-style:normal;">This Month</div>
<svg class="a" style="left:388.70px;top:324.20px;" width="13.5" height="9" viewBox="0 0 13.5 9"><path d="M0 0 H13.5 L6.75 9 Z" fill="#747474"/></svg>
<div class="t " style="left:448.60px;top:286.82px;font-size:16.4px;line-height:16.4px;color:#444444;font-weight:400;font-style:normal;">Status</div>
<div class="a" style="left:447.90px;top:306.30px;width:383.50px;height:42.40px;border:1.5px solid #a8a8a8;border-radius:6px;background:#fff"></div>
<div class="t " style="left:466.10px;top:319.49px;font-size:18.2px;line-height:18.2px;color:#181818;font-weight:400;font-style:normal;">-- All --</div>
<svg class="a" style="left:804.40px;top:324.20px;" width="13.5" height="9" viewBox="0 0 13.5 9"><path d="M0 0 H13.5 L6.75 9 Z" fill="#747474"/></svg>
<div class="a" style="left:2293.30px;top:293.30px;width:142.40px;height:41.20px;border:1.5px solid #9a9a9a;border-radius:6px;background:#fff"></div>
<div class="t " style="left:2316.20px;top:306.46px;font-size:18px;line-height:18px;color:#0176d3;font-weight:400;font-style:normal;">Clear Filters</div>
<div class="a" style="left:2452.40px;top:292.40px;width:43.30px;height:43.30px;border:1.5px solid #9a9a9a;border-radius:6px;background:#fff"></div>
<svg class="a" style="left:2465.00px;top:306.00px;" width="17" height="17" viewBox="0 0 17 17"><path d="M11.6 3.6 A6.4 6.4 0 1 0 14.6 10.2" fill="none" stroke="#747474" stroke-width="2.4"/><path d="M9.6 6.6 H15.3 V0.8" fill="none" stroke="#747474" stroke-width="2.2"/></svg>
<div class="a" style="left:32.00px;top:365.90px;width:2496.00px;height:1.00px;background:#e5e5e5"></div>
<div class="a" style="left:54px;top:388.3px;width:98.8px;height:27px;border-radius:14px;background:#27ae60;color:#fff;font-size:16.3px;font-weight:700;line-height:28.5px;text-align:center">Available</div>
<div class="a" style="left:163.2px;top:388.3px;width:119.8px;height:27px;border-radius:14px;background:#e74c3c;color:#fff;font-size:16.3px;font-weight:700;line-height:28.5px;text-align:center">Unavailable</div>
<div class="a" style="left:293.8px;top:388.3px;width:86.6px;height:27px;border-radius:14px;background:#3498db;color:#fff;font-size:16.3px;font-weight:700;line-height:28.5px;text-align:center">Booked</div>
<div class="a" style="left:391.9px;top:388.3px;width:61.1px;height:27px;border-radius:14px;background:#9b59b6;color:#fff;font-size:16.3px;font-weight:700;line-height:28.5px;text-align:center">Sick</div>
<div class="a" style="left:464px;top:388.3px;width:104.6px;height:27px;border-radius:14px;background:#f1c40f;color:#111;font-size:16.3px;font-weight:700;line-height:28.5px;text-align:center">Jury Duty</div>
<div class="a" style="left:579.4px;top:388.3px;width:135.9px;height:27px;border-radius:14px;background:#4a4a4a;color:#fff;font-size:16.3px;font-weight:700;line-height:28.5px;text-align:center">Other Agency</div>
<div class="t " style="left:54.60px;top:428.42px;font-size:17.1px;line-height:17.1px;color:#5d6a7a;font-weight:400;font-style:normal;">Showing: THIS_MONTH · 2026-02-01</div>
<svg class="a" style="left:347.50px;top:432.50px;" width="11" height="10" viewBox="0 0 11 10"><path d="M0.5 5 H9.6 M5.6 1 L9.6 5 L5.6 9" fill="none" stroke="#5d6a7a" stroke-width="1.6"/></svg>
<div class="t " style="left:367.00px;top:428.42px;font-size:17.1px;line-height:17.1px;color:#5d6a7a;font-weight:400;font-style:normal;">2026-02-28 · Days: 28</div>
<div class="a" style="left:32.00px;top:473.00px;width:2496.00px;height:786.00px;border:1px solid #ebebeb;border-radius:12px;background:#fff;overflow:hidden"></div>
<div class="a" style="left:814.40px;top:474.00px;width:60.42px;height:49.00px;background:#f0f0f0"></div>
<div class="a" style="left:874.82px;top:474.00px;width:60.42px;height:49.00px;background:#f7f7f7"></div>
<div class="a" style="left:935.24px;top:474.00px;width:60.42px;height:49.00px;background:#f7f7f7"></div>
<div class="a" style="left:995.66px;top:474.00px;width:60.42px;height:49.00px;background:#f7f7f7"></div>
<div class="a" style="left:1056.08px;top:474.00px;width:60.42px;height:49.00px;background:#f7f7f7"></div>
<div class="a" style="left:1116.50px;top:474.00px;width:60.42px;height:49.00px;background:#f7f7f7"></div>
<div class="a" style="left:1176.92px;top:474.00px;width:60.42px;height:49.00px;background:#f0f0f0"></div>
<div class="a" style="left:1237.34px;top:474.00px;width:60.42px;height:49.00px;background:#f0f0f0"></div>
<div class="a" style="left:1297.76px;top:474.00px;width:60.42px;height:49.00px;background:#f7f7f7"></div>
<div class="a" style="left:1358.18px;top:474.00px;width:60.42px;height:49.00px;background:#f7f7f7"></div>
<div class="a" style="left:1418.60px;top:474.00px;width:60.42px;height:49.00px;background:#f7f7f7"></div>
<div class="a" style="left:1479.02px;top:474.00px;width:60.42px;height:49.00px;background:#f7f7f7"></div>
<div class="a" style="left:1539.44px;top:474.00px;width:60.42px;height:49.00px;background:#f7f7f7"></div>
<div class="a" style="left:1599.86px;top:474.00px;width:60.42px;height:49.00px;background:#f0f0f0"></div>
<div class="a" style="left:1660.28px;top:474.00px;width:60.42px;height:49.00px;background:#f0f0f0"></div>
<div class="a" style="left:1720.70px;top:474.00px;width:60.42px;height:49.00px;background:#f7f7f7"></div>
<div class="a" style="left:1781.12px;top:474.00px;width:60.42px;height:49.00px;background:#f7f7f7"></div>
<div class="a" style="left:1841.54px;top:474.00px;width:60.42px;height:49.00px;background:#f7f7f7"></div>
<div class="a" style="left:1901.96px;top:474.00px;width:60.42px;height:49.00px;background:#f7f7f7"></div>
<div class="a" style="left:1962.38px;top:474.00px;width:60.42px;height:49.00px;background:#f7f7f7"></div>
<div class="a" style="left:2022.80px;top:474.00px;width:60.42px;height:49.00px;background:#f0f0f0"></div>
<div class="a" style="left:2083.22px;top:474.00px;width:60.42px;height:49.00px;background:#f0f0f0"></div>
<div class="a" style="left:2143.64px;top:474.00px;width:60.42px;height:49.00px;background:#f7f7f7"></div>
<div class="a" style="left:2204.06px;top:474.00px;width:60.42px;height:49.00px;background:#f7f7f7"></div>
<div class="a" style="left:2264.48px;top:474.00px;width:60.42px;height:49.00px;background:#f7f7f7"></div>
<div class="a" style="left:2324.90px;top:474.00px;width:60.42px;height:49.00px;background:#f7f7f7"></div>
<div class="a" style="left:2385.32px;top:474.00px;width:60.42px;height:49.00px;background:#f7f7f7"></div>
<div class="a" style="left:2445.74px;top:474.00px;width:60.42px;height:49.00px;background:#f0f0f0"></div>
<div class="a" style="left:33.00px;top:523.00px;width:2494.00px;height:1.00px;background:#e8e8e8"></div>
<div class="t " style="left:44.60px;top:483.29px;font-size:16.2px;line-height:16.2px;color:#5a6a7b;font-weight:700;font-style:normal;letter-spacing:0.2px">NAME</div>
<div class="t " style="left:287.50px;top:483.29px;font-size:16.2px;line-height:16.2px;color:#5a6a7b;font-weight:700;font-style:normal;letter-spacing:0.2px">PHONE</div>
<div class="t " style="left:530.20px;top:483.29px;font-size:16.2px;line-height:16.2px;color:#5a6a7b;font-weight:700;font-style:normal;letter-spacing:0.2px">EMAIL</div>
<div class="a" style="left:814.40px;top:480.05px;width:60.42px;font-size:16.3px;line-height:19.6px;text-align:center;color:#181818">1<br>Sun</div>
<div class="a" style="left:874.82px;top:480.05px;width:60.42px;font-size:16.3px;line-height:19.6px;text-align:center;color:#181818">2<br>Mon</div>
<div class="a" style="left:935.24px;top:480.05px;width:60.42px;font-size:16.3px;line-height:19.6px;text-align:center;color:#181818">3<br>Tue</div>
<div class="a" style="left:995.66px;top:480.05px;width:60.42px;font-size:16.3px;line-height:19.6px;text-align:center;color:#181818">4<br>Wed</div>
<div class="a" style="left:1056.08px;top:480.05px;width:60.42px;font-size:16.3px;line-height:19.6px;text-align:center;color:#181818">5<br>Thu</div>
<div class="a" style="left:1116.50px;top:480.05px;width:60.42px;font-size:16.3px;line-height:19.6px;text-align:center;color:#181818">6<br>Fri</div>
<div class="a" style="left:1176.92px;top:480.05px;width:60.42px;font-size:16.3px;line-height:19.6px;text-align:center;color:#181818">7<br>Sat</div>
<div class="a" style="left:1237.34px;top:480.05px;width:60.42px;font-size:16.3px;line-height:19.6px;text-align:center;color:#181818">8<br>Sun</div>
<div class="a" style="left:1297.76px;top:480.05px;width:60.42px;font-size:16.3px;line-height:19.6px;text-align:center;color:#181818">9<br>Mon</div>
<div class="a" style="left:1358.18px;top:480.05px;width:60.42px;font-size:16.3px;line-height:19.6px;text-align:center;color:#181818">10<br>Tue</div>
<div class="a" style="left:1418.60px;top:480.05px;width:60.42px;font-size:16.3px;line-height:19.6px;text-align:center;color:#181818">11<br>Wed</div>
<div class="a" style="left:1479.02px;top:480.05px;width:60.42px;font-size:16.3px;line-height:19.6px;text-align:center;color:#181818">12<br>Thu</div>
<div class="a" style="left:1539.44px;top:480.05px;width:60.42px;font-size:16.3px;line-height:19.6px;text-align:center;color:#181818">13<br>Fri</div>
<div class="a" style="left:1599.86px;top:480.05px;width:60.42px;font-size:16.3px;line-height:19.6px;text-align:center;color:#181818">14<br>Sat</div>
<div class="a" style="left:1660.28px;top:480.05px;width:60.42px;font-size:16.3px;line-height:19.6px;text-align:center;color:#181818">15<br>Sun</div>
<div class="a" style="left:1720.70px;top:480.05px;width:60.42px;font-size:16.3px;line-height:19.6px;text-align:center;color:#181818">16<br>Mon</div>
<div class="a" style="left:1781.12px;top:480.05px;width:60.42px;font-size:16.3px;line-height:19.6px;text-align:center;color:#181818">17<br>Tue</div>
<div class="a" style="left:1841.54px;top:480.05px;width:60.42px;font-size:16.3px;line-height:19.6px;text-align:center;color:#181818">18<br>Wed</div>
<div class="a" style="left:1901.96px;top:480.05px;width:60.42px;font-size:16.3px;line-height:19.6px;text-align:center;color:#181818">19<br>Thu</div>
<div class="a" style="left:1962.38px;top:480.05px;width:60.42px;font-size:16.3px;line-height:19.6px;text-align:center;color:#181818">20<br>Fri</div>
<div class="a" style="left:2022.80px;top:480.05px;width:60.42px;font-size:16.3px;line-height:19.6px;text-align:center;color:#181818">21<br>Sat</div>
<div class="a" style="left:2083.22px;top:480.05px;width:60.42px;font-size:16.3px;line-height:19.6px;text-align:center;color:#181818">22<br>Sun</div>
<div class="a" style="left:2143.64px;top:480.05px;width:60.42px;font-size:16.3px;line-height:19.6px;text-align:center;color:#181818">23<br>Mon</div>
<div class="a" style="left:2204.06px;top:480.05px;width:60.42px;font-size:16.3px;line-height:19.6px;text-align:center;color:#181818">24<br>Tue</div>
<div class="a" style="left:2264.48px;top:480.05px;width:60.42px;font-size:16.3px;line-height:19.6px;text-align:center;color:#181818">25<br>Wed</div>
<div class="a" style="left:2324.90px;top:480.05px;width:60.42px;font-size:16.3px;line-height:19.6px;text-align:center;color:#181818">26<br>Thu</div>
<div class="a" style="left:2385.32px;top:480.05px;width:60.42px;font-size:16.3px;line-height:19.6px;text-align:center;color:#181818">27<br>Fri</div>
<div class="a" style="left:2445.74px;top:480.05px;width:60.42px;font-size:16.3px;line-height:19.6px;text-align:center;color:#181818">28<br>Sat</div>
<div class="a" style="left:814.40px;top:524.00px;width:60.42px;height:60.00px;background:#fafafa"></div>
<div class="a" style="left:1176.92px;top:524.00px;width:60.42px;height:60.00px;background:#fafafa"></div>
<div class="a" style="left:1237.34px;top:524.00px;width:60.42px;height:60.00px;background:#fafafa"></div>
<div class="a" style="left:1599.86px;top:524.00px;width:60.42px;height:60.00px;background:#fafafa"></div>
<div class="a" style="left:1660.28px;top:524.00px;width:60.42px;height:60.00px;background:#fafafa"></div>
<div class="a" style="left:2022.80px;top:524.00px;width:60.42px;height:60.00px;background:#fafafa"></div>
<div class="a" style="left:2083.22px;top:524.00px;width:60.42px;height:60.00px;background:#fafafa"></div>
<div class="a" style="left:2445.74px;top:524.00px;width:60.42px;height:60.00px;background:#fafafa"></div>
<div class="a" style="left:814.40px;top:553.00px;width:1691.76px;height:1.00px;background:#f2f2f2"></div>
<div class="a cell" style="left:874.82px;top:524.00px;width:60.42px;height:61.00px;background:#27ae60;color:#fff"><div class="s1">A</div><div class="s2">A</div></div>
<div class="a cell" style="left:935.24px;top:524.00px;width:60.42px;height:61.00px;background:#27ae60;color:#fff"><div class="s1">A</div><div class="s2">A</div></div>
<div class="a cell" style="left:995.66px;top:524.00px;width:60.42px;height:61.00px;background:#3498db;color:#fff"><div class="s1">B</div><div class="s2">B</div></div>
<div class="a cell" style="left:1056.08px;top:524.00px;width:60.42px;height:61.00px;background:#3498db;color:#fff"><div class="s1">B</div><div class="s2">B</div></div>
<div class="a cell" style="left:1116.50px;top:524.00px;width:60.42px;height:61.00px;background:#3498db;color:#fff"><div class="s1">B</div><div class="s2">B</div></div>
<div class="a cell" style="left:1297.76px;top:524.00px;width:60.42px;height:61.00px;background:#27ae60;color:#fff"><div class="s1">A</div><div class="s2">A</div></div>
<div class="a cell" style="left:1358.18px;top:524.00px;width:60.42px;height:61.00px;background:#27ae60;color:#fff"><div class="s1">A</div><div class="s2">A</div></div>
<div class="a cell" style="left:1418.60px;top:524.00px;width:60.42px;height:61.00px;background:#27ae60;color:#fff"><div class="s1">A</div><div class="s2">A</div></div>
<div class="a cell" style="left:1479.02px;top:524.00px;width:60.42px;height:61.00px;background:#27ae60;color:#fff"><div class="s1">A</div><div class="s2">A</div></div>
<div class="a cell" style="left:1539.44px;top:524.00px;width:60.42px;height:61.00px;background:#27ae60;color:#fff"><div class="s1">A</div><div class="s2">A</div></div>
<div class="a cell" style="left:1720.70px;top:524.00px;width:60.42px;height:61.00px;background:#27ae60;color:#fff"><div class="s1">A</div><div class="s2">A</div></div>
<div class="a cell" style="left:1781.12px;top:524.00px;width:60.42px;height:61.00px;background:#27ae60;color:#fff"><div class="s1">A</div><div class="s2">A</div></div>
<div class="a cell" style="left:1841.54px;top:524.00px;width:60.42px;height:61.00px;background:#27ae60;color:#fff"><div class="s1">A</div><div class="s2">A</div></div>
<div class="a cell" style="left:1901.96px;top:524.00px;width:60.42px;height:61.00px;background:#27ae60;color:#fff"><div class="s1">A</div><div class="s2">A</div></div>
<div class="a cell" style="left:1962.38px;top:524.00px;width:60.42px;height:61.00px;background:#27ae60;color:#fff"><div class="s1">A</div><div class="s2">A</div></div>
<div class="a cell" style="left:2143.64px;top:524.00px;width:60.42px;height:61.00px;background:#27ae60;color:#fff"><div class="s1">A</div><div class="s2">A</div></div>
<div class="a cell" style="left:2204.06px;top:524.00px;width:60.42px;height:61.00px;background:#27ae60;color:#fff"><div class="s1">A</div><div class="s2">A</div></div>
<div class="a cell" style="left:2264.48px;top:524.00px;width:60.42px;height:61.00px;background:#27ae60;color:#fff"><div class="s1">A</div><div class="s2">A</div></div>
<div class="a cell" style="left:2324.90px;top:524.00px;width:60.42px;height:61.00px;background:#27ae60;color:#fff"><div class="s1">A</div><div class="s2">A</div></div>
<div class="a cell" style="left:2385.32px;top:524.00px;width:60.42px;height:61.00px;background:#27ae60;color:#fff"><div class="s1">A</div><div class="s2">A</div></div>
<div class="a" style="left:33.00px;top:584.00px;width:782.40px;height:1.00px;background:#f3f3f3"></div>
<div class="a" style="left:814.40px;top:584.00px;width:61.42px;height:1.00px;background:#f3f3f3"></div>
<div class="a" style="left:1176.92px;top:584.00px;width:121.84px;height:1.00px;background:#f3f3f3"></div>
<div class="a" style="left:1599.86px;top:584.00px;width:121.84px;height:1.00px;background:#f3f3f3"></div>
<div class="a" style="left:2022.80px;top:584.00px;width:121.84px;height:1.00px;background:#f3f3f3"></div>
<div class="a" style="left:2445.74px;top:584.00px;width:61.42px;height:1.00px;background:#f3f3f3"></div>
<div class="a" style="left:2506.16px;top:584.00px;width:20.84px;height:1.00px;background:#f3f3f3"></div>
<div class="a" style="left:875.82px;top:584.00px;width:301.10px;height:1.00px;background:rgba(255,255,255,.42)"></div>
<div class="a" style="left:1298.76px;top:584.00px;width:301.10px;height:1.00px;background:rgba(255,255,255,.42)"></div>
<div class="a" style="left:1721.70px;top:584.00px;width:301.10px;height:1.00px;background:rgba(255,255,255,.42)"></div>
<div class="a" style="left:2144.64px;top:584.00px;width:301.10px;height:1.00px;background:rgba(255,255,255,.42)"></div>
<svg class="a" style="left:44.60px;top:532.00px;" width="42" height="42" viewBox="0 0 42 42"><defs><clipPath id="c2"><circle cx="21" cy="21" r="21"/></clipPath></defs><g clip-path="url(#c2)"><linearGradient id="bga1" x1="0" y1="0" x2="0" y2="1"><stop offset="0" stop-color="#b9a594"/><stop offset="1" stop-color="#7a6454"/></linearGradient><rect width="42" height="42" fill="url(#bga1)"/><path d="M-1 42 C0 29 5 27 21 27 C37 27 42 29 43 42 Z" fill="#1f1f1f"/><path d="M15 42 L16 27 L26 27 L27 42 Z" fill="#ecebef"/><ellipse cx="21" cy="15.5" rx="8.2" ry="9.6" fill="#4e3022"/><rect x="17.8" y="22.1" width="6.4" height="6" fill="#4e3022"/><path d="M12.8 12 C12 2.5 30 2.5 29.2 12 C27 7.5 15 7.5 12.8 12 Z" fill="#17100c"/><path d="M13.5 13.5 H28.5" stroke="#111" stroke-width="1.6"/><path d="M16.5 20.5 Q21 24 25.5 20.5" stroke="#eee" stroke-width="1.8" fill="none"/></g><circle cx="21" cy="21" r="20.6" fill="none" stroke="rgba(0,0,0,.12)" stroke-width="0.8"/></svg>
<div class="t " style="left:98.60px;top:545.11px;font-size:18.06px;line-height:18.06px;color:#0b5cab;font-weight:400;font-style:normal;">Andy Young</div>
<div class="t " style="left:288.00px;top:534.14px;font-size:18.5px;line-height:18.5px;color:#0b5cab;font-weight:400;font-style:normal;letter-spacing:0.35px">(785) 265-5350</div>
<svg class="a" style="left:530.40px;top:536.60px;" width="20.2" height="15" viewBox="0 0 20.2 15"><path d="M0 1.5 Q0 0 1.5 0 H18.7 Q20.2 0 20.2 1.5 V13.5 Q20.2 15 18.7 15 H1.5 Q0 15 0 13.5 Z" fill="#777"/><path d="M0.5 1 L10.1 9.2 L19.7 1" fill="none" stroke="#fff" stroke-width="1.5"/></svg>
<div class="t " style="left:556.80px;top:534.51px;font-size:18.06px;line-height:18.06px;color:#0b5cab;font-weight:400;font-style:normal;">a_young@dickenson.com</div>
<div class="a" style="left:814.40px;top:585.00px;width:60.42px;height:60.00px;background:#fafafa"></div>
<div class="a" style="left:1176.92px;top:585.00px;width:60.42px;height:60.00px;background:#fafafa"></div>
<div class="a" style="left:1237.34px;top:585.00px;width:60.42px;height:60.00px;background:#fafafa"></div>
<div class="a" style="left:1599.86px;top:585.00px;width:60.42px;height:60.00px;background:#fafafa"></div>
<div class="a" style="left:1660.28px;top:585.00px;width:60.42px;height:60.00px;background:#fafafa"></div>
<div class="a" style="left:2022.80px;top:585.00px;width:60.42px;height:60.00px;background:#fafafa"></div>
<div class="a" style="left:2083.22px;top:585.00px;width:60.42px;height:60.00px;background:#fafafa"></div>
<div class="a" style="left:2445.74px;top:585.00px;width:60.42px;height:60.00px;background:#fafafa"></div>
<div class="a" style="left:814.40px;top:614.00px;width:1691.76px;height:1.00px;background:#f2f2f2"></div>
<div class="a cell" style="left:874.82px;top:585.00px;width:60.42px;height:61.00px;background:#f1c40f;color:#111"><div class="s1">J</div><div class="s2">J</div></div>
<div class="a cell" style="left:935.24px;top:585.00px;width:60.42px;height:61.00px;background:#f1c40f;color:#111"><div class="s1">J</div><div class="s2">J</div></div>
<div class="a cell" style="left:995.66px;top:585.00px;width:60.42px;height:61.00px;background:#f1c40f;color:#111"><div class="s1">J</div><div class="s2">J</div></div>
<div class="a cell" style="left:1056.08px;top:585.00px;width:60.42px;height:61.00px;background:#f1c40f;color:#111"><div class="s1">J</div><div class="s2">J</div></div>
<div class="a cell" style="left:1116.50px;top:585.00px;width:60.42px;height:61.00px;background:#f1c40f;color:#111"><div class="s1">J</div><div class="s2">J</div></div>
<div class="a cell" style="left:1297.76px;top:585.00px;width:60.42px;height:61.00px;background:#27ae60;color:#fff"><div class="s1">A</div><div class="s2">A</div></div>
<div class="a cell" style="left:1358.18px;top:585.00px;width:60.42px;height:61.00px;background:#27ae60;color:#fff"><div class="s1">A</div><div class="s2">A</div></div>
<div class="a cell" style="left:1418.60px;top:585.00px;width:60.42px;height:61.00px;background:#27ae60;color:#fff"><div class="s1">A</div><div class="s2">A</div></div>
<div class="a cell" style="left:1479.02px;top:585.00px;width:60.42px;height:61.00px;background:#27ae60;color:#fff"><div class="s1">A</div><div class="s2">A</div></div>
<div class="a cell" style="left:1539.44px;top:585.00px;width:60.42px;height:61.00px;background:#27ae60;color:#fff"><div class="s1">A</div><div class="s2">A</div></div>
<div class="a cell" style="left:1720.70px;top:585.00px;width:60.42px;height:61.00px;background:#27ae60;color:#fff"><div class="s1">A</div><div class="s2">A</div></div>
<div class="a cell" style="left:1781.12px;top:585.00px;width:60.42px;height:61.00px;background:#27ae60;color:#fff"><div class="s1">A</div><div class="s2">A</div></div>
<div class="a cell" style="left:1841.54px;top:585.00px;width:60.42px;height:61.00px;background:#27ae60;color:#fff"><div class="s1">A</div><div class="s2">A</div></div>
<div class="a cell" style="left:1901.96px;top:585.00px;width:60.42px;height:61.00px;background:#27ae60;color:#fff"><div class="s1">A</div><div class="s2">A</div></div>
<div class="a cell" style="left:1962.38px;top:585.00px;width:60.42px;height:61.00px;background:#27ae60;color:#fff"><div class="s1">A</div><div class="s2">A</div></div>
<div class="a cell" style="left:2143.64px;top:585.00px;width:60.42px;height:61.00px;background:#27ae60;color:#fff"><div class="s1">A</div><div class="s2">A</div></div>
<div class="a cell" style="left:2204.06px;top:585.00px;width:60.42px;height:61.00px;background:#27ae60;color:#fff"><div class="s1">A</div><div class="s2">A</div></div>
<div class="a cell" style="left:2264.48px;top:585.00px;width:60.42px;height:61.00px;background:#27ae60;color:#fff"><div class="s1">A</div><div class="s2">A</div></div>
<div class="a cell" style="left:2324.90px;top:585.00px;width:60.42px;height:61.00px;background:#27ae60;color:#fff"><div class="s1">A</div><div class="s2">A</div></div>
<div class="a cell" style="left:2385.32px;top:585.00px;width:60.42px;height:61.00px;background:#27ae60;color:#fff"><div class="s1">A</div><div class="s2">A</div></div>
<div class="a" style="left:33.00px;top:645.00px;width:782.40px;height:1.00px;background:#f3f3f3"></div>
<div class="a" style="left:814.40px;top:645.00px;width:61.42px;height:1.00px;background:#f3f3f3"></div>
<div class="a" style="left:1176.92px;top:645.00px;width:121.84px;height:1.00px;background:#f3f3f3"></div>
<div class="a" style="left:1599.86px;top:645.00px;width:121.84px;height:1.00px;background:#f3f3f3"></div>
<div class="a" style="left:2022.80px;top:645.00px;width:121.84px;height:1.00px;background:#f3f3f3"></div>
<div class="a" style="left:2445.74px;top:645.00px;width:61.42px;height:1.00px;background:#f3f3f3"></div>
<div class="a" style="left:2506.16px;top:645.00px;width:20.84px;height:1.00px;background:#f3f3f3"></div>
<div class="a" style="left:875.82px;top:645.00px;width:301.10px;height:1.00px;background:rgba(255,255,255,.42)"></div>
<div class="a" style="left:1298.76px;top:645.00px;width:301.10px;height:1.00px;background:rgba(255,255,255,.42)"></div>
<div class="a" style="left:1721.70px;top:645.00px;width:301.10px;height:1.00px;background:rgba(255,255,255,.42)"></div>
<div class="a" style="left:2144.64px;top:645.00px;width:301.10px;height:1.00px;background:rgba(255,255,255,.42)"></div>
<svg class="a" style="left:44.60px;top:593.00px;" width="42" height="42" viewBox="0 0 42 42"><defs><clipPath id="c3"><circle cx="21" cy="21" r="21"/></clipPath></defs><g clip-path="url(#c3)"><rect width="42" height="42" fill="#d9d9d9"/><rect width="19" height="30" fill="#4b78a6"/><rect y="10" width="19" height="2" fill="#9ab8d4"/><rect y="18" width="19" height="2" fill="#9ab8d4"/><rect x="33" width="9" height="42" fill="#eeeeee"/><path d="M1 42 C2 29 7 27 23 27 C39 27 44 29 45 42 Z" fill="#1d2658"/><ellipse cx="23.4" cy="15.8" rx="7" ry="9.2" fill="#6b4431"/><rect x="20.2" y="22.0" width="6.4" height="6" fill="#6b4431"/><path d="M16.2 12 C15.5 3.5 31.3 3.5 30.6 12 C29 7.5 18 7.5 16.2 12 Z" fill="#1a1210"/><path d="M17 19 Q23.4 28 29.8 19 L29.6 22 Q23.4 28.5 17.2 22 Z" fill="#2a1a12"/></g><circle cx="21" cy="21" r="20.6" fill="none" stroke="rgba(0,0,0,.12)" stroke-width="0.8"/></svg>
<div class="t " style="left:98.60px;top:606.11px;font-size:18.06px;line-height:18.06px;color:#0b5cab;font-weight:400;font-style:normal;">Arthur Song</div>
<div class="t " style="left:288.00px;top:595.14px;font-size:18.5px;line-height:18.5px;color:#0b5cab;font-weight:400;font-style:normal;letter-spacing:0.35px">(212) 842-4535</div>
<svg class="a" style="left:530.40px;top:597.60px;" width="20.2" height="15" viewBox="0 0 20.2 15"><path d="M0 1.5 Q0 0 1.5 0 H18.7 Q20.2 0 20.2 1.5 V13.5 Q20.2 15 18.7 15 H1.5 Q0 15 0 13.5 Z" fill="#777"/><path d="M0.5 1 L10.1 9.2 L19.7 1" fill="none" stroke="#fff" stroke-width="1.5"/></svg>
<div class="t " style="left:556.80px;top:595.51px;font-size:18.06px;line-height:18.06px;color:#0b5cab;font-weight:400;font-style:normal;">asong@uog.com</div>
<div class="a" style="left:814.40px;top:646.00px;width:60.42px;height:61.00px;background:#fafafa"></div>
<div class="a" style="left:1176.92px;top:646.00px;width:60.42px;height:61.00px;background:#fafafa"></div>
<div class="a" style="left:1237.34px;top:646.00px;width:60.42px;height:61.00px;background:#fafafa"></div>
<div class="a" style="left:1599.86px;top:646.00px;width:60.42px;height:61.00px;background:#fafafa"></div>
<div class="a" style="left:1660.28px;top:646.00px;width:60.42px;height:61.00px;background:#fafafa"></div>
<div class="a" style="left:2022.80px;top:646.00px;width:60.42px;height:61.00px;background:#fafafa"></div>
<div class="a" style="left:2083.22px;top:646.00px;width:60.42px;height:61.00px;background:#fafafa"></div>
<div class="a" style="left:2445.74px;top:646.00px;width:60.42px;height:61.00px;background:#fafafa"></div>
<div class="a" style="left:814.40px;top:675.00px;width:1691.76px;height:1.00px;background:#f2f2f2"></div>
<div class="a cell" style="left:874.82px;top:646.00px;width:60.42px;height:62.00px;background:#27ae60;color:#fff"><div class="s1">A</div><div class="s2">A</div></div>
<div class="a cell" style="left:935.24px;top:646.00px;width:60.42px;height:62.00px;background:#27ae60;color:#fff"><div class="s1">A</div><div class="s2">A</div></div>
<div class="a cell" style="left:995.66px;top:646.00px;width:60.42px;height:62.00px;background:#27ae60;color:#fff"><div class="s1">A</div><div class="s2">A</div></div>
<div class="a cell" style="left:1056.08px;top:646.00px;width:60.42px;height:62.00px;background:#27ae60;color:#fff"><div class="s1">A</div><div class="s2">A</div></div>
<div class="a cell" style="left:1116.50px;top:646.00px;width:60.42px;height:62.00px;background:#e74c3c;color:#fff"><div class="s1">U</div><div class="s2">U</div></div>
<div class="a cell" style="left:1297.76px;top:646.00px;width:60.42px;height:62.00px;background:#27ae60;color:#fff"><div class="s1">A</div><div class="s2">A</div></div>
<div class="a cell" style="left:1358.18px;top:646.00px;width:60.42px;height:62.00px;background:#27ae60;color:#fff"><div class="s1">A</div><div class="s2">A</div></div>
<div class="a cell" style="left:1418.60px;top:646.00px;width:60.42px;height:62.00px;background:#27ae60;color:#fff"><div class="s1">A</div><div class="s2">A</div></div>
<div class="a cell" style="left:1479.02px;top:646.00px;width:60.42px;height:62.00px;background:#27ae60;color:#fff"><div class="s1">A</div><div class="s2">A</div></div>
<div class="a cell" style="left:1539.44px;top:646.00px;width:60.42px;height:62.00px;background:#27ae60;color:#fff"><div class="s1">A</div><div class="s2">A</div></div>
<div class="a cell" style="left:1720.70px;top:646.00px;width:60.42px;height:62.00px;background:#27ae60;color:#fff"><div class="s1">A</div><div class="s2">A</div></div>
<div class="a cell" style="left:1781.12px;top:646.00px;width:60.42px;height:62.00px;background:#27ae60;color:#fff"><div class="s1">A</div><div class="s2">A</div></div>
<div class="a cell" style="left:1841.54px;top:646.00px;width:60.42px;height:62.00px;background:#27ae60;color:#fff"><div class="s1">A</div><div class="s2">A</div></div>
<div class="a cell" style="left:1901.96px;top:646.00px;width:60.42px;height:62.00px;background:#27ae60;color:#fff"><div class="s1">A</div><div class="s2">A</div></div>
<div class="a cell" style="left:1962.38px;top:646.00px;width:60.42px;height:62.00px;background:#27ae60;color:#fff"><div class="s1">A</div><div class="s2">A</div></div>
<div class="a cell" style="left:2143.64px;top:646.00px;width:60.42px;height:62.00px;background:#27ae60;color:#fff"><div class="s1">A</div><div class="s2">A</div></div>
<div class="a cell" style="left:2204.06px;top:646.00px;width:60.42px;height:62.00px;background:#27ae60;color:#fff"><div class="s1">A</div><div class="s2">A</div></div>
<div class="a cell" style="left:2264.48px;top:646.00px;width:60.42px;height:62.00px;background:#27ae60;color:#fff"><div class="s1">A</div><div class="s2">A</div></div>
<div class="a cell" style="left:2324.90px;top:646.00px;width:60.42px;height:62.00px;background:#27ae60;color:#fff"><div class="s1">A</div><div class="s2">A</div></div>
<div class="a cell" style="left:2385.32px;top:646.00px;width:60.42px;height:62.00px;background:#27ae60;color:#fff"><div class="s1">A</div><div class="s2">A</div></div>
<div class="a" style="left:33.00px;top:707.00px;width:782.40px;height:1.00px;background:#f3f3f3"></div>
<div class="a" style="left:814.40px;top:707.00px;width:61.42px;height:1.00px;background:#f3f3f3"></div>
<div class="a" style="left:1176.92px;top:707.00px;width:121.84px;height:1.00px;background:#f3f3f3"></div>
<div class="a" style="left:1599.86px;top:707.00px;width:121.84px;height:1.00px;background:#f3f3f3"></div>
<div class="a" style="left:2022.80px;top:707.00px;width:121.84px;height:1.00px;background:#f3f3f3"></div>
<div class="a" style="left:2445.74px;top:707.00px;width:61.42px;height:1.00px;background:#f3f3f3"></div>
<div class="a" style="left:2506.16px;top:707.00px;width:20.84px;height:1.00px;background:#f3f3f3"></div>
<div class="a" style="left:875.82px;top:707.00px;width:301.10px;height:1.00px;background:rgba(255,255,255,.42)"></div>
<div class="a" style="left:1298.76px;top:707.00px;width:301.10px;height:1.00px;background:rgba(255,255,255,.42)"></div>
<div class="a" style="left:1721.70px;top:707.00px;width:301.10px;height:1.00px;background:rgba(255,255,255,.42)"></div>
<div class="a" style="left:2144.64px;top:707.00px;width:301.10px;height:1.00px;background:rgba(255,255,255,.42)"></div>
<svg class="a" style="left:44.60px;top:654.50px;" width="42" height="42" viewBox="0 0 42 42"><defs><clipPath id="c4"><circle cx="21" cy="21" r="21"/></clipPath></defs><g clip-path="url(#c4)"><rect width="42" height="42" fill="#5f6368"/><path d="M-7 42 C-6 33 -1 31 17 31 C35 31 40 33 41 42 Z" fill="#1f2a38"/><path d="M7 42 L8 31 L26 31 L27 42 Z" fill="#a9c8d8"/><ellipse cx="14.5" cy="18" rx="10" ry="12.5" fill="#a7735a"/><rect x="11.3" y="27.5" width="6.4" height="6" fill="#a7735a"/><path d="M4.5 13 C4 1 25 0 25.5 11 C22 6 8 6 4.5 13 Z" fill="#2a1e18"/><path d="M9 24 Q14.5 28 20 24" stroke="#f3f3f3" stroke-width="1.8" fill="none"/></g><circle cx="21" cy="21" r="20.6" fill="none" stroke="rgba(0,0,0,.12)" stroke-width="0.8"/></svg>
<div class="t " style="left:98.60px;top:667.61px;font-size:18.06px;line-height:18.06px;color:#0b5cab;font-weight:400;font-style:normal;">Ashley James</div>
<div class="t " style="left:288.00px;top:656.14px;font-size:18.5px;line-height:18.5px;color:#0b5cab;font-weight:400;font-style:normal;letter-spacing:0.35px">+44 191 3456234</div>
<svg class="a" style="left:530.40px;top:658.60px;" width="20.2" height="15" viewBox="0 0 20.2 15"><path d="M0 1.5 Q0 0 1.5 0 H18.7 Q20.2 0 20.2 1.5 V13.5 Q20.2 15 18.7 15 H1.5 Q0 15 0 13.5 Z" fill="#777"/><path d="M0.5 1 L10.1 9.2 L19.7 1" fill="none" stroke="#fff" stroke-width="1.5"/></svg>
<div class="t " style="left:556.80px;top:656.51px;font-size:18.06px;line-height:18.06px;color:#0b5cab;font-weight:400;font-style:normal;">ajames@uog.com</div>
<div class="a" style="left:814.40px;top:708.00px;width:60.42px;height:60.00px;background:#fafafa"></div>
<div class="a" style="left:1176.92px;top:708.00px;width:60.42px;height:60.00px;background:#fafafa"></div>
<div class="a" style="left:1237.34px;top:708.00px;width:60.42px;height:60.00px;background:#fafafa"></div>
<div class="a" style="left:1599.86px;top:708.00px;width:60.42px;height:60.00px;background:#fafafa"></div>
<div class="a" style="left:1660.28px;top:708.00px;width:60.42px;height:60.00px;background:#fafafa"></div>
<div class="a" style="left:2022.80px;top:708.00px;width:60.42px;height:60.00px;background:#fafafa"></div>
<div class="a" style="left:2083.22px;top:708.00px;width:60.42px;height:60.00px;background:#fafafa"></div>
<div class="a" style="left:2445.74px;top:708.00px;width:60.42px;height:60.00px;background:#fafafa"></div>
<div class="a" style="left:814.40px;top:737.00px;width:1691.76px;height:1.00px;background:#f2f2f2"></div>
<div class="a cell" style="left:874.82px;top:708.00px;width:60.42px;height:61.00px;background:#e74c3c;color:#fff"><div class="s1">U</div><div class="s2">U</div></div>
<div class="a cell" style="left:935.24px;top:708.00px;width:60.42px;height:61.00px;background:#e74c3c;color:#fff"><div class="s1">U</div><div class="s2">U</div></div>
<div class="a cell" style="left:995.66px;top:708.00px;width:60.42px;height:61.00px;background:#e74c3c;color:#fff"><div class="s1">U</div><div class="s2">U</div></div>
<div class="a cell" style="left:1056.08px;top:708.00px;width:60.42px;height:61.00px;background:#e74c3c;color:#fff"><div class="s1">U</div><div class="s2">U</div></div>
<div class="a cell" style="left:1116.50px;top:708.00px;width:60.42px;height:61.00px;background:#4a4a4a;color:#fff"><div class="s1">O</div><div class="s2">O</div></div>
<div class="a cell" style="left:1297.76px;top:708.00px;width:60.42px;height:61.00px;background:#27ae60;color:#fff"><div class="s1">A</div><div class="s2">A</div></div>
<div class="a cell" style="left:1358.18px;top:708.00px;width:60.42px;height:61.00px;background:#27ae60;color:#fff"><div class="s1">A</div><div class="s2">A</div></div>
<div class="a cell" style="left:1418.60px;top:708.00px;width:60.42px;height:61.00px;background:#27ae60;color:#fff"><div class="s1">A</div><div class="s2">A</div></div>
<div class="a cell" style="left:1479.02px;top:708.00px;width:60.42px;height:61.00px;background:#27ae60;color:#fff"><div class="s1">A</div><div class="s2">A</div></div>
<div class="a cell" style="left:1539.44px;top:708.00px;width:60.42px;height:61.00px;background:#27ae60;color:#fff"><div class="s1">A</div><div class="s2">A</div></div>
<div class="a cell" style="left:1720.70px;top:708.00px;width:60.42px;height:61.00px;background:#27ae60;color:#fff"><div class="s1">A</div><div class="s2">A</div></div>
<div class="a cell" style="left:1781.12px;top:708.00px;width:60.42px;height:61.00px;background:#27ae60;color:#fff"><div class="s1">A</div><div class="s2">A</div></div>
<div class="a cell" style="left:1841.54px;top:708.00px;width:60.42px;height:61.00px;background:#27ae60;color:#fff"><div class="s1">A</div><div class="s2">A</div></div>
<div class="a cell" style="left:1901.96px;top:708.00px;width:60.42px;height:61.00px;background:#27ae60;color:#fff"><div class="s1">A</div><div class="s2">A</div></div>
<div class="a cell" style="left:1962.38px;top:708.00px;width:60.42px;height:61.00px;background:#27ae60;color:#fff"><div class="s1">A</div><div class="s2">A</div></div>
<div class="a cell" style="left:2143.64px;top:708.00px;width:60.42px;height:61.00px;background:#27ae60;color:#fff"><div class="s1">A</div><div class="s2">A</div></div>
<div class="a cell" style="left:2204.06px;top:708.00px;width:60.42px;height:61.00px;background:#27ae60;color:#fff"><div class="s1">A</div><div class="s2">A</div></div>
<div class="a cell" style="left:2264.48px;top:708.00px;width:60.42px;height:61.00px;background:#27ae60;color:#fff"><div class="s1">A</div><div class="s2">A</div></div>
<div class="a cell" style="left:2324.90px;top:708.00px;width:60.42px;height:61.00px;background:#27ae60;color:#fff"><div class="s1">A</div><div class="s2">A</div></div>
<div class="a cell" style="left:2385.32px;top:708.00px;width:60.42px;height:61.00px;background:#27ae60;color:#fff"><div class="s1">A</div><div class="s2">A</div></div>
<div class="a" style="left:33.00px;top:768.00px;width:782.40px;height:1.00px;background:#f3f3f3"></div>
<div class="a" style="left:814.40px;top:768.00px;width:61.42px;height:1.00px;background:#f3f3f3"></div>
<div class="a" style="left:1176.92px;top:768.00px;width:121.84px;height:1.00px;background:#f3f3f3"></div>
<div class="a" style="left:1599.86px;top:768.00px;width:121.84px;height:1.00px;background:#f3f3f3"></div>
<div class="a" style="left:2022.80px;top:768.00px;width:121.84px;height:1.00px;background:#f3f3f3"></div>
<div class="a" style="left:2445.74px;top:768.00px;width:61.42px;height:1.00px;background:#f3f3f3"></div>
<div class="a" style="left:2506.16px;top:768.00px;width:20.84px;height:1.00px;background:#f3f3f3"></div>
<div class="a" style="left:875.82px;top:768.00px;width:301.10px;height:1.00px;background:rgba(255,255,255,.42)"></div>
<div class="a" style="left:1298.76px;top:768.00px;width:301.10px;height:1.00px;background:rgba(255,255,255,.42)"></div>
<div class="a" style="left:1721.70px;top:768.00px;width:301.10px;height:1.00px;background:rgba(255,255,255,.42)"></div>
<div class="a" style="left:2144.64px;top:768.00px;width:301.10px;height:1.00px;background:rgba(255,255,255,.42)"></div>
<svg class="a" style="left:44.60px;top:716.00px;" width="42" height="42" viewBox="0 0 42 42"><defs><clipPath id="c5"><circle cx="21" cy="21" r="21"/></clipPath></defs><g clip-path="url(#c5)"><linearGradient id="bga4" x1="0" y1="0" x2="1" y2="0"><stop offset="0" stop-color="#cdc6bc"/><stop offset="1" stop-color="#9a938a"/></linearGradient><rect width="42" height="42" fill="url(#bga4)"/><rect x="2" y="8" width="5" height="22" fill="#e8e4de"/><rect x="31" y="6" width="7" height="26" fill="#dcd6ce"/><path d="M-3 42 C-2 30 3 28 20 28 C37 28 42 30 43 42 Z" fill="#b3c3db"/><ellipse cx="18.5" cy="15.5" rx="7.6" ry="9.6" fill="#8c5a40"/><rect x="15.3" y="22.1" width="6.4" height="6" fill="#8c5a40"/><path d="M10.9 12.5 C10 3 27 3 26.1 12.5 C24.5 7.5 12.5 7.5 10.9 12.5 Z" fill="#1c1410"/><path d="M11 17.5 Q18.5 31 26 17.5 L25.8 22.5 Q18.5 29.5 11.2 22.5 Z" fill="#1e1510"/></g><circle cx="21" cy="21" r="20.6" fill="none" stroke="rgba(0,0,0,.12)" stroke-width="0.8"/></svg>
<div class="t " style="left:98.60px;top:729.11px;font-size:18.06px;line-height:18.06px;color:#0b5cab;font-weight:400;font-style:normal;">Avi Green</div>
<div class="t " style="left:288.00px;top:718.14px;font-size:18.5px;line-height:18.5px;color:#0b5cab;font-weight:400;font-style:normal;letter-spacing:0.35px">(212) 842-2383</div>
<svg class="a" style="left:530.40px;top:720.60px;" width="20.2" height="15" viewBox="0 0 20.2 15"><path d="M0 1.5 Q0 0 1.5 0 H18.7 Q20.2 0 20.2 1.5 V13.5 Q20.2 15 18.7 15 H1.5 Q0 15 0 13.5 Z" fill="#777"/><path d="M0.5 1 L10.1 9.2 L19.7 1" fill="none" stroke="#fff" stroke-width="1.5"/></svg>
<div class="t " style="left:556.80px;top:718.51px;font-size:18.06px;line-height:18.06px;color:#0b5cab;font-weight:400;font-style:normal;">agreen@uog.com</div>
<div class="a" style="left:814.40px;top:769.00px;width:60.42px;height:60.00px;background:#fafafa"></div>
<div class="a" style="left:1176.92px;top:769.00px;width:60.42px;height:60.00px;background:#fafafa"></div>
<div class="a" style="left:1237.34px;top:769.00px;width:60.42px;height:60.00px;background:#fafafa"></div>
<div class="a" style="left:1599.86px;top:769.00px;width:60.42px;height:60.00px;background:#fafafa"></div>
<div class="a" style="left:1660.28px;top:769.00px;width:60.42px;height:60.00px;background:#fafafa"></div>
<div class="a" style="left:2022.80px;top:769.00px;width:60.42px;height:60.00px;background:#fafafa"></div>
<div class="a" style="left:2083.22px;top:769.00px;width:60.42px;height:60.00px;background:#fafafa"></div>
<div class="a" style="left:2445.74px;top:769.00px;width:60.42px;height:60.00px;background:#fafafa"></div>
<div class="a" style="left:814.40px;top:798.00px;width:1691.76px;height:1.00px;background:#f2f2f2"></div>
<div class="a cell" style="left:874.82px;top:769.00px;width:60.42px;height:61.00px;background:#9b59b6;color:#fff"><div class="s1">S</div><div class="s2">S</div></div>
<div class="a cell" style="left:935.24px;top:769.00px;width:60.42px;height:61.00px;background:#3498db;color:#fff"><div class="s1">B</div><div class="s2">B</div></div>
<div class="a cell" style="left:995.66px;top:769.00px;width:60.42px;height:61.00px;background:#4a4a4a;color:#fff"><div class="s1">O</div><div class="s2">O</div></div>
<div class="a cell" style="left:1056.08px;top:769.00px;width:60.42px;height:61.00px;background:#3498db;color:#fff"><div class="s1">B</div><div class="s2">B</div></div>
<div class="a cell" style="left:1116.50px;top:769.00px;width:60.42px;height:61.00px;background:#3498db;color:#fff"><div class="s1">B</div><div class="s2">B</div></div>
<div class="a cell" style="left:1297.76px;top:769.00px;width:60.42px;height:61.00px;background:#27ae60;color:#fff"><div class="s1">A</div><div class="s2">A</div></div>
<div class="a cell" style="left:1358.18px;top:769.00px;width:60.42px;height:61.00px;background:#27ae60;color:#fff"><div class="s1">A</div><div class="s2">A</div></div>
<div class="a cell" style="left:1418.60px;top:769.00px;width:60.42px;height:61.00px;background:#27ae60;color:#fff"><div class="s1">A</div><div class="s2">A</div></div>
<div class="a cell" style="left:1479.02px;top:769.00px;width:60.42px;height:61.00px;background:#27ae60;color:#fff"><div class="s1">A</div><div class="s2">A</div></div>
<div class="a cell" style="left:1539.44px;top:769.00px;width:60.42px;height:61.00px;background:#27ae60;color:#fff"><div class="s1">A</div><div class="s2">A</div></div>
<div class="a cell" style="left:1720.70px;top:769.00px;width:60.42px;height:61.00px;background:#27ae60;color:#fff"><div class="s1">A</div><div class="s2">A</div></div>
<div class="a cell" style="left:1781.12px;top:769.00px;width:60.42px;height:61.00px;background:#27ae60;color:#fff"><div class="s1">A</div><div class="s2">A</div></div>
<div class="a cell" style="left:1841.54px;top:769.00px;width:60.42px;height:61.00px;background:#27ae60;color:#fff"><div class="s1">A</div><div class="s2">A</div></div>
<div class="a cell" style="left:1901.96px;top:769.00px;width:60.42px;height:61.00px;background:#27ae60;color:#fff"><div class="s1">A</div><div class="s2">A</div></div>
<div class="a cell" style="left:1962.38px;top:769.00px;width:60.42px;height:61.00px;background:#27ae60;color:#fff"><div class="s1">A</div><div class="s2">A</div></div>
<div class="a cell" style="left:2143.64px;top:769.00px;width:60.42px;height:61.00px;background:#27ae60;color:#fff"><div class="s1">A</div><div class="s2">A</div></div>
<div class="a cell" style="left:2204.06px;top:769.00px;width:60.42px;height:61.00px;background:#27ae60;color:#fff"><div class="s1">A</div><div class="s2">A</div></div>
<div class="a cell" style="left:2264.48px;top:769.00px;width:60.42px;height:61.00px;background:#27ae60;color:#fff"><div class="s1">A</div><div class="s2">A</div></div>
<div class="a cell" style="left:2324.90px;top:769.00px;width:60.42px;height:61.00px;background:#27ae60;color:#fff"><div class="s1">A</div><div class="s2">A</div></div>
<div class="a cell" style="left:2385.32px;top:769.00px;width:60.42px;height:61.00px;background:#27ae60;color:#fff"><div class="s1">A</div><div class="s2">A</div></div>
<div class="a" style="left:33.00px;top:829.00px;width:782.40px;height:1.00px;background:#f3f3f3"></div>
<div class="a" style="left:814.40px;top:829.00px;width:61.42px;height:1.00px;background:#f3f3f3"></div>
<div class="a" style="left:1176.92px;top:829.00px;width:121.84px;height:1.00px;background:#f3f3f3"></div>
<div class="a" style="left:1599.86px;top:829.00px;width:121.84px;height:1.00px;background:#f3f3f3"></div>
<div class="a" style="left:2022.80px;top:829.00px;width:121.84px;height:1.00px;background:#f3f3f3"></div>
<div class="a" style="left:2445.74px;top:829.00px;width:61.42px;height:1.00px;background:#f3f3f3"></div>
<div class="a" style="left:2506.16px;top:829.00px;width:20.84px;height:1.00px;background:#f3f3f3"></div>
<div class="a" style="left:875.82px;top:829.00px;width:301.10px;height:1.00px;background:rgba(255,255,255,.42)"></div>
<div class="a" style="left:1298.76px;top:829.00px;width:301.10px;height:1.00px;background:rgba(255,255,255,.42)"></div>
<div class="a" style="left:1721.70px;top:829.00px;width:301.10px;height:1.00px;background:rgba(255,255,255,.42)"></div>
<div class="a" style="left:2144.64px;top:829.00px;width:301.10px;height:1.00px;background:rgba(255,255,255,.42)"></div>
<svg class="a" style="left:44.60px;top:777.00px;" width="42" height="42" viewBox="0 0 42 42"><defs><clipPath id="c6"><circle cx="21" cy="21" r="21"/></clipPath></defs><g clip-path="url(#c6)"><linearGradient id="bga5" x1="0" y1="0" x2="1" y2="0"><stop offset="0" stop-color="#6f6a66"/><stop offset="1" stop-color="#c6bfb6"/></linearGradient><rect width="42" height="42" fill="url(#bga5)"/><rect x="28" y="4" width="12" height="3" fill="#a09080"/><rect x="28" y="16" width="12" height="3" fill="#b8a890"/><path d="M10 40 C9 18 10 3 21 3 C32 3 33 18 32 40 Z" fill="#2b1b15"/><path d="M1 42 C2 33 7 31 21 31 C35 31 40 33 41 42 Z" fill="#86cf95"/><ellipse cx="21" cy="16" rx="7.6" ry="9.8" fill="#e2b9a0"/><rect x="17.8" y="22.8" width="6.4" height="6" fill="#e2b9a0"/><path d="M13.4 12 C14 5.5 28 5.5 28.6 12 C26 8 16 8 13.4 12 Z" fill="#2b1b15"/><path d="M10 42 L10 30 C11 33 13 35 15.5 35 L14.5 42 Z M32 42 L32 30 C31 33 29 35 26.5 35 L27.5 42 Z" fill="#2b1b15"/></g><circle cx="21" cy="21" r="20.6" fill="none" stroke="rgba(0,0,0,.12)" stroke-width="0.8"/></svg>
<div class="t " style="left:98.60px;top:790.11px;font-size:18.06px;line-height:18.06px;color:#0b5cab;font-weight:400;font-style:normal;">Babara Levy</div>
<div class="t " style="left:288.00px;top:779.14px;font-size:18.5px;line-height:18.5px;color:#0b5cab;font-weight:400;font-style:normal;letter-spacing:0.35px">(503) 421-5451</div>
<svg class="a" style="left:530.40px;top:781.60px;" width="20.2" height="15" viewBox="0 0 20.2 15"><path d="M0 1.5 Q0 0 1.5 0 H18.7 Q20.2 0 20.2 1.5 V13.5 Q20.2 15 18.7 15 H1.5 Q0 15 0 13.5 Z" fill="#777"/><path d="M0.5 1 L10.1 9.2 L19.7 1" fill="none" stroke="#fff" stroke-width="1.5"/></svg>
<div class="t " style="left:556.80px;top:779.51px;font-size:18.06px;line-height:18.06px;color:#0b5cab;font-weight:400;font-style:normal;">b.levy@expressl&amp;t.net</div>
<div class="a" style="left:814.40px;top:830.00px;width:60.42px;height:60.00px;background:#fafafa"></div>
<div class="a" style="left:1176.92px;top:830.00px;width:60.42px;height:60.00px;background:#fafafa"></div>
<div class="a" style="left:1237.34px;top:830.00px;width:60.42px;height:60.00px;background:#fafafa"></div>
<div class="a" style="left:1599.86px;top:830.00px;width:60.42px;height:60.00px;background:#fafafa"></div>
<div class="a" style="left:1660.28px;top:830.00px;width:60.42px;height:60.00px;background:#fafafa"></div>
<div class="a" style="left:2022.80px;top:830.00px;width:60.42px;height:60.00px;background:#fafafa"></div>
<div class="a" style="left:2083.22px;top:830.00px;width:60.42px;height:60.00px;background:#fafafa"></div>
<div class="a" style="left:2445.74px;top:830.00px;width:60.42px;height:60.00px;background:#fafafa"></div>
<div class="a" style="left:814.40px;top:859.00px;width:1691.76px;height:1.00px;background:#f2f2f2"></div>
<div class="a cell" style="left:874.82px;top:830.00px;width:60.42px;height:61.00px;background:#3498db;color:#fff"><div class="s1">B</div><div class="s2">B</div></div>
<div class="a cell" style="left:935.24px;top:830.00px;width:60.42px;height:61.00px;background:#3498db;color:#fff"><div class="s1">B</div><div class="s2">B</div></div>
<div class="a cell" style="left:995.66px;top:830.00px;width:60.42px;height:61.00px;background:#3498db;color:#fff"><div class="s1">B</div><div class="s2">B</div></div>
<div class="a cell" style="left:1056.08px;top:830.00px;width:60.42px;height:61.00px;background:#3498db;color:#fff"><div class="s1">B</div><div class="s2">B</div></div>
<div class="a cell" style="left:1116.50px;top:830.00px;width:60.42px;height:61.00px;background:#3498db;color:#fff"><div class="s1">B</div><div class="s2">B</div></div>
<div class="a cell" style="left:1297.76px;top:830.00px;width:60.42px;height:61.00px;background:#27ae60;color:#fff"><div class="s1">A</div><div class="s2">A</div></div>
<div class="a cell" style="left:1358.18px;top:830.00px;width:60.42px;height:61.00px;background:#27ae60;color:#fff"><div class="s1">A</div><div class="s2">A</div></div>
<div class="a cell" style="left:1418.60px;top:830.00px;width:60.42px;height:61.00px;background:#27ae60;color:#fff"><div class="s1">A</div><div class="s2">A</div></div>
<div class="a cell" style="left:1479.02px;top:830.00px;width:60.42px;height:61.00px;background:#27ae60;color:#fff"><div class="s1">A</div><div class="s2">A</div></div>
<div class="a cell" style="left:1539.44px;top:830.00px;width:60.42px;height:61.00px;background:#27ae60;color:#fff"><div class="s1">A</div><div class="s2">A</div></div>
<div class="a cell" style="left:1720.70px;top:830.00px;width:60.42px;height:61.00px;background:#27ae60;color:#fff"><div class="s1">A</div><div class="s2">A</div></div>
<div class="a cell" style="left:1781.12px;top:830.00px;width:60.42px;height:61.00px;background:#27ae60;color:#fff"><div class="s1">A</div><div class="s2">A</div></div>
<div class="a cell" style="left:1841.54px;top:830.00px;width:60.42px;height:61.00px;background:#27ae60;color:#fff"><div class="s1">A</div><div class="s2">A</div></div>
<div class="a cell" style="left:1901.96px;top:830.00px;width:60.42px;height:61.00px;background:#27ae60;color:#fff"><div class="s1">A</div><div class="s2">A</div></div>
<div class="a cell" style="left:1962.38px;top:830.00px;width:60.42px;height:61.00px;background:#27ae60;color:#fff"><div class="s1">A</div><div class="s2">A</div></div>
<div class="a cell" style="left:2143.64px;top:830.00px;width:60.42px;height:61.00px;background:#27ae60;color:#fff"><div class="s1">A</div><div class="s2">A</div></div>
<div class="a cell" style="left:2204.06px;top:830.00px;width:60.42px;height:61.00px;background:#27ae60;color:#fff"><div class="s1">A</div><div class="s2">A</div></div>
<div class="a cell" style="left:2264.48px;top:830.00px;width:60.42px;height:61.00px;background:#27ae60;color:#fff"><div class="s1">A</div><div class="s2">A</div></div>
<div class="a cell" style="left:2324.90px;top:830.00px;width:60.42px;height:61.00px;background:#27ae60;color:#fff"><div class="s1">A</div><div class="s2">A</div></div>
<div class="a cell" style="left:2385.32px;top:830.00px;width:60.42px;height:61.00px;background:#27ae60;color:#fff"><div class="s1">A</div><div class="s2">A</div></div>
<div class="a" style="left:33.00px;top:890.00px;width:782.40px;height:1.00px;background:#f3f3f3"></div>
<div class="a" style="left:814.40px;top:890.00px;width:61.42px;height:1.00px;background:#f3f3f3"></div>
<div class="a" style="left:1176.92px;top:890.00px;width:121.84px;height:1.00px;background:#f3f3f3"></div>
<div class="a" style="left:1599.86px;top:890.00px;width:121.84px;height:1.00px;background:#f3f3f3"></div>
<div class="a" style="left:2022.80px;top:890.00px;width:121.84px;height:1.00px;background:#f3f3f3"></div>
<div class="a" style="left:2445.74px;top:890.00px;width:61.42px;height:1.00px;background:#f3f3f3"></div>
<div class="a" style="left:2506.16px;top:890.00px;width:20.84px;height:1.00px;background:#f3f3f3"></div>
<div class="a" style="left:875.82px;top:890.00px;width:301.10px;height:1.00px;background:rgba(255,255,255,.42)"></div>
<div class="a" style="left:1298.76px;top:890.00px;width:301.10px;height:1.00px;background:rgba(255,255,255,.42)"></div>
<div class="a" style="left:1721.70px;top:890.00px;width:301.10px;height:1.00px;background:rgba(255,255,255,.42)"></div>
<div class="a" style="left:2144.64px;top:890.00px;width:301.10px;height:1.00px;background:rgba(255,255,255,.42)"></div>
<svg class="a" style="left:44.60px;top:838.00px;" width="42" height="42" viewBox="0 0 42 42"><defs><clipPath id="c7"><circle cx="21" cy="21" r="21"/></clipPath></defs><g clip-path="url(#c7)"><linearGradient id="bga6" x1="0" y1="0" x2="1" y2="0"><stop offset="0" stop-color="#f0f0f0"/><stop offset="1" stop-color="#d8d8d8"/></linearGradient><rect width="42" height="42" fill="url(#bga6)"/><rect x="32" y="6" width="10" height="30" fill="#ececec"/><path d="M6 32 C3 18 8 4 20 4 C33 4 38 18 35 32 Z" fill="#c69a5c"/><path d="M-1 42 C0 31 5 29 20 29 C35 29 40 31 41 42 Z" fill="#f2ede5"/><ellipse cx="20.5" cy="17" rx="7.6" ry="9.6" fill="#e9c4ab"/><rect x="17.3" y="23.6" width="6.4" height="6" fill="#e9c4ab"/><path d="M12.5 13 C14 5 28 5 28.5 13 C26 8.5 16 8.5 12.5 13 Z" fill="#c9a065"/></g><circle cx="21" cy="21" r="20.6" fill="none" stroke="rgba(0,0,0,.12)" stroke-width="0.8"/></svg>
<div class="t " style="left:98.60px;top:851.11px;font-size:18.06px;line-height:18.06px;color:#0b5cab;font-weight:400;font-style:normal;">Edna Frank</div>
<div class="t " style="left:288.00px;top:840.14px;font-size:18.5px;line-height:18.5px;color:#0b5cab;font-weight:400;font-style:normal;letter-spacing:0.35px">(650) 867-7686</div>
<svg class="a" style="left:530.40px;top:842.60px;" width="20.2" height="15" viewBox="0 0 20.2 15"><path d="M0 1.5 Q0 0 1.5 0 H18.7 Q20.2 0 20.2 1.5 V13.5 Q20.2 15 18.7 15 H1.5 Q0 15 0 13.5 Z" fill="#777"/><path d="M0.5 1 L10.1 9.2 L19.7 1" fill="none" stroke="#fff" stroke-width="1.5"/></svg>
<div class="t " style="left:556.80px;top:840.51px;font-size:18.06px;line-height:18.06px;color:#0b5cab;font-weight:400;font-style:normal;">efrank@genepoint.com</div>
<div class="a" style="left:814.40px;top:891.00px;width:60.42px;height:60.00px;background:#fafafa"></div>
<div class="a" style="left:1176.92px;top:891.00px;width:60.42px;height:60.00px;background:#fafafa"></div>
<div class="a" style="left:1237.34px;top:891.00px;width:60.42px;height:60.00px;background:#fafafa"></div>
<div class="a" style="left:1599.86px;top:891.00px;width:60.42px;height:60.00px;background:#fafafa"></div>
<div class="a" style="left:1660.28px;top:891.00px;width:60.42px;height:60.00px;background:#fafafa"></div>
<div class="a" style="left:2022.80px;top:891.00px;width:60.42px;height:60.00px;background:#fafafa"></div>
<div class="a" style="left:2083.22px;top:891.00px;width:60.42px;height:60.00px;background:#fafafa"></div>
<div class="a" style="left:2445.74px;top:891.00px;width:60.42px;height:60.00px;background:#fafafa"></div>
<div class="a" style="left:814.40px;top:920.00px;width:1691.76px;height:1.00px;background:#f2f2f2"></div>
<div class="a cell" style="left:874.82px;top:891.00px;width:60.42px;height:61.00px;background:#9b59b6;color:#fff"><div class="s1">S</div><div class="s2">S</div></div>
<div class="a cell" style="left:935.24px;top:891.00px;width:60.42px;height:61.00px;background:#9b59b6;color:#fff"><div class="s1">S</div><div class="s2">S</div></div>
<div class="a cell" style="left:995.66px;top:891.00px;width:60.42px;height:61.00px;background:#9b59b6;color:#fff"><div class="s1">S</div><div class="s2">S</div></div>
<div class="a cell" style="left:1056.08px;top:891.00px;width:60.42px;height:61.00px;background:#9b59b6;color:#fff"><div class="s1">S</div><div class="s2">S</div></div>
<div class="a cell" style="left:1116.50px;top:891.00px;width:60.42px;height:61.00px;background:#9b59b6;color:#fff"><div class="s1">S</div><div class="s2">S</div></div>
<div class="a cell" style="left:1297.76px;top:891.00px;width:60.42px;height:61.00px;background:#27ae60;color:#fff"><div class="s1">A</div><div class="s2">A</div></div>
<div class="a cell" style="left:1358.18px;top:891.00px;width:60.42px;height:61.00px;background:#27ae60;color:#fff"><div class="s1">A</div><div class="s2">A</div></div>
<div class="a cell" style="left:1418.60px;top:891.00px;width:60.42px;height:61.00px;background:#27ae60;color:#fff"><div class="s1">A</div><div class="s2">A</div></div>
<div class="a cell" style="left:1479.02px;top:891.00px;width:60.42px;height:61.00px;background:#27ae60;color:#fff"><div class="s1">A</div><div class="s2">A</div></div>
<div class="a cell" style="left:1539.44px;top:891.00px;width:60.42px;height:61.00px;background:#27ae60;color:#fff"><div class="s1">A</div><div class="s2">A</div></div>
<div class="a cell" style="left:1720.70px;top:891.00px;width:60.42px;height:61.00px;background:#27ae60;color:#fff"><div class="s1">A</div><div class="s2">A</div></div>
<div class="a cell" style="left:1781.12px;top:891.00px;width:60.42px;height:61.00px;background:#27ae60;color:#fff"><div class="s1">A</div><div class="s2">A</div></div>
<div class="a cell" style="left:1841.54px;top:891.00px;width:60.42px;height:61.00px;background:#27ae60;color:#fff"><div class="s1">A</div><div class="s2">A</div></div>
<div class="a cell" style="left:1901.96px;top:891.00px;width:60.42px;height:61.00px;background:#27ae60;color:#fff"><div class="s1">A</div><div class="s2">A</div></div>
<div class="a cell" style="left:1962.38px;top:891.00px;width:60.42px;height:61.00px;background:#27ae60;color:#fff"><div class="s1">A</div><div class="s2">A</div></div>
<div class="a cell" style="left:2143.64px;top:891.00px;width:60.42px;height:61.00px;background:#27ae60;color:#fff"><div class="s1">A</div><div class="s2">A</div></div>
<div class="a cell" style="left:2204.06px;top:891.00px;width:60.42px;height:61.00px;background:#27ae60;color:#fff"><div class="s1">A</div><div class="s2">A</div></div>
<div class="a cell" style="left:2264.48px;top:891.00px;width:60.42px;height:61.00px;background:#27ae60;color:#fff"><div class="s1">A</div><div class="s2">A</div></div>
<div class="a cell" style="left:2324.90px;top:891.00px;width:60.42px;height:61.00px;background:#27ae60;color:#fff"><div class="s1">A</div><div class="s2">A</div></div>
<div class="a cell" style="left:2385.32px;top:891.00px;width:60.42px;height:61.00px;background:#27ae60;color:#fff"><div class="s1">A</div><div class="s2">A</div></div>
<div class="a" style="left:33.00px;top:951.00px;width:782.40px;height:1.00px;background:#f3f3f3"></div>
<div class="a" style="left:814.40px;top:951.00px;width:61.42px;height:1.00px;background:#f3f3f3"></div>
<div class="a" style="left:1176.92px;top:951.00px;width:121.84px;height:1.00px;background:#f3f3f3"></div>
<div class="a" style="left:1599.86px;top:951.00px;width:121.84px;height:1.00px;background:#f3f3f3"></div>
<div class="a" style="left:2022.80px;top:951.00px;width:121.84px;height:1.00px;background:#f3f3f3"></div>
<div class="a" style="left:2445.74px;top:951.00px;width:61.42px;height:1.00px;background:#f3f3f3"></div>
<div class="a" style="left:2506.16px;top:951.00px;width:20.84px;height:1.00px;background:#f3f3f3"></div>
<div class="a" style="left:875.82px;top:951.00px;width:301.10px;height:1.00px;background:rgba(255,255,255,.42)"></div>
<div class="a" style="left:1298.76px;top:951.00px;width:301.10px;height:1.00px;background:rgba(255,255,255,.42)"></div>
<div class="a" style="left:1721.70px;top:951.00px;width:301.10px;height:1.00px;background:rgba(255,255,255,.42)"></div>
<div class="a" style="left:2144.64px;top:951.00px;width:301.10px;height:1.00px;background:rgba(255,255,255,.42)"></div>
<svg class="a" style="left:44.60px;top:899.00px;" width="42" height="42" viewBox="0 0 42 42"><defs><clipPath id="c8"><circle cx="21" cy="21" r="21"/></clipPath></defs><g clip-path="url(#c8)"><rect width="42" height="42" fill="#262626"/><path d="M-1 42 C0 31 5 29 21 29 C37 29 42 31 43 42 Z" fill="#8f8474"/><path d="M14 42 L15 29 L27 29 L28 42 Z" fill="#151515"/><ellipse cx="21" cy="15.5" rx="7.4" ry="9.4" fill="#b58469"/><rect x="17.8" y="21.9" width="6.4" height="6" fill="#b58469"/><path d="M13.6 11.5 C13 3.5 29 3.5 28.4 11.5 C26.5 7 15.5 7 13.6 11.5 Z" fill="#141010"/></g><circle cx="21" cy="21" r="20.6" fill="none" stroke="rgba(0,0,0,.12)" stroke-width="0.8"/></svg>
<div class="t " style="left:98.60px;top:912.11px;font-size:18.06px;line-height:18.06px;color:#0b5cab;font-weight:400;font-style:normal;">Jack Rogers</div>
<div class="t " style="left:288.00px;top:901.14px;font-size:18.5px;line-height:18.5px;color:#0b5cab;font-weight:400;font-style:normal;letter-spacing:0.35px">+44771-882-8372</div>
<svg class="a" style="left:530.40px;top:903.60px;" width="20.2" height="15" viewBox="0 0 20.2 15"><path d="M0 1.5 Q0 0 1.5 0 H18.7 Q20.2 0 20.2 1.5 V13.5 Q20.2 15 18.7 15 H1.5 Q0 15 0 13.5 Z" fill="#777"/><path d="M0.5 1 L10.1 9.2 L19.7 1" fill="none" stroke="#fff" stroke-width="1.5"/></svg>
<div class="t " style="left:556.80px;top:901.51px;font-size:18.06px;line-height:18.06px;color:#0b5cab;font-weight:400;font-style:normal;">jrogers@burlington.com</div>
<div class="a" style="left:814.40px;top:952.00px;width:60.42px;height:60.00px;background:#fafafa"></div>
<div class="a" style="left:1176.92px;top:952.00px;width:60.42px;height:60.00px;background:#fafafa"></div>
<div class="a" style="left:1237.34px;top:952.00px;width:60.42px;height:60.00px;background:#fafafa"></div>
<div class="a" style="left:1599.86px;top:952.00px;width:60.42px;height:60.00px;background:#fafafa"></div>
<div class="a" style="left:1660.28px;top:952.00px;width:60.42px;height:60.00px;background:#fafafa"></div>
<div class="a" style="left:2022.80px;top:952.00px;width:60.42px;height:60.00px;background:#fafafa"></div>
<div class="a" style="left:2083.22px;top:952.00px;width:60.42px;height:60.00px;background:#fafafa"></div>
<div class="a" style="left:2445.74px;top:952.00px;width:60.42px;height:60.00px;background:#fafafa"></div>
<div class="a" style="left:814.40px;top:981.00px;width:1691.76px;height:1.00px;background:#f2f2f2"></div>
<div class="a cell" style="left:874.82px;top:952.00px;width:60.42px;height:61.00px;background:#27ae60;color:#fff"><div class="s1">A</div><div class="s2">A</div></div>
<div class="a cell" style="left:935.24px;top:952.00px;width:60.42px;height:61.00px;background:#27ae60;color:#fff"><div class="s1">A</div><div class="s2">A</div></div>
<div class="a cell" style="left:995.66px;top:952.00px;width:60.42px;height:61.00px;background:#27ae60;color:#fff"><div class="s1">A</div><div class="s2">A</div></div>
<div class="a cell" style="left:1056.08px;top:952.00px;width:60.42px;height:61.00px;background:#27ae60;color:#fff"><div class="s1">A</div><div class="s2">A</div></div>
<div class="a cell" style="left:1116.50px;top:952.00px;width:60.42px;height:61.00px;background:#27ae60;color:#fff"><div class="s1">A</div><div class="s2">A</div></div>
<div class="a cell" style="left:1297.76px;top:952.00px;width:60.42px;height:61.00px;background:#27ae60;color:#fff"><div class="s1">A</div><div class="s2">A</div></div>
<div class="a cell" style="left:1358.18px;top:952.00px;width:60.42px;height:61.00px;background:#27ae60;color:#fff"><div class="s1">A</div><div class="s2">A</div></div>
<div class="a cell" style="left:1418.60px;top:952.00px;width:60.42px;height:61.00px;background:#27ae60;color:#fff"><div class="s1">A</div><div class="s2">A</div></div>
<div class="a cell" style="left:1479.02px;top:952.00px;width:60.42px;height:61.00px;background:#27ae60;color:#fff"><div class="s1">A</div><div class="s2">A</div></div>
<div class="a cell" style="left:1539.44px;top:952.00px;width:60.42px;height:61.00px;background:#27ae60;color:#fff"><div class="s1">A</div><div class="s2">A</div></div>
<div class="a cell" style="left:1720.70px;top:952.00px;width:60.42px;height:61.00px;background:#27ae60;color:#fff"><div class="s1">A</div><div class="s2">A</div></div>
<div class="a cell" style="left:1781.12px;top:952.00px;width:60.42px;height:61.00px;background:#27ae60;color:#fff"><div class="s1">A</div><div class="s2">A</div></div>
<div class="a cell" style="left:1841.54px;top:952.00px;width:60.42px;height:61.00px;background:#27ae60;color:#fff"><div class="s1">A</div><div class="s2">A</div></div>
<div class="a cell" style="left:1901.96px;top:952.00px;width:60.42px;height:61.00px;background:#27ae60;color:#fff"><div class="s1">A</div><div class="s2">A</div></div>
<div class="a cell" style="left:1962.38px;top:952.00px;width:60.42px;height:61.00px;background:#27ae60;color:#fff"><div class="s1">A</div><div class="s2">A</div></div>
<div class="a cell" style="left:2143.64px;top:952.00px;width:60.42px;height:61.00px;background:#27ae60;color:#fff"><div class="s1">A</div><div class="s2">A</div></div>
<div class="a cell" style="left:2204.06px;top:952.00px;width:60.42px;height:61.00px;background:#27ae60;color:#fff"><div class="s1">A</div><div class="s2">A</div></div>
<div class="a cell" style="left:2264.48px;top:952.00px;width:60.42px;height:61.00px;background:#27ae60;color:#fff"><div class="s1">A</div><div class="s2">A</div></div>
<div class="a cell" style="left:2324.90px;top:952.00px;width:60.42px;height:61.00px;background:#27ae60;color:#fff"><div class="s1">A</div><div class="s2">A</div></div>
<div class="a cell" style="left:2385.32px;top:952.00px;width:60.42px;height:61.00px;background:#27ae60;color:#fff"><div class="s1">A</div><div class="s2">A</div></div>
<div class="a" style="left:33.00px;top:1012.00px;width:782.40px;height:1.00px;background:#f3f3f3"></div>
<div class="a" style="left:814.40px;top:1012.00px;width:61.42px;height:1.00px;background:#f3f3f3"></div>
<div class="a" style="left:1176.92px;top:1012.00px;width:121.84px;height:1.00px;background:#f3f3f3"></div>
<div class="a" style="left:1599.86px;top:1012.00px;width:121.84px;height:1.00px;background:#f3f3f3"></div>
<div class="a" style="left:2022.80px;top:1012.00px;width:121.84px;height:1.00px;background:#f3f3f3"></div>
<div class="a" style="left:2445.74px;top:1012.00px;width:61.42px;height:1.00px;background:#f3f3f3"></div>
<div class="a" style="left:2506.16px;top:1012.00px;width:20.84px;height:1.00px;background:#f3f3f3"></div>
<div class="a" style="left:875.82px;top:1012.00px;width:301.10px;height:1.00px;background:rgba(255,255,255,.42)"></div>
<div class="a" style="left:1298.76px;top:1012.00px;width:301.10px;height:1.00px;background:rgba(255,255,255,.42)"></div>
<div class="a" style="left:1721.70px;top:1012.00px;width:301.10px;height:1.00px;background:rgba(255,255,255,.42)"></div>
<div class="a" style="left:2144.64px;top:1012.00px;width:301.10px;height:1.00px;background:rgba(255,255,255,.42)"></div>
<svg class="a" style="left:44.60px;top:960.00px;" width="42" height="42" viewBox="0 0 42 42"><defs><clipPath id="c9"><circle cx="21" cy="21" r="21"/></clipPath></defs><g clip-path="url(#c9)"><linearGradient id="bga8" x1="0" y1="0" x2="1" y2="0"><stop offset="0" stop-color="#c0c8ce"/><stop offset="1" stop-color="#7f8f9a"/></linearGradient><rect width="42" height="42" fill="url(#bga8)"/><rect x="2" y="10" width="7" height="18" fill="#dfe6ea"/><rect x="31" y="12" width="8" height="16" fill="#d0d8dc"/><path d="M-1 42 C0 31 5 29 21 29 C37 29 42 31 43 42 Z" fill="#1f386a"/><path d="M15 42 L16 29 L26 29 L27 42 Z" fill="#f0eef0"/><ellipse cx="21" cy="15.8" rx="7.4" ry="9.4" fill="#c39479"/><rect x="17.8" y="22.200000000000003" width="6.4" height="6" fill="#c39479"/><path d="M13.6 12 C13 4 29 4 28.4 12 C27 7.5 15 7.5 13.6 12 Z" fill="#4a3a30"/><path d="M14.5 20.5 Q21 28.5 27.5 20.5 L27 23.5 Q21 28 15 23.5 Z" fill="#9a8f88"/></g><circle cx="21" cy="21" r="20.6" fill="none" stroke="rgba(0,0,0,.12)" stroke-width="0.8"/></svg>
<div class="t " style="left:98.60px;top:973.11px;font-size:18.06px;line-height:18.06px;color:#0b5cab;font-weight:400;font-style:normal;">Jake Llorrac</div>
<div class="a" style="left:814.40px;top:1013.00px;width:60.42px;height:61.00px;background:#fafafa"></div>
<div class="a" style="left:1176.92px;top:1013.00px;width:60.42px;height:61.00px;background:#fafafa"></div>
<div class="a" style="left:1237.34px;top:1013.00px;width:60.42px;height:61.00px;background:#fafafa"></div>
<div class="a" style="left:1599.86px;top:1013.00px;width:60.42px;height:61.00px;background:#fafafa"></div>
<div class="a" style="left:1660.28px;top:1013.00px;width:60.42px;height:61.00px;background:#fafafa"></div>
<div class="a" style="left:2022.80px;top:1013.00px;width:60.42px;height:61.00px;background:#fafafa"></div>
<div class="a" style="left:2083.22px;top:1013.00px;width:60.42px;height:61.00px;background:#fafafa"></div>
<div class="a" style="left:2445.74px;top:1013.00px;width:60.42px;height:61.00px;background:#fafafa"></div>
<div class="a" style="left:814.40px;top:1042.00px;width:1691.76px;height:1.00px;background:#f2f2f2"></div>
<div class="a cell" style="left:874.82px;top:1013.00px;width:60.42px;height:62.00px;background:#27ae60;color:#fff"><div class="s1">A</div><div class="s2">A</div></div>
<div class="a cell" style="left:935.24px;top:1013.00px;width:60.42px;height:62.00px;background:#27ae60;color:#fff"><div class="s1">A</div><div class="s2">A</div></div>
<div class="a cell" style="left:995.66px;top:1013.00px;width:60.42px;height:62.00px;background:#27ae60;color:#fff"><div class="s1">A</div><div class="s2">A</div></div>
<div class="a cell" style="left:1056.08px;top:1013.00px;width:60.42px;height:62.00px;background:#27ae60;color:#fff"><div class="s1">A</div><div class="s2">A</div></div>
<div class="a cell" style="left:1116.50px;top:1013.00px;width:60.42px;height:62.00px;background:#27ae60;color:#fff"><div class="s1">A</div><div class="s2">A</div></div>
<div class="a cell" style="left:1297.76px;top:1013.00px;width:60.42px;height:62.00px;background:#27ae60;color:#fff"><div class="s1">A</div><div class="s2">A</div></div>
<div class="a cell" style="left:1358.18px;top:1013.00px;width:60.42px;height:62.00px;background:#27ae60;color:#fff"><div class="s1">A</div><div class="s2">A</div></div>
<div class="a cell" style="left:1418.60px;top:1013.00px;width:60.42px;height:62.00px;background:#27ae60;color:#fff"><div class="s1">A</div><div class="s2">A</div></div>
<div class="a cell" style="left:1479.02px;top:1013.00px;width:60.42px;height:62.00px;background:#27ae60;color:#fff"><div class="s1">A</div><div class="s2">A</div></div>
<div class="a cell" style="left:1539.44px;top:1013.00px;width:60.42px;height:62.00px;background:#27ae60;color:#fff"><div class="s1">A</div><div class="s2">A</div></div>
<div class="a cell" style="left:1720.70px;top:1013.00px;width:60.42px;height:62.00px;background:#27ae60;color:#fff"><div class="s1">A</div><div class="s2">A</div></div>
<div class="a cell" style="left:1781.12px;top:1013.00px;width:60.42px;height:62.00px;background:#27ae60;color:#fff"><div class="s1">A</div><div class="s2">A</div></div>
<div class="a cell" style="left:1841.54px;top:1013.00px;width:60.42px;height:62.00px;background:#27ae60;color:#fff"><div class="s1">A</div><div class="s2">A</div></div>
<div class="a cell" style="left:1901.96px;top:1013.00px;width:60.42px;height:62.00px;background:#27ae60;color:#fff"><div class="s1">A</div><div class="s2">A</div></div>
<div class="a cell" style="left:1962.38px;top:1013.00px;width:60.42px;height:62.00px;background:#27ae60;color:#fff"><div class="s1">A</div><div class="s2">A</div></div>
<div class="a cell" style="left:2143.64px;top:1013.00px;width:60.42px;height:62.00px;background:#27ae60;color:#fff"><div class="s1">A</div><div class="s2">A</div></div>
<div class="a cell" style="left:2204.06px;top:1013.00px;width:60.42px;height:62.00px;background:#27ae60;color:#fff"><div class="s1">A</div><div class="s2">A</div></div>
<div class="a cell" style="left:2264.48px;top:1013.00px;width:60.42px;height:62.00px;background:#27ae60;color:#fff"><div class="s1">A</div><div class="s2">A</div></div>
<div class="a cell" style="left:2324.90px;top:1013.00px;width:60.42px;height:62.00px;background:#27ae60;color:#fff"><div class="s1">A</div><div class="s2">A</div></div>
<div class="a cell" style="left:2385.32px;top:1013.00px;width:60.42px;height:62.00px;background:#27ae60;color:#fff"><div class="s1">A</div><div class="s2">A</div></div>
<div class="a" style="left:33.00px;top:1074.00px;width:782.40px;height:1.00px;background:#f3f3f3"></div>
<div class="a" style="left:814.40px;top:1074.00px;width:61.42px;height:1.00px;background:#f3f3f3"></div>
<div class="a" style="left:1176.92px;top:1074.00px;width:121.84px;height:1.00px;background:#f3f3f3"></div>
<div class="a" style="left:1599.86px;top:1074.00px;width:121.84px;height:1.00px;background:#f3f3f3"></div>
<div class="a" style="left:2022.80px;top:1074.00px;width:121.84px;height:1.00px;background:#f3f3f3"></div>
<div class="a" style="left:2445.74px;top:1074.00px;width:61.42px;height:1.00px;background:#f3f3f3"></div>
<div class="a" style="left:2506.16px;top:1074.00px;width:20.84px;height:1.00px;background:#f3f3f3"></div>
<div class="a" style="left:875.82px;top:1074.00px;width:301.10px;height:1.00px;background:rgba(255,255,255,.42)"></div>
<div class="a" style="left:1298.76px;top:1074.00px;width:301.10px;height:1.00px;background:rgba(255,255,255,.42)"></div>
<div class="a" style="left:1721.70px;top:1074.00px;width:301.10px;height:1.00px;background:rgba(255,255,255,.42)"></div>
<div class="a" style="left:2144.64px;top:1074.00px;width:301.10px;height:1.00px;background:rgba(255,255,255,.42)"></div>
<svg class="a" style="left:44.60px;top:1021.50px;" width="42" height="42" viewBox="0 0 42 42"><defs><clipPath id="c10"><circle cx="21" cy="21" r="21"/></clipPath></defs><g clip-path="url(#c10)"><rect width="42" height="42" fill="#36465c"/><rect x="0" width="7" height="42" fill="#9aa2ac"/><rect x="33" width="9" height="42" fill="#6a7d96"/><path d="M12 25 C10 10 13 3 21 3 C29 3 32 10 30 25 Z" fill="#1e1612"/><path d="M2 42 C3 25 8 23 20 23 C32 23 37 25 38 42 Z" fill="#cf5f2c"/><ellipse cx="21" cy="14" rx="6.4" ry="8" fill="#e2b28f"/><rect x="17.8" y="19" width="6.4" height="6" fill="#e2b28f"/><path d="M14.6 11 C15 5.5 27 5.5 27.4 11 C25 8 17 8 14.6 11 Z" fill="#1e1612"/></g><circle cx="21" cy="21" r="20.6" fill="none" stroke="rgba(0,0,0,.12)" stroke-width="0.8"/></svg>
<div class="t " style="left:98.60px;top:1034.61px;font-size:18.06px;line-height:18.06px;color:#0b5cab;font-weight:400;font-style:normal;">Jane Grey</div>
<div class="t " style="left:288.00px;top:1023.14px;font-size:18.5px;line-height:18.5px;color:#0b5cab;font-weight:400;font-style:normal;letter-spacing:0.35px">(520) 773-4539</div>
<svg class="a" style="left:530.40px;top:1025.60px;" width="20.2" height="15" viewBox="0 0 20.2 15"><path d="M0 1.5 Q0 0 1.5 0 H18.7 Q20.2 0 20.2 1.5 V13.5 Q20.2 15 18.7 15 H1.5 Q0 15 0 13.5 Z" fill="#777"/><path d="M0.5 1 L10.1 9.2 L19.7 1" fill="none" stroke="#fff" stroke-width="1.5"/></svg>
<div class="t " style="left:556.80px;top:1023.51px;font-size:18.06px;line-height:18.06px;color:#0b5cab;font-weight:400;font-style:normal;">jane_gray@uoa.edu</div>
<div class="a" style="left:814.40px;top:1075.00px;width:60.42px;height:60.00px;background:#fafafa"></div>
<div class="a" style="left:1176.92px;top:1075.00px;width:60.42px;height:60.00px;background:#fafafa"></div>
<div class="a" style="left:1237.34px;top:1075.00px;width:60.42px;height:60.00px;background:#fafafa"></div>
<div class="a" style="left:1599.86px;top:1075.00px;width:60.42px;height:60.00px;background:#fafafa"></div>
<div class="a" style="left:1660.28px;top:1075.00px;width:60.42px;height:60.00px;background:#fafafa"></div>
<div class="a" style="left:2022.80px;top:1075.00px;width:60.42px;height:60.00px;background:#fafafa"></div>
<div class="a" style="left:2083.22px;top:1075.00px;width:60.42px;height:60.00px;background:#fafafa"></div>
<div class="a" style="left:2445.74px;top:1075.00px;width:60.42px;height:60.00px;background:#fafafa"></div>
<div class="a" style="left:814.40px;top:1104.00px;width:1691.76px;height:1.00px;background:#f2f2f2"></div>
<div class="a cell" style="left:874.82px;top:1075.00px;width:60.42px;height:61.00px;background:#27ae60;color:#fff"><div class="s1">A</div><div class="s2">A</div></div>
<div class="a cell" style="left:935.24px;top:1075.00px;width:60.42px;height:61.00px;background:#27ae60;color:#fff"><div class="s1">A</div><div class="s2">A</div></div>
<div class="a cell" style="left:995.66px;top:1075.00px;width:60.42px;height:61.00px;background:#27ae60;color:#fff"><div class="s1">A</div><div class="s2">A</div></div>
<div class="a cell" style="left:1056.08px;top:1075.00px;width:60.42px;height:61.00px;background:#27ae60;color:#fff"><div class="s1">A</div><div class="s2">A</div></div>
<div class="a cell" style="left:1116.50px;top:1075.00px;width:60.42px;height:61.00px;background:#27ae60;color:#fff"><div class="s1">A</div><div class="s2">A</div></div>
<div class="a cell" style="left:1297.76px;top:1075.00px;width:60.42px;height:61.00px;background:#27ae60;color:#fff"><div class="s1">A</div><div class="s2">A</div></div>
<div class="a cell" style="left:1358.18px;top:1075.00px;width:60.42px;height:61.00px;background:#27ae60;color:#fff"><div class="s1">A</div><div class="s2">A</div></div>
<div class="a cell" style="left:1418.60px;top:1075.00px;width:60.42px;height:61.00px;background:#27ae60;color:#fff"><div class="s1">A</div><div class="s2">A</div></div>
<div class="a cell" style="left:1479.02px;top:1075.00px;width:60.42px;height:61.00px;background:#27ae60;color:#fff"><div class="s1">A</div><div class="s2">A</div></div>
<div class="a cell" style="left:1539.44px;top:1075.00px;width:60.42px;height:61.00px;background:#27ae60;color:#fff"><div class="s1">A</div><div class="s2">A</div></div>
<div class="a cell" style="left:1720.70px;top:1075.00px;width:60.42px;height:61.00px;background:#27ae60;color:#fff"><div class="s1">A</div><div class="s2">A</div></div>
<div class="a cell" style="left:1781.12px;top:1075.00px;width:60.42px;height:61.00px;background:#27ae60;color:#fff"><div class="s1">A</div><div class="s2">A</div></div>
<div class="a cell" style="left:1841.54px;top:1075.00px;width:60.42px;height:61.00px;background:#27ae60;color:#fff"><div class="s1">A</div><div class="s2">A</div></div>
<div class="a cell" style="left:1901.96px;top:1075.00px;width:60.42px;height:61.00px;background:#27ae60;color:#fff"><div class="s1">A</div><div class="s2">A</div></div>
<div class="a cell" style="left:1962.38px;top:1075.00px;width:60.42px;height:61.00px;background:#27ae60;color:#fff"><div class="s1">A</div><div class="s2">A</div></div>
<div class="a cell" style="left:2143.64px;top:1075.00px;width:60.42px;height:61.00px;background:#27ae60;color:#fff"><div class="s1">A</div><div class="s2">A</div></div>
<div class="a cell" style="left:2204.06px;top:1075.00px;width:60.42px;height:61.00px;background:#27ae60;color:#fff"><div class="s1">A</div><div class="s2">A</div></div>
<div class="a cell" style="left:2264.48px;top:1075.00px;width:60.42px;height:61.00px;background:#27ae60;color:#fff"><div class="s1">A</div><div class="s2">A</div></div>
<div class="a cell" style="left:2324.90px;top:1075.00px;width:60.42px;height:61.00px;background:#27ae60;color:#fff"><div class="s1">A</div><div class="s2">A</div></div>
<div class="a cell" style="left:2385.32px;top:1075.00px;width:60.42px;height:61.00px;background:#27ae60;color:#fff"><div class="s1">A</div><div class="s2">A</div></div>
<div class="a" style="left:33.00px;top:1135.00px;width:782.40px;height:1.00px;background:#f3f3f3"></div>
<div class="a" style="left:814.40px;top:1135.00px;width:61.42px;height:1.00px;background:#f3f3f3"></div>
<div class="a" style="left:1176.92px;top:1135.00px;width:121.84px;height:1.00px;background:#f3f3f3"></div>
<div class="a" style="left:1599.86px;top:1135.00px;width:121.84px;height:1.00px;background:#f3f3f3"></div>
<div class="a" style="left:2022.80px;top:1135.00px;width:121.84px;height:1.00px;background:#f3f3f3"></div>
<div class="a" style="left:2445.74px;top:1135.00px;width:61.42px;height:1.00px;background:#f3f3f3"></div>
<div class="a" style="left:2506.16px;top:1135.00px;width:20.84px;height:1.00px;background:#f3f3f3"></div>
<div class="a" style="left:875.82px;top:1135.00px;width:301.10px;height:1.00px;background:rgba(255,255,255,.42)"></div>
<div class="a" style="left:1298.76px;top:1135.00px;width:301.10px;height:1.00px;background:rgba(255,255,255,.42)"></div>
<div class="a" style="left:1721.70px;top:1135.00px;width:301.10px;height:1.00px;background:rgba(255,255,255,.42)"></div>
<div class="a" style="left:2144.64px;top:1135.00px;width:301.10px;height:1.00px;background:rgba(255,255,255,.42)"></div>
<svg class="a" style="left:44.60px;top:1083.00px;" width="42" height="42" viewBox="0 0 42 42"><defs><clipPath id="c11"><circle cx="21" cy="21" r="21"/></clipPath></defs><g clip-path="url(#c11)"><linearGradient id="bga10" x1="0" y1="0" x2="0" y2="1"><stop offset="0" stop-color="#c4c4c4"/><stop offset="1" stop-color="#777777"/></linearGradient><rect width="42" height="42" fill="url(#bga10)"/><path d="M-1 42 C0 32 5 30 21 30 C37 30 42 32 43 42 Z" fill="#26396b"/><path d="M15 42 L16 30 L26 30 L27 42 Z" fill="#f4f2f4"/><ellipse cx="21" cy="17" rx="8.2" ry="10" fill="#e3b9a0"/><rect x="17.8" y="24" width="6.4" height="6" fill="#e3b9a0"/><path d="M12.6 13 C11.5 2.5 30.5 2.5 29.4 13 C28 7.5 14 7.5 12.6 13 Z" fill="#2b211b"/></g><circle cx="21" cy="21" r="20.6" fill="none" stroke="rgba(0,0,0,.12)" stroke-width="0.8"/></svg>
<div class="t " style="left:98.60px;top:1096.11px;font-size:18.06px;line-height:18.06px;color:#0b5cab;font-weight:400;font-style:normal;">John Bond</div>
<div class="t " style="left:288.00px;top:1085.14px;font-size:18.5px;line-height:18.5px;color:#0b5cab;font-weight:400;font-style:normal;letter-spacing:0.35px">(312) 596-1563</div>
<svg class="a" style="left:530.40px;top:1087.60px;" width="20.2" height="15" viewBox="0 0 20.2 15"><path d="M0 1.5 Q0 0 1.5 0 H18.7 Q20.2 0 20.2 1.5 V13.5 Q20.2 15 18.7 15 H1.5 Q0 15 0 13.5 Z" fill="#777"/><path d="M0.5 1 L10.1 9.2 L19.7 1" fill="none" stroke="#fff" stroke-width="1.5"/></svg>
<div class="t " style="left:556.80px;top:1085.51px;font-size:18.06px;line-height:18.06px;color:#0b5cab;font-weight:400;font-style:normal;">bond_john@grandhotels.com</div>
<div class="a" style="left:814.40px;top:1136.00px;width:60.42px;height:60.00px;background:#fafafa"></div>
<div class="a" style="left:1176.92px;top:1136.00px;width:60.42px;height:60.00px;background:#fafafa"></div>
<div class="a" style="left:1237.34px;top:1136.00px;width:60.42px;height:60.00px;background:#fafafa"></div>
<div class="a" style="left:1599.86px;top:1136.00px;width:60.42px;height:60.00px;background:#fafafa"></div>
<div class="a" style="left:1660.28px;top:1136.00px;width:60.42px;height:60.00px;background:#fafafa"></div>
<div class="a" style="left:2022.80px;top:1136.00px;width:60.42px;height:60.00px;background:#fafafa"></div>
<div class="a" style="left:2083.22px;top:1136.00px;width:60.42px;height:60.00px;background:#fafafa"></div>
<div class="a" style="left:2445.74px;top:1136.00px;width:60.42px;height:60.00px;background:#fafafa"></div>
<div class="a" style="left:814.40px;top:1165.00px;width:1691.76px;height:1.00px;background:#f2f2f2"></div>
<div class="a cell" style="left:874.82px;top:1136.00px;width:60.42px;height:61.00px;background:#27ae60;color:#fff"><div class="s1">A</div><div class="s2">A</div></div>
<div class="a cell" style="left:935.24px;top:1136.00px;width:60.42px;height:61.00px;background:#27ae60;color:#fff"><div class="s1">A</div><div class="s2">A</div></div>
<div class="a cell" style="left:995.66px;top:1136.00px;width:60.42px;height:61.00px;background:#27ae60;color:#fff"><div class="s1">A</div><div class="s2">A</div></div>
<div class="a cell" style="left:1056.08px;top:1136.00px;width:60.42px;height:61.00px;background:#27ae60;color:#fff"><div class="s1">A</div><div class="s2">A</div></div>
<div class="a cell" style="left:1116.50px;top:1136.00px;width:60.42px;height:61.00px;background:#27ae60;color:#fff"><div class="s1">A</div><div class="s2">A</div></div>
<div class="a cell" style="left:1297.76px;top:1136.00px;width:60.42px;height:61.00px;background:#27ae60;color:#fff"><div class="s1">A</div><div class="s2">A</div></div>
<div class="a cell" style="left:1358.18px;top:1136.00px;width:60.42px;height:61.00px;background:#27ae60;color:#fff"><div class="s1">A</div><div class="s2">A</div></div>
<div class="a cell" style="left:1418.60px;top:1136.00px;width:60.42px;height:61.00px;background:#27ae60;color:#fff"><div class="s1">A</div><div class="s2">A</div></div>
<div class="a cell" style="left:1479.02px;top:1136.00px;width:60.42px;height:61.00px;background:#27ae60;color:#fff"><div class="s1">A</div><div class="s2">A</div></div>
<div class="a cell" style="left:1539.44px;top:1136.00px;width:60.42px;height:61.00px;background:#27ae60;color:#fff"><div class="s1">A</div><div class="s2">A</div></div>
<div class="a cell" style="left:1720.70px;top:1136.00px;width:60.42px;height:61.00px;background:#27ae60;color:#fff"><div class="s1">A</div><div class="s2">A</div></div>
<div class="a cell" style="left:1781.12px;top:1136.00px;width:60.42px;height:61.00px;background:#27ae60;color:#fff"><div class="s1">A</div><div class="s2">A</div></div>
<div class="a cell" style="left:1841.54px;top:1136.00px;width:60.42px;height:61.00px;background:#27ae60;color:#fff"><div class="s1">A</div><div class="s2">A</div></div>
<div class="a cell" style="left:1901.96px;top:1136.00px;width:60.42px;height:61.00px;background:#27ae60;color:#fff"><div class="s1">A</div><div class="s2">A</div></div>
<div class="a cell" style="left:1962.38px;top:1136.00px;width:60.42px;height:61.00px;background:#27ae60;color:#fff"><div class="s1">A</div><div class="s2">A</div></div>
<div class="a cell" style="left:2143.64px;top:1136.00px;width:60.42px;height:61.00px;background:#27ae60;color:#fff"><div class="s1">A</div><div class="s2">A</div></div>
<div class="a cell" style="left:2204.06px;top:1136.00px;width:60.42px;height:61.00px;background:#27ae60;color:#fff"><div class="s1">A</div><div class="s2">A</div></div>
<div class="a cell" style="left:2264.48px;top:1136.00px;width:60.42px;height:61.00px;background:#27ae60;color:#fff"><div class="s1">A</div><div class="s2">A</div></div>
<div class="a cell" style="left:2324.90px;top:1136.00px;width:60.42px;height:61.00px;background:#27ae60;color:#fff"><div class="s1">A</div><div class="s2">A</div></div>
<div class="a cell" style="left:2385.32px;top:1136.00px;width:60.42px;height:61.00px;background:#27ae60;color:#fff"><div class="s1">A</div><div class="s2">A</div></div>
<div class="a" style="left:33.00px;top:1196.00px;width:782.40px;height:1.00px;background:#f3f3f3"></div>
<div class="a" style="left:814.40px;top:1196.00px;width:61.42px;height:1.00px;background:#f3f3f3"></div>
<div class="a" style="left:1176.92px;top:1196.00px;width:121.84px;height:1.00px;background:#f3f3f3"></div>
<div class="a" style="left:1599.86px;top:1196.00px;width:121.84px;height:1.00px;background:#f3f3f3"></div>
<div class="a" style="left:2022.80px;top:1196.00px;width:121.84px;height:1.00px;background:#f3f3f3"></div>
<div class="a" style="left:2445.74px;top:1196.00px;width:61.42px;height:1.00px;background:#f3f3f3"></div>
<div class="a" style="left:2506.16px;top:1196.00px;width:20.84px;height:1.00px;background:#f3f3f3"></div>
<div class="a" style="left:875.82px;top:1196.00px;width:301.10px;height:1.00px;background:rgba(255,255,255,.42)"></div>
<div class="a" style="left:1298.76px;top:1196.00px;width:301.10px;height:1.00px;background:rgba(255,255,255,.42)"></div>
<div class="a" style="left:1721.70px;top:1196.00px;width:301.10px;height:1.00px;background:rgba(255,255,255,.42)"></div>
<div class="a" style="left:2144.64px;top:1196.00px;width:301.10px;height:1.00px;background:rgba(255,255,255,.42)"></div>
<svg class="a" style="left:44.60px;top:1144.00px;" width="42" height="42" viewBox="0 0 42 42"><defs><clipPath id="c12"><circle cx="21" cy="21" r="21"/></clipPath></defs><g clip-path="url(#c12)"><linearGradient id="bga11" x1="0" y1="0" x2="0" y2="1"><stop offset="0" stop-color="#d8d8d8"/><stop offset="1" stop-color="#b4b4b4"/></linearGradient><rect width="42" height="42" fill="url(#bga11)"/><path d="M-1 42 C0 31 5 29 21 29 C37 29 42 31 43 42 Z" fill="#6a6a6c"/><path d="M15.5 42 L16.5 29 L25.5 29 L26.5 42 Z" fill="#f2f2f2"/><ellipse cx="21" cy="16" rx="7.2" ry="9" fill="#d8b098"/><rect x="17.8" y="22" width="6.4" height="6" fill="#d8b098"/><path d="M13.8 12 C13 4 29 4 28.2 12 C26.5 7.5 15.5 7.5 13.8 12 Z" fill="#3a2a20"/><path d="M14 18 Q21 30 28 18 L27.8 22.5 Q21 29 14.2 22.5 Z" fill="#2a1d16"/></g><circle cx="21" cy="21" r="20.6" fill="none" stroke="rgba(0,0,0,.12)" stroke-width="0.8"/></svg>
<div class="t " style="left:98.60px;top:1157.11px;font-size:18.06px;line-height:18.06px;color:#0b5cab;font-weight:400;font-style:normal;">Josh Davis</div>
<div class="t " style="left:288.00px;top:1146.14px;font-size:18.5px;line-height:18.5px;color:#0b5cab;font-weight:400;font-style:normal;letter-spacing:0.35px">(503) 421-4387</div>
<svg class="a" style="left:530.40px;top:1148.60px;" width="20.2" height="15" viewBox="0 0 20.2 15"><path d="M0 1.5 Q0 0 1.5 0 H18.7 Q20.2 0 20.2 1.5 V13.5 Q20.2 15 18.7 15 H1.5 Q0 15 0 13.5 Z" fill="#777"/><path d="M0.5 1 L10.1 9.2 L19.7 1" fill="none" stroke="#fff" stroke-width="1.5"/></svg>
<div class="t " style="left:556.80px;top:1146.51px;font-size:18.06px;line-height:18.06px;color:#0b5cab;font-weight:400;font-style:normal;">j.davis@expressl&amp;t.net</div>
<div class="a" style="left:814.40px;top:1197.00px;width:60.42px;height:61.00px;background:#fafafa"></div>
<div class="a" style="left:1176.92px;top:1197.00px;width:60.42px;height:61.00px;background:#fafafa"></div>
<div class="a" style="left:1237.34px;top:1197.00px;width:60.42px;height:61.00px;background:#fafafa"></div>
<div class="a" style="left:1599.86px;top:1197.00px;width:60.42px;height:61.00px;background:#fafafa"></div>
<div class="a" style="left:1660.28px;top:1197.00px;width:60.42px;height:61.00px;background:#fafafa"></div>
<div class="a" style="left:2022.80px;top:1197.00px;width:60.42px;height:61.00px;background:#fafafa"></div>
<div class="a" style="left:2083.22px;top:1197.00px;width:60.42px;height:61.00px;background:#fafafa"></div>
<div class="a" style="left:2445.74px;top:1197.00px;width:60.42px;height:61.00px;background:#fafafa"></div>
<div class="a" style="left:814.40px;top:1226.00px;width:1691.76px;height:1.00px;background:#f2f2f2"></div>
<div class="a cell" style="left:874.82px;top:1197.00px;width:60.42px;height:61.00px;background:#27ae60;color:#fff"><div class="s1">A</div><div class="s2">A</div></div>
<div class="a cell" style="left:935.24px;top:1197.00px;width:60.42px;height:61.00px;background:#27ae60;color:#fff"><div class="s1">A</div><div class="s2">A</div></div>
<div class="a cell" style="left:995.66px;top:1197.00px;width:60.42px;height:61.00px;background:#27ae60;color:#fff"><div class="s1">A</div><div class="s2">A</div></div>
<div class="a cell" style="left:1056.08px;top:1197.00px;width:60.42px;height:61.00px;background:#27ae60;color:#fff"><div class="s1">A</div><div class="s2">A</div></div>
<div class="a cell" style="left:1116.50px;top:1197.00px;width:60.42px;height:61.00px;background:#27ae60;color:#fff"><div class="s1">A</div><div class="s2">A</div></div>
<div class="a cell" style="left:1297.76px;top:1197.00px;width:60.42px;height:61.00px;background:#27ae60;color:#fff"><div class="s1">A</div><div class="s2">A</div></div>
<div class="a cell" style="left:1358.18px;top:1197.00px;width:60.42px;height:61.00px;background:#27ae60;color:#fff"><div class="s1">A</div><div class="s2">A</div></div>
<div class="a cell" style="left:1418.60px;top:1197.00px;width:60.42px;height:61.00px;background:#27ae60;color:#fff"><div class="s1">A</div><div class="s2">A</div></div>
<div class="a cell" style="left:1479.02px;top:1197.00px;width:60.42px;height:61.00px;background:#27ae60;color:#fff"><div class="s1">A</div><div class="s2">A</div></div>
<div class="a cell" style="left:1539.44px;top:1197.00px;width:60.42px;height:61.00px;background:#27ae60;color:#fff"><div class="s1">A</div><div class="s2">A</div></div>
<div class="a cell" style="left:1720.70px;top:1197.00px;width:60.42px;height:61.00px;background:#27ae60;color:#fff"><div class="s1">A</div><div class="s2">A</div></div>
<div class="a cell" style="left:1781.12px;top:1197.00px;width:60.42px;height:61.00px;background:#27ae60;color:#fff"><div class="s1">A</div><div class="s2">A</div></div>
<div class="a cell" style="left:1841.54px;top:1197.00px;width:60.42px;height:61.00px;background:#27ae60;color:#fff"><div class="s1">A</div><div class="s2">A</div></div>
<div class="a cell" style="left:1901.96px;top:1197.00px;width:60.42px;height:61.00px;background:#27ae60;color:#fff"><div class="s1">A</div><div class="s2">A</div></div>
<div class="a cell" style="left:1962.38px;top:1197.00px;width:60.42px;height:61.00px;background:#27ae60;color:#fff"><div class="s1">A</div><div class="s2">A</div></div>
<div class="a cell" style="left:2143.64px;top:1197.00px;width:60.42px;height:61.00px;background:#27ae60;color:#fff"><div class="s1">A</div><div class="s2">A</div></div>
<div class="a cell" style="left:2204.06px;top:1197.00px;width:60.42px;height:61.00px;background:#27ae60;color:#fff"><div class="s1">A</div><div class="s2">A</div></div>
<div class="a cell" style="left:2264.48px;top:1197.00px;width:60.42px;height:61.00px;background:#27ae60;color:#fff"><div class="s1">A</div><div class="s2">A</div></div>
<div class="a cell" style="left:2324.90px;top:1197.00px;width:60.42px;height:61.00px;background:#27ae60;color:#fff"><div class="s1">A</div><div class="s2">A</div></div>
<div class="a cell" style="left:2385.32px;top:1197.00px;width:60.42px;height:61.00px;background:#27ae60;color:#fff"><div class="s1">A</div><div class="s2">A</div></div>
<svg class="a" style="left:44.60px;top:1205.50px;" width="42" height="42" viewBox="0 0 42 42"><defs><clipPath id="c13"><circle cx="21" cy="21" r="21"/></clipPath></defs><g clip-path="url(#c13)"><rect width="42" height="42" fill="#2a2a2a"/><path d="M-2 42 C-1 31 4 29 20 29 C36 29 41 31 42 42 Z" fill="#151515"/><path d="M15.5 42 L16.5 29 L23.5 29 L24.5 42 Z" fill="#f0f0f0"/><ellipse cx="20" cy="16" rx="7.6" ry="9.6" fill="#5a392a"/><rect x="16.8" y="22.6" width="6.4" height="6" fill="#5a392a"/><path d="M12 14 C11 3 29 3 28 14 C26 8 14 8 12 14 Z" fill="#171110"/><path d="M15.5 20.5 Q20 24 24.5 20.5" stroke="#eee" stroke-width="1.6" fill="none"/></g><circle cx="21" cy="21" r="20.6" fill="none" stroke="rgba(0,0,0,.12)" stroke-width="0.8"/></svg>
<div class="t " style="left:98.60px;top:1218.61px;font-size:18.06px;line-height:18.06px;color:#0b5cab;font-weight:400;font-style:normal;">Lauren Boyle</div>
<div class="t " style="left:288.00px;top:1207.14px;font-size:18.5px;line-height:18.5px;color:#0b5cab;font-weight:400;font-style:normal;letter-spacing:0.35px">(212) 842-5611</div>
<svg class="a" style="left:530.40px;top:1209.60px;" width="20.2" height="15" viewBox="0 0 20.2 15"><path d="M0 1.5 Q0 0 1.5 0 H18.7 Q20.2 0 20.2 1.5 V13.5 Q20.2 15 18.7 15 H1.5 Q0 15 0 13.5 Z" fill="#777"/><path d="M0.5 1 L10.1 9.2 L19.7 1" fill="none" stroke="#fff" stroke-width="1.5"/></svg>
<div class="t " style="left:556.80px;top:1207.51px;font-size:18.06px;line-height:18.06px;color:#0b5cab;font-weight:400;font-style:normal;">lboyle@uog.com</div>
<div class="a" style="left:275.00px;top:474.00px;width:1.00px;height:784.00px;background:#eaeaea"></div>
<div class="a" style="left:518.00px;top:474.00px;width:1.00px;height:784.00px;background:#eaeaea"></div>
<div class="a" style="left:814.00px;top:474.00px;width:1.00px;height:784.00px;background:#eaeaea"></div>
<div class="a" style="left:874.82px;top:474.00px;width:1.00px;height:49.00px;background:#efefef"></div>
<div class="a" style="left:874.82px;top:524.00px;width:1.00px;height:734.00px;background:#f1f1f1"></div>
<div class="a" style="left:935.24px;top:474.00px;width:1.00px;height:49.00px;background:#efefef"></div>
<div class="a" style="left:935.24px;top:524.00px;width:1.00px;height:734.00px;background:rgba(255,255,255,.6)"></div>
<div class="a" style="left:995.66px;top:474.00px;width:1.00px;height:49.00px;background:#efefef"></div>
<div class="a" style="left:995.66px;top:524.00px;width:1.00px;height:734.00px;background:rgba(255,255,255,.6)"></div>
<div class="a" style="left:1056.08px;top:474.00px;width:1.00px;height:49.00px;background:#efefef"></div>
<div class="a" style="left:1056.08px;top:524.00px;width:1.00px;height:734.00px;background:rgba(255,255,255,.6)"></div>
<div class="a" style="left:1116.50px;top:474.00px;width:1.00px;height:49.00px;background:#efefef"></div>
<div class="a" style="left:1116.50px;top:524.00px;width:1.00px;height:734.00px;background:rgba(255,255,255,.6)"></div>
<div class="a" style="left:1176.92px;top:474.00px;width:1.00px;height:49.00px;background:#efefef"></div>
<div class="a" style="left:1176.92px;top:524.00px;width:1.00px;height:734.00px;background:#f1f1f1"></div>
<div class="a" style="left:1237.34px;top:474.00px;width:1.00px;height:49.00px;background:#efefef"></div>
<div class="a" style="left:1237.34px;top:524.00px;width:1.00px;height:734.00px;background:#f1f1f1"></div>
<div class="a" style="left:1297.76px;top:474.00px;width:1.00px;height:49.00px;background:#efefef"></div>
<div class="a" style="left:1297.76px;top:524.00px;width:1.00px;height:734.00px;background:#f1f1f1"></div>
<div class="a" style="left:1358.18px;top:474.00px;width:1.00px;height:49.00px;background:#efefef"></div>
<div class="a" style="left:1358.18px;top:524.00px;width:1.00px;height:734.00px;background:rgba(255,255,255,.6)"></div>
<div class="a" style="left:1418.60px;top:474.00px;width:1.00px;height:49.00px;background:#efefef"></div>
<div class="a" style="left:1418.60px;top:524.00px;width:1.00px;height:734.00px;background:rgba(255,255,255,.6)"></div>
<div class="a" style="left:1479.02px;top:474.00px;width:1.00px;height:49.00px;background:#efefef"></div>
<div class="a" style="left:1479.02px;top:524.00px;width:1.00px;height:734.00px;background:rgba(255,255,255,.6)"></div>
<div class="a" style="left:1539.44px;top:474.00px;width:1.00px;height:49.00px;background:#efefef"></div>
<div class="a" style="left:1539.44px;top:524.00px;width:1.00px;height:734.00px;background:rgba(255,255,255,.6)"></div>
<div class="a" style="left:1599.86px;top:474.00px;width:1.00px;height:49.00px;background:#efefef"></div>
<div class="a" style="left:1599.86px;top:524.00px;width:1.00px;height:734.00px;background:#f1f1f1"></div>
<div class="a" style="left:1660.28px;top:474.00px;width:1.00px;height:49.00px;background:#efefef"></div>
<div class="a" style="left:1660.28px;top:524.00px;width:1.00px;height:734.00px;background:#f1f1f1"></div>
<div class="a" style="left:1720.70px;top:474.00px;width:1.00px;height:49.00px;background:#efefef"></div>
<div class="a" style="left:1720.70px;top:524.00px;width:1.00px;height:734.00px;background:#f1f1f1"></div>
<div class="a" style="left:1781.12px;top:474.00px;width:1.00px;height:49.00px;background:#efefef"></div>
<div class="a" style="left:1781.12px;top:524.00px;width:1.00px;height:734.00px;background:rgba(255,255,255,.6)"></div>
<div class="a" style="left:1841.54px;top:474.00px;width:1.00px;height:49.00px;background:#efefef"></div>
<div class="a" style="left:1841.54px;top:524.00px;width:1.00px;height:734.00px;background:rgba(255,255,255,.6)"></div>
<div class="a" style="left:1901.96px;top:474.00px;width:1.00px;height:49.00px;background:#efefef"></div>
<div class="a" style="left:1901.96px;top:524.00px;width:1.00px;height:734.00px;background:rgba(255,255,255,.6)"></div>
<div class="a" style="left:1962.38px;top:474.00px;width:1.00px;height:49.00px;background:#efefef"></div>
<div class="a" style="left:1962.38px;top:524.00px;width:1.00px;height:734.00px;background:rgba(255,255,255,.6)"></div>
<div class="a" style="left:2022.80px;top:474.00px;width:1.00px;height:49.00px;background:#efefef"></div>
<div class="a" style="left:2022.80px;top:524.00px;width:1.00px;height:734.00px;background:#f1f1f1"></div>
<div class="a" style="left:2083.22px;top:474.00px;width:1.00px;height:49.00px;background:#efefef"></div>
<div class="a" style="left:2083.22px;top:524.00px;width:1.00px;height:734.00px;background:#f1f1f1"></div>
<div class="a" style="left:2143.64px;top:474.00px;width:1.00px;height:49.00px;background:#efefef"></div>
<div class="a" style="left:2143.64px;top:524.00px;width:1.00px;height:734.00px;background:#f1f1f1"></div>
<div class="a" style="left:2204.06px;top:474.00px;width:1.00px;height:49.00px;background:#efefef"></div>
<div class="a" style="left:2204.06px;top:524.00px;width:1.00px;height:734.00px;background:rgba(255,255,255,.6)"></div>
<div class="a" style="left:2264.48px;top:474.00px;width:1.00px;height:49.00px;background:#efefef"></div>
<div class="a" style="left:2264.48px;top:524.00px;width:1.00px;height:734.00px;background:rgba(255,255,255,.6)"></div>
<div class="a" style="left:2324.90px;top:474.00px;width:1.00px;height:49.00px;background:#efefef"></div>
<div class="a" style="left:2324.90px;top:524.00px;width:1.00px;height:734.00px;background:rgba(255,255,255,.6)"></div>
<div class="a" style="left:2385.32px;top:474.00px;width:1.00px;height:49.00px;background:#efefef"></div>
<div class="a" style="left:2385.32px;top:524.00px;width:1.00px;height:734.00px;background:rgba(255,255,255,.6)"></div>
<div class="a" style="left:2445.74px;top:474.00px;width:1.00px;height:49.00px;background:#efefef"></div>
<div class="a" style="left:2445.74px;top:524.00px;width:1.00px;height:734.00px;background:#f1f1f1"></div>
<div class="a" style="left:2506.16px;top:474.00px;width:1.00px;height:49.00px;background:#efefef"></div>
<div class="a" style="left:2506.16px;top:524.00px;width:1.00px;height:734.00px;background:#f1f1f1"></div>
<div class="t " style="left:54.50px;top:1283.93px;font-size:17.8px;line-height:17.8px;color:#181818;font-weight:400;font-style:normal;">Page 1 · 20 records</div>
<div class="a" style="left:2298.00px;top:1280.40px;width:114.60px;height:41.10px;border:1.5px solid #e5e5e5;border-radius:6px;background:#fff"></div>
<div class="t " style="left:2320.40px;top:1293.63px;font-size:17.8px;line-height:17.8px;color:#c9c9c9;font-weight:400;font-style:normal;">Previous</div>
<div class="a" style="left:2423.80px;top:1280.40px;width:81.70px;height:41.10px;border:1.5px solid #9a9a9a;border-radius:6px;background:#fff"></div>
<div class="t " style="left:2446.00px;top:1293.55px;font-size:17.9px;line-height:17.9px;color:#0176d3;font-weight:400;font-style:normal;">Next</div>
</body></html>
